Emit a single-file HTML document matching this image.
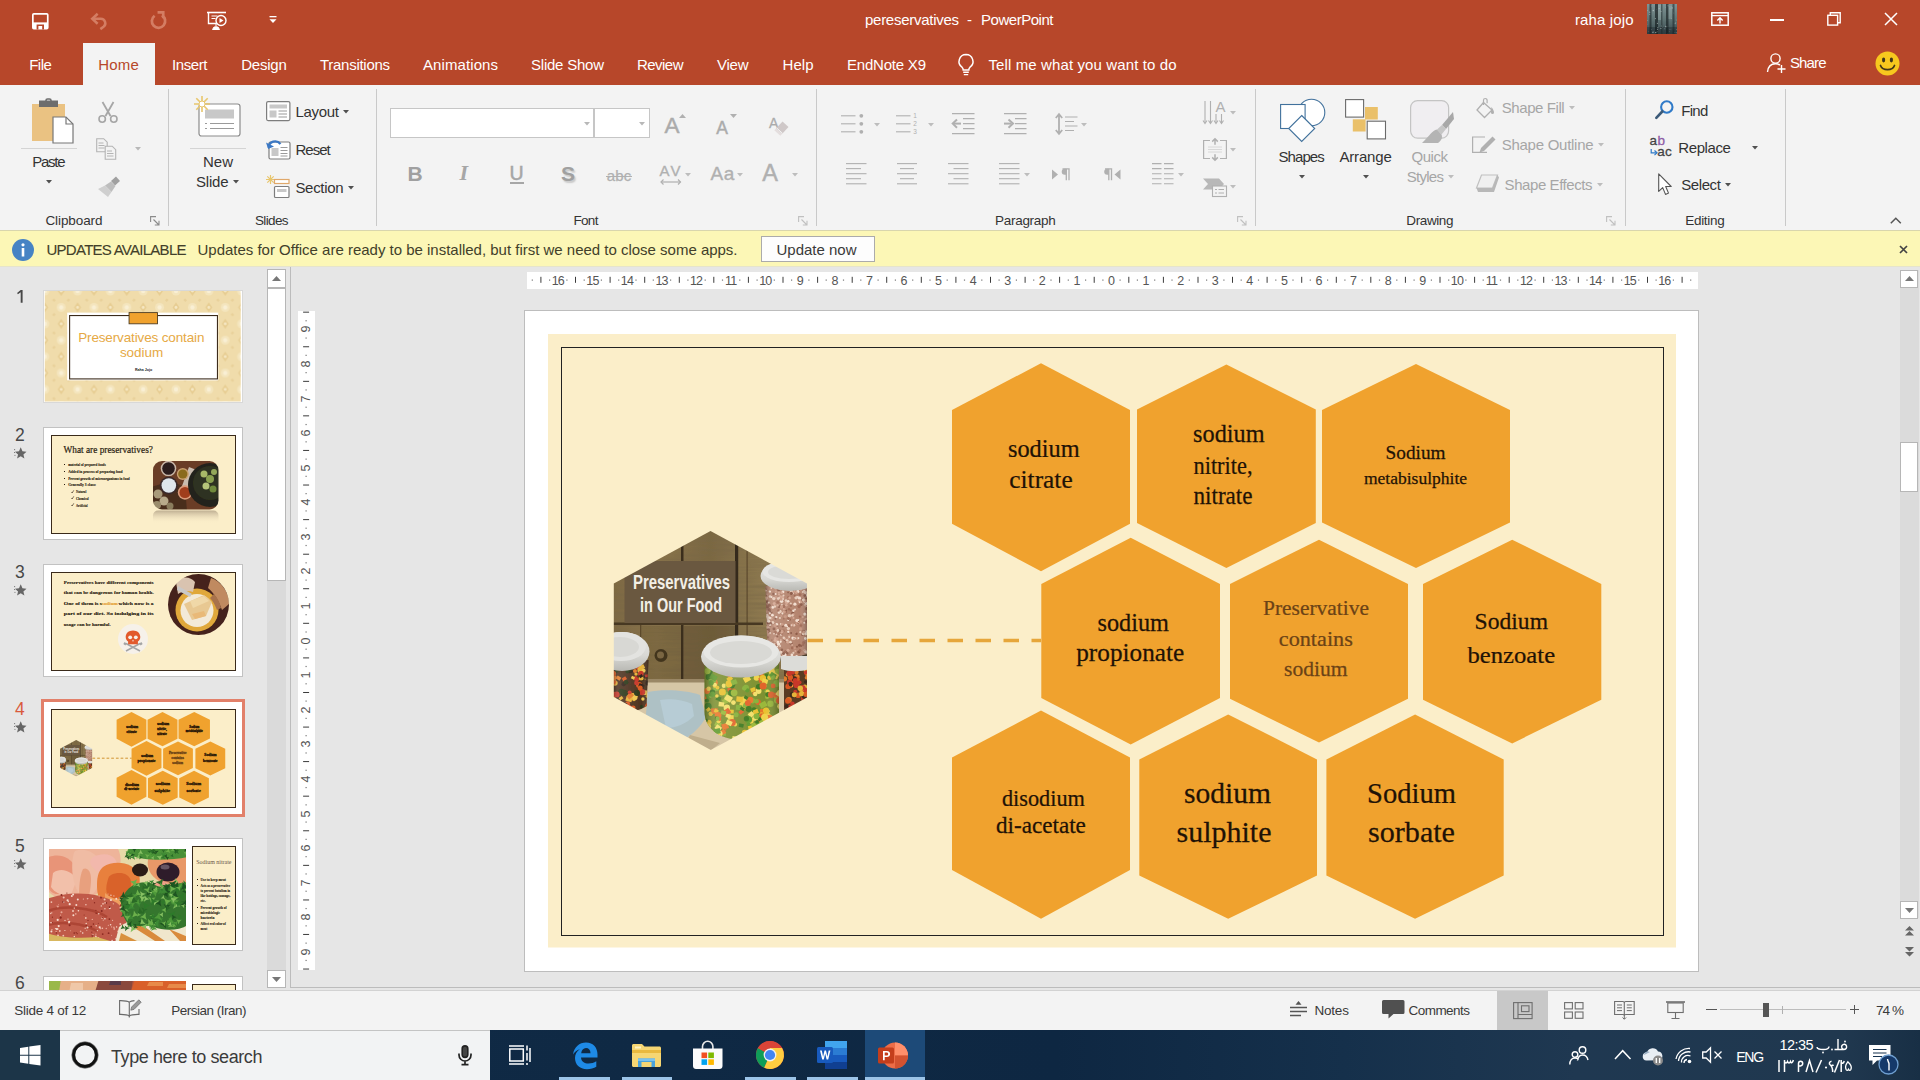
<!DOCTYPE html>
<html><head><meta charset="utf-8"><title>pereservatives - PowerPoint</title>
<style>
html,body{margin:0;padding:0;}
body{width:1920px;height:1080px;overflow:hidden;position:relative;background:#e6e6e6;font-family:"Liberation Sans",sans-serif;}
.a{position:absolute;display:block;}
.t{position:absolute;white-space:nowrap;line-height:24px;height:24px;}
svg{overflow:visible;}
svg text{font-family:"Liberation Serif",serif;}
svg text.sn{font-family:"Liberation Sans",sans-serif;}
</style></head>
<body>
<svg class="a" width="0" height="0" style="left:0;top:0"><symbol id="s4" viewBox="524 310 1175 662" preserveAspectRatio="none"><defs>
<clipPath id="hexclip"><polygon points="710.5,531 807,583.5 807,697.5 710.8,750 613.8,697 613.8,583.5"/></clipPath>
<clipPath id="jarC"><path d="M704.5 662h74.5v50c0 14-12 28-37 28s-37.500-14-37.500-28z"/></clipPath>
<clipPath id="jarR"><path d="M765.500 586h42v68c-14 5-32 5-40-3z"/></clipPath>
<clipPath id="jarL"><path d="M613 660h35.500l-2 46c-8 6-24 8-33.500 6z"/></clipPath>
<clipPath id="jarB"><rect x="784" y="666" width="24" height="44"/></clipPath>
<linearGradient id="wood" x1="0" y1="0" x2="1" y2="0"><stop offset="0" stop-color="#7a6641"/><stop offset=".25" stop-color="#8a744a"/><stop offset=".5" stop-color="#7b6842"/><stop offset=".75" stop-color="#8f7a50"/><stop offset="1" stop-color="#7d6943"/></linearGradient>
<linearGradient id="lid" x1="0" y1="0" x2="0" y2="1"><stop offset="0" stop-color="#ebebe8"/><stop offset=".6" stop-color="#d8d8d4"/><stop offset="1" stop-color="#b9b9b4"/></linearGradient>
<linearGradient id="glass" x1="0" y1="0" x2="1" y2="0"><stop offset="0" stop-color="#000" stop-opacity=".28"/><stop offset=".15" stop-color="#fff" stop-opacity=".12"/><stop offset=".8" stop-color="#fff" stop-opacity="0"/><stop offset="1" stop-color="#000" stop-opacity=".3"/></linearGradient>
<filter id="pb" x="-5%" y="-5%" width="110%" height="110%"><feGaussianBlur stdDeviation=".55"/></filter>
<filter id="wn" x="0" y="0" width="100%" height="100%"><feTurbulence type="fractalNoise" baseFrequency="0.02 0.35" numOctaves="2" seed="4"/><feColorMatrix values="0 0 0 0 0.18  0 0 0 0 0.13  0 0 0 0 0.06  0 0 0 .9 -.25"/></filter>
</defs><rect x="524" y="310" width="1175" height="662" fill="#fff"/><rect x="548" y="334" width="1128" height="613.500" fill="#FBEEC9"/><rect x="561.500" y="347.500" width="1102" height="588" fill="none" stroke="#222" stroke-width="1"/><path d="M807.500 640.500H1041" stroke="#e6a63b" stroke-width="3.700" stroke-dasharray="15.500 12.500"/><polygon points="1041.0,363.3 1130,410 1130,523.8 1041.0,571.3 952,523.8 952,410" fill="#F0A22E"/><polygon points="1226.4,364.5 1315.8,409.5 1315.8,523 1226.4,568 1137,523 1137,409.5" fill="#F0A22E"/><polygon points="1416.0,364 1510,410 1510,522.5 1416.0,568 1322,522.5 1322,410" fill="#F0A22E"/><polygon points="1130.7,537.8 1220,584 1220,698 1130.7,744.4 1041.3,698 1041.3,584" fill="#F0A22E"/><polygon points="1319.0,539.7 1408,584 1408,698.8 1319.0,742.5 1230,698.8 1230,584" fill="#F0A22E"/><polygon points="1512.2,539.7 1601.3,584 1601.3,699.7 1512.2,743.4 1423,699.7 1423,584" fill="#F0A22E"/><polygon points="1041.0,710.6 1130,757.5 1130,870 1041.0,918.7 952,870 952,757.5" fill="#F0A22E"/><polygon points="1228.2,714.4 1317,759.4 1317,875.6 1228.2,918.7 1139.3,875.6 1139.3,759.4" fill="#F0A22E"/><polygon points="1415.1,714.4 1503.7,759.4 1503.7,875.6 1415.1,918.7 1326.4,875.6 1326.4,759.4" fill="#F0A22E"/><g clip-path="url(#hexclip)"><g filter="url(#pb)"><rect x="603" y="520" width="215" height="242" fill="url(#wood)"/><rect x="613" y="530" width="195" height="160" filter="url(#wn)"/><rect x="681" y="530" width="2.5" height="160" fill="#3b2f1e"/><rect x="735" y="530" width="3.2" height="160" fill="#362b1b"/><rect x="640" y="530" width="1.3" height="160" fill="#5b482c"/><rect x="746.5" y="530" width="1.2" height="160" fill="#5b482c"/><rect x="613" y="622.500" width="150" height="2.500" fill="#463822"/><rect x="684" y="626" width="51" height="56" fill="#5e4c2f" opacity=".45"/><rect x="641" y="626" width="40" height="56" fill="#6b5836" opacity=".35"/><circle cx="661" cy="655.500" r="6.500" fill="#43351f"/><circle cx="660.500" cy="655" r="3.500" fill="#7a6642"/><rect x="613" y="679" width="195" height="73" fill="#d6c6a6"/><rect x="613" y="679" width="195" height="3.500" fill="#9a8766"/><path d="M648 692c15-3 38-2 52 3l6 22c-6 12-22 26-40 30l-22-12z" fill="#9dbfd3" opacity=".7"/><path d="M660 700c10-2 24 0 32 4l2 12c-8 8-18 12-28 12z" fill="#bcd3df" opacity=".6"/><path d="M690 735l30 8-10 8-24-8z" fill="#bfae8c"/><rect x="624.500" y="561" width="111" height="62" fill="#6b5940"/><g clip-path="url(#jarR)"><rect x="760" y="584" width="50" height="76" fill="#b4846e"/><circle cx="778.2" cy="598.6" r="1.4" fill="#e6cbb9"/><circle cx="800.1" cy="594.6" r="1.4" fill="#a06a55"/><circle cx="773.4" cy="594.0" r="1.2" fill="#8c5a47"/><circle cx="768.0" cy="617.7" r="1.6" fill="#e6cbb9"/><circle cx="805.7" cy="632.1" r="1.4" fill="#e6cbb9"/><circle cx="789.4" cy="615.8" r="1.7" fill="#e6cbb9"/><circle cx="788.5" cy="597.3" r="1.2" fill="#a06a55"/><circle cx="769.2" cy="609.6" r="1.6" fill="#8c5a47"/><circle cx="768.5" cy="628.0" r="1.1" fill="#e6cbb9"/><circle cx="788.1" cy="592.4" r="0.9" fill="#8c5a47"/><circle cx="785.8" cy="625.2" r="1.5" fill="#f1ddcf"/><circle cx="789.8" cy="619.7" r="1.1" fill="#8c5a47"/><circle cx="794.8" cy="605.1" r="1.4" fill="#a06a55"/><circle cx="785.8" cy="612.0" r="1.3" fill="#a06a55"/><circle cx="807.1" cy="596.3" r="1.2" fill="#d2a590"/><circle cx="770.7" cy="622.2" r="0.9" fill="#c79680"/><circle cx="767.4" cy="627.1" r="1.5" fill="#d2a590"/><circle cx="779.0" cy="612.5" r="1.3" fill="#f1ddcf"/><circle cx="767.0" cy="594.6" r="1.1" fill="#c79680"/><circle cx="793.2" cy="592.2" r="1.5" fill="#c79680"/><circle cx="789.4" cy="635.7" r="1.3" fill="#c79680"/><circle cx="781.0" cy="634.8" r="0.9" fill="#f1ddcf"/><circle cx="779.6" cy="630.8" r="1.3" fill="#8c5a47"/><circle cx="797.8" cy="597.1" r="1.1" fill="#f1ddcf"/><circle cx="804.3" cy="622.8" r="1.0" fill="#f1ddcf"/><circle cx="788.2" cy="649.8" r="1.6" fill="#a06a55"/><circle cx="776.3" cy="617.1" r="1.2" fill="#f1ddcf"/><circle cx="806.1" cy="598.6" r="1.0" fill="#8c5a47"/><circle cx="793.0" cy="588.8" r="1.6" fill="#8c5a47"/><circle cx="775.6" cy="588.3" r="1.2" fill="#d2a590"/><circle cx="790.8" cy="610.3" r="1.0" fill="#a06a55"/><circle cx="805.8" cy="633.8" r="1.5" fill="#f1ddcf"/><circle cx="803.6" cy="642.6" r="1.6" fill="#a06a55"/><circle cx="781.3" cy="615.9" r="1.0" fill="#c79680"/><circle cx="781.6" cy="601.3" r="1.7" fill="#f1ddcf"/><circle cx="771.1" cy="611.8" r="0.9" fill="#e6cbb9"/><circle cx="788.9" cy="625.6" r="1.7" fill="#a06a55"/><circle cx="765.1" cy="649.2" r="1.4" fill="#8c5a47"/><circle cx="791.9" cy="654.9" r="1.4" fill="#f1ddcf"/><circle cx="769.4" cy="647.4" r="1.7" fill="#f1ddcf"/><circle cx="785.1" cy="609.8" r="1.0" fill="#c79680"/><circle cx="779.1" cy="606.5" r="1.6" fill="#8c5a47"/><circle cx="786.7" cy="602.4" r="1.7" fill="#d2a590"/><circle cx="770.5" cy="626.0" r="0.9" fill="#a06a55"/><circle cx="777.1" cy="633.0" r="1.0" fill="#d2a590"/><circle cx="786.8" cy="651.6" r="1.2" fill="#8c5a47"/><circle cx="787.4" cy="642.5" r="1.2" fill="#8c5a47"/><circle cx="791.0" cy="643.2" r="1.5" fill="#8c5a47"/><circle cx="799.5" cy="645.3" r="1.5" fill="#8c5a47"/><circle cx="772.8" cy="622.5" r="1.5" fill="#e6cbb9"/><circle cx="798.8" cy="621.1" r="1.1" fill="#a06a55"/><circle cx="806.1" cy="619.3" r="1.6" fill="#d2a590"/><circle cx="806.0" cy="613.5" r="1.1" fill="#8c5a47"/><circle cx="784.7" cy="611.6" r="1.3" fill="#a06a55"/><circle cx="801.0" cy="621.6" r="1.4" fill="#c79680"/><circle cx="767.7" cy="634.2" r="1.6" fill="#c79680"/><circle cx="797.0" cy="621.5" r="1.0" fill="#c79680"/><circle cx="778.6" cy="644.1" r="1.7" fill="#f1ddcf"/><circle cx="784.4" cy="640.0" r="1.0" fill="#8c5a47"/><circle cx="771.5" cy="596.9" r="1.0" fill="#f1ddcf"/><circle cx="799.5" cy="598.2" r="1.6" fill="#f1ddcf"/><circle cx="792.9" cy="612.5" r="1.3" fill="#8c5a47"/><circle cx="764.9" cy="644.0" r="1.5" fill="#e6cbb9"/><circle cx="787.2" cy="653.4" r="1.2" fill="#8c5a47"/><circle cx="800.4" cy="602.8" r="1.1" fill="#d2a590"/><circle cx="786.1" cy="641.5" r="1.2" fill="#a06a55"/><circle cx="782.4" cy="597.2" r="1.6" fill="#d2a590"/><circle cx="803.5" cy="634.4" r="1.6" fill="#a06a55"/><circle cx="782.5" cy="652.2" r="1.3" fill="#a06a55"/><circle cx="770.7" cy="623.7" r="1.6" fill="#8c5a47"/><circle cx="790.8" cy="642.3" r="1.0" fill="#8c5a47"/><circle cx="784.8" cy="638.8" r="1.3" fill="#d2a590"/><circle cx="794.0" cy="625.2" r="1.3" fill="#e6cbb9"/><circle cx="802.9" cy="592.0" r="1.1" fill="#e6cbb9"/><circle cx="798.0" cy="623.5" r="1.3" fill="#e6cbb9"/><circle cx="783.5" cy="630.9" r="1.3" fill="#a06a55"/><circle cx="772.8" cy="607.4" r="1.3" fill="#f1ddcf"/><circle cx="786.3" cy="605.3" r="1.3" fill="#d2a590"/><circle cx="804.6" cy="650.5" r="1.1" fill="#f1ddcf"/><circle cx="770.0" cy="596.5" r="1.3" fill="#e6cbb9"/><circle cx="793.5" cy="618.0" r="1.1" fill="#d2a590"/><circle cx="798.5" cy="650.8" r="1.0" fill="#c79680"/><circle cx="792.3" cy="613.6" r="1.1" fill="#8c5a47"/><circle cx="806.6" cy="603.4" r="1.7" fill="#f1ddcf"/><circle cx="802.9" cy="599.4" r="1.4" fill="#8c5a47"/><circle cx="771.1" cy="618.2" r="1.3" fill="#d2a590"/><circle cx="782.5" cy="613.0" r="1.0" fill="#d2a590"/><circle cx="764.9" cy="626.8" r="1.3" fill="#e6cbb9"/><circle cx="780.9" cy="624.2" r="1.1" fill="#e6cbb9"/><circle cx="769.0" cy="652.3" r="1.1" fill="#e6cbb9"/><circle cx="767.7" cy="607.0" r="1.6" fill="#8c5a47"/><circle cx="775.9" cy="597.1" r="1.2" fill="#c79680"/><circle cx="800.0" cy="606.1" r="1.0" fill="#a06a55"/><circle cx="789.1" cy="637.0" r="1.0" fill="#e6cbb9"/><circle cx="799.2" cy="600.8" r="1.6" fill="#d2a590"/><circle cx="805.3" cy="632.4" r="1.5" fill="#e6cbb9"/><circle cx="790.8" cy="603.6" r="1.1" fill="#e6cbb9"/><circle cx="784.0" cy="611.7" r="1.3" fill="#d2a590"/><circle cx="791.4" cy="591.0" r="1.5" fill="#e6cbb9"/><circle cx="806.6" cy="606.3" r="1.0" fill="#d2a590"/><circle cx="791.7" cy="625.2" r="1.1" fill="#f1ddcf"/><circle cx="786.0" cy="600.5" r="1.2" fill="#e6cbb9"/><circle cx="807.8" cy="590.6" r="0.9" fill="#a06a55"/><circle cx="788.2" cy="601.3" r="1.3" fill="#f1ddcf"/><circle cx="768.7" cy="645.3" r="1.2" fill="#f1ddcf"/><circle cx="788.0" cy="650.2" r="1.7" fill="#d2a590"/><circle cx="794.3" cy="656.8" r="1.2" fill="#c79680"/><circle cx="796.1" cy="597.8" r="1.7" fill="#e6cbb9"/><circle cx="800.8" cy="589.0" r="1.4" fill="#d2a590"/><circle cx="783.0" cy="591.9" r="1.4" fill="#f1ddcf"/><circle cx="802.3" cy="634.9" r="1.1" fill="#8c5a47"/><circle cx="794.5" cy="591.2" r="1.0" fill="#d2a590"/><circle cx="783.6" cy="606.4" r="1.7" fill="#a06a55"/><circle cx="778.2" cy="590.4" r="1.6" fill="#8c5a47"/><circle cx="779.7" cy="588.1" r="1.2" fill="#f1ddcf"/><circle cx="776.3" cy="633.9" r="1.1" fill="#e6cbb9"/><circle cx="768.0" cy="645.2" r="1.0" fill="#a06a55"/><circle cx="765.8" cy="589.6" r="1.1" fill="#8c5a47"/><circle cx="767.7" cy="655.0" r="1.6" fill="#8c5a47"/><circle cx="792.9" cy="638.1" r="1.6" fill="#f1ddcf"/><circle cx="797.6" cy="638.4" r="1.3" fill="#d2a590"/><circle cx="795.9" cy="633.0" r="0.9" fill="#c79680"/><circle cx="803.2" cy="631.9" r="1.5" fill="#a06a55"/><circle cx="770.1" cy="624.7" r="1.3" fill="#e6cbb9"/><circle cx="800.4" cy="628.9" r="1.6" fill="#c79680"/><circle cx="806.1" cy="633.0" r="1.0" fill="#e6cbb9"/><circle cx="769.9" cy="613.2" r="1.0" fill="#f1ddcf"/><circle cx="788.6" cy="631.9" r="1.4" fill="#c79680"/><circle cx="774.8" cy="606.5" r="1.3" fill="#e6cbb9"/><circle cx="796.9" cy="623.2" r="1.3" fill="#c79680"/><circle cx="787.1" cy="640.2" r="1.3" fill="#e6cbb9"/><circle cx="801.2" cy="604.4" r="1.5" fill="#8c5a47"/><circle cx="796.6" cy="656.3" r="1.3" fill="#f1ddcf"/><circle cx="767.4" cy="651.7" r="1.1" fill="#e6cbb9"/><circle cx="791.1" cy="633.0" r="1.0" fill="#8c5a47"/><circle cx="778.6" cy="633.6" r="1.5" fill="#a06a55"/><circle cx="789.0" cy="588.9" r="0.9" fill="#d2a590"/><circle cx="806.8" cy="595.0" r="1.1" fill="#f1ddcf"/><circle cx="776.8" cy="624.2" r="1.3" fill="#f1ddcf"/><circle cx="797.8" cy="657.5" r="1.3" fill="#d2a590"/><circle cx="807.0" cy="653.5" r="0.9" fill="#f1ddcf"/><circle cx="767.4" cy="623.5" r="1.7" fill="#d2a590"/><circle cx="781.0" cy="652.2" r="1.6" fill="#e6cbb9"/><circle cx="789.6" cy="597.9" r="1.3" fill="#d2a590"/><circle cx="769.8" cy="645.4" r="1.3" fill="#e6cbb9"/><circle cx="794.9" cy="604.2" r="1.6" fill="#f1ddcf"/><circle cx="781.3" cy="599.1" r="1.7" fill="#c79680"/><circle cx="783.8" cy="609.1" r="1.0" fill="#d2a590"/><circle cx="780.5" cy="596.5" r="1.2" fill="#d2a590"/><circle cx="797.0" cy="646.7" r="1.0" fill="#8c5a47"/><circle cx="795.4" cy="651.1" r="1.1" fill="#d2a590"/><circle cx="766.9" cy="615.3" r="1.6" fill="#e6cbb9"/><circle cx="779.9" cy="618.0" r="1.1" fill="#e6cbb9"/><circle cx="776.3" cy="591.6" r="1.4" fill="#c79680"/><circle cx="805.2" cy="605.5" r="1.1" fill="#a06a55"/><circle cx="777.9" cy="642.1" r="1.5" fill="#f1ddcf"/><circle cx="802.9" cy="644.8" r="1.4" fill="#a06a55"/><circle cx="788.2" cy="638.4" r="0.9" fill="#c79680"/><circle cx="782.1" cy="631.0" r="1.0" fill="#d2a590"/><circle cx="785.4" cy="651.8" r="1.3" fill="#8c5a47"/><circle cx="784.8" cy="612.1" r="1.1" fill="#c79680"/><circle cx="796.5" cy="633.7" r="1.2" fill="#8c5a47"/><circle cx="777.2" cy="627.0" r="1.2" fill="#8c5a47"/><circle cx="792.3" cy="593.3" r="1.3" fill="#f1ddcf"/><circle cx="788.2" cy="619.7" r="1.2" fill="#f1ddcf"/><circle cx="782.8" cy="626.3" r="1.1" fill="#8c5a47"/><circle cx="779.0" cy="594.4" r="1.1" fill="#d2a590"/><circle cx="799.6" cy="602.1" r="0.9" fill="#f1ddcf"/><circle cx="780.8" cy="640.2" r="1.1" fill="#d2a590"/><circle cx="778.9" cy="592.3" r="1.1" fill="#d2a590"/><circle cx="769.5" cy="623.2" r="1.4" fill="#8c5a47"/><circle cx="768.1" cy="650.8" r="1.2" fill="#c79680"/><circle cx="783.6" cy="654.8" r="1.6" fill="#e6cbb9"/><circle cx="769.6" cy="617.8" r="1.5" fill="#f1ddcf"/><circle cx="806.6" cy="622.3" r="1.0" fill="#a06a55"/><circle cx="801.6" cy="656.1" r="1.1" fill="#e6cbb9"/><circle cx="773.8" cy="598.6" r="1.7" fill="#e6cbb9"/><circle cx="805.4" cy="638.5" r="1.4" fill="#f1ddcf"/><circle cx="767.7" cy="642.4" r="0.9" fill="#8c5a47"/><circle cx="774.2" cy="652.4" r="1.4" fill="#d2a590"/><circle cx="806.3" cy="631.9" r="1.3" fill="#f1ddcf"/><circle cx="794.7" cy="595.8" r="1.0" fill="#a06a55"/><circle cx="805.5" cy="601.4" r="1.1" fill="#a06a55"/><circle cx="764.1" cy="625.6" r="1.7" fill="#d2a590"/><circle cx="806.2" cy="633.1" r="1.6" fill="#f1ddcf"/><circle cx="787.2" cy="626.3" r="0.9" fill="#f1ddcf"/><circle cx="795.0" cy="609.5" r="0.9" fill="#f1ddcf"/><circle cx="802.9" cy="633.3" r="1.0" fill="#8c5a47"/><circle cx="793.4" cy="652.8" r="1.1" fill="#e6cbb9"/><circle cx="794.6" cy="638.3" r="1.2" fill="#f1ddcf"/><circle cx="772.7" cy="643.8" r="1.5" fill="#a06a55"/><circle cx="767.0" cy="622.7" r="1.1" fill="#8c5a47"/><circle cx="774.2" cy="603.5" r="1.5" fill="#d2a590"/><circle cx="768.8" cy="631.7" r="1.4" fill="#8c5a47"/><circle cx="785.3" cy="651.7" r="0.9" fill="#a06a55"/><circle cx="770.4" cy="615.5" r="1.1" fill="#a06a55"/><circle cx="770.2" cy="591.6" r="0.9" fill="#f1ddcf"/><circle cx="783.8" cy="637.8" r="1.2" fill="#e6cbb9"/><circle cx="807.9" cy="653.2" r="1.2" fill="#8c5a47"/><circle cx="792.7" cy="624.7" r="1.3" fill="#d2a590"/><circle cx="793.2" cy="614.5" r="1.2" fill="#d2a590"/><circle cx="783.5" cy="595.6" r="1.0" fill="#e6cbb9"/><circle cx="779.5" cy="654.9" r="1.0" fill="#8c5a47"/><circle cx="780.7" cy="641.8" r="1.1" fill="#f1ddcf"/><circle cx="767.9" cy="637.4" r="1.1" fill="#a06a55"/><circle cx="804.5" cy="601.5" r="1.2" fill="#f1ddcf"/><circle cx="765.3" cy="616.8" r="1.5" fill="#f1ddcf"/><circle cx="765.8" cy="590.4" r="1.0" fill="#e6cbb9"/><circle cx="775.3" cy="640.3" r="1.6" fill="#d2a590"/><circle cx="780.0" cy="611.4" r="1.7" fill="#e6cbb9"/><circle cx="775.5" cy="638.2" r="1.2" fill="#d2a590"/><circle cx="777.1" cy="638.5" r="1.4" fill="#c79680"/><circle cx="805.6" cy="592.6" r="1.6" fill="#e6cbb9"/><circle cx="784.9" cy="655.0" r="1.7" fill="#f1ddcf"/><circle cx="798.8" cy="651.9" r="1.6" fill="#8c5a47"/><circle cx="804.8" cy="600.8" r="1.5" fill="#c79680"/><circle cx="777.3" cy="636.4" r="1.0" fill="#8c5a47"/><circle cx="778.4" cy="610.4" r="1.2" fill="#a06a55"/><circle cx="767.5" cy="601.8" r="1.5" fill="#8c5a47"/><circle cx="781.9" cy="633.5" r="1.3" fill="#a06a55"/><circle cx="778.3" cy="656.6" r="1.6" fill="#e6cbb9"/><circle cx="775.7" cy="593.9" r="1.0" fill="#f1ddcf"/><circle cx="807.5" cy="656.0" r="1.0" fill="#8c5a47"/><circle cx="782.3" cy="631.4" r="1.4" fill="#c79680"/><circle cx="787.7" cy="642.2" r="1.5" fill="#d2a590"/><circle cx="776.9" cy="627.7" r="1.2" fill="#c79680"/><circle cx="775.5" cy="618.8" r="1.0" fill="#8c5a47"/><circle cx="770.7" cy="649.9" r="1.4" fill="#d2a590"/><circle cx="766.9" cy="605.6" r="1.1" fill="#a06a55"/><circle cx="774.2" cy="644.6" r="1.4" fill="#e6cbb9"/><circle cx="768.5" cy="621.2" r="1.6" fill="#f1ddcf"/><circle cx="804.2" cy="590.8" r="1.1" fill="#e6cbb9"/><circle cx="766.2" cy="630.0" r="1.6" fill="#8c5a47"/><circle cx="804.9" cy="614.1" r="1.6" fill="#f1ddcf"/><circle cx="790.5" cy="642.2" r="1.4" fill="#e6cbb9"/><circle cx="768.7" cy="629.7" r="1.4" fill="#8c5a47"/><circle cx="765.6" cy="611.8" r="0.9" fill="#d2a590"/><circle cx="765.7" cy="639.3" r="1.6" fill="#e6cbb9"/><circle cx="800.0" cy="616.6" r="1.2" fill="#a06a55"/><circle cx="777.7" cy="602.2" r="1.5" fill="#a06a55"/><circle cx="785.3" cy="616.6" r="1.5" fill="#c79680"/><circle cx="788.2" cy="632.7" r="1.0" fill="#8c5a47"/><circle cx="781.5" cy="607.0" r="1.7" fill="#c79680"/><circle cx="777.5" cy="654.7" r="1.1" fill="#a06a55"/><circle cx="802.9" cy="617.0" r="0.9" fill="#d2a590"/><circle cx="792.4" cy="615.4" r="1.2" fill="#e6cbb9"/><circle cx="783.1" cy="599.0" r="1.0" fill="#e6cbb9"/><circle cx="781.9" cy="649.8" r="1.3" fill="#8c5a47"/><circle cx="769.7" cy="591.6" r="1.0" fill="#f1ddcf"/><circle cx="767.9" cy="631.6" r="1.2" fill="#a06a55"/><circle cx="771.6" cy="612.4" r="1.0" fill="#8c5a47"/><circle cx="804.7" cy="595.6" r="1.3" fill="#8c5a47"/><circle cx="777.3" cy="646.6" r="0.9" fill="#f1ddcf"/><circle cx="777.8" cy="630.5" r="1.4" fill="#e6cbb9"/><circle cx="803.8" cy="631.4" r="1.6" fill="#8c5a47"/><circle cx="792.2" cy="648.0" r="1.4" fill="#a06a55"/><circle cx="801.2" cy="646.0" r="1.0" fill="#8c5a47"/><circle cx="765.8" cy="653.7" r="1.0" fill="#d2a590"/><circle cx="769.4" cy="605.3" r="1.5" fill="#8c5a47"/><circle cx="765.8" cy="627.4" r="1.5" fill="#e6cbb9"/><circle cx="793.4" cy="610.7" r="1.2" fill="#f1ddcf"/><circle cx="788.2" cy="631.9" r="1.1" fill="#f1ddcf"/><circle cx="777.6" cy="605.4" r="1.2" fill="#d2a590"/><circle cx="783.7" cy="618.7" r="0.9" fill="#a06a55"/><circle cx="807.4" cy="620.6" r="1.3" fill="#a06a55"/><circle cx="798.3" cy="620.1" r="1.0" fill="#f1ddcf"/><circle cx="781.6" cy="592.7" r="1.2" fill="#d2a590"/><circle cx="768.0" cy="618.9" r="1.3" fill="#e6cbb9"/><circle cx="765.8" cy="597.1" r="1.6" fill="#d2a590"/><circle cx="798.2" cy="623.8" r="0.9" fill="#a06a55"/><circle cx="803.4" cy="633.7" r="1.5" fill="#e6cbb9"/><circle cx="801.7" cy="657.7" r="1.5" fill="#e6cbb9"/><circle cx="772.5" cy="656.7" r="1.3" fill="#8c5a47"/><circle cx="794.2" cy="638.5" r="1.1" fill="#d2a590"/><circle cx="790.9" cy="605.7" r="1.2" fill="#a06a55"/><circle cx="776.1" cy="645.1" r="1.0" fill="#a06a55"/><circle cx="806.4" cy="621.6" r="1.4" fill="#a06a55"/><circle cx="786.3" cy="610.3" r="0.9" fill="#8c5a47"/><circle cx="781.8" cy="632.6" r="1.1" fill="#d2a590"/><circle cx="803.4" cy="599.8" r="1.5" fill="#e6cbb9"/><circle cx="797.8" cy="591.4" r="1.6" fill="#f1ddcf"/><circle cx="788.4" cy="628.6" r="1.6" fill="#e6cbb9"/><circle cx="775.1" cy="625.5" r="1.6" fill="#c79680"/><circle cx="799.1" cy="606.5" r="1.7" fill="#a06a55"/><circle cx="770.4" cy="611.2" r="1.0" fill="#8c5a47"/><circle cx="771.8" cy="640.1" r="0.9" fill="#a06a55"/><circle cx="775.2" cy="632.7" r="1.7" fill="#a06a55"/><circle cx="804.9" cy="650.7" r="1.5" fill="#c79680"/><circle cx="765.5" cy="598.5" r="1.4" fill="#f1ddcf"/><circle cx="782.4" cy="613.5" r="0.9" fill="#f1ddcf"/><circle cx="774.0" cy="633.7" r="0.9" fill="#e6cbb9"/><circle cx="789.0" cy="609.3" r="1.3" fill="#a06a55"/><circle cx="773.9" cy="628.9" r="1.4" fill="#8c5a47"/><circle cx="780.1" cy="646.0" r="1.0" fill="#e6cbb9"/><circle cx="805.2" cy="605.1" r="1.0" fill="#e6cbb9"/><circle cx="766.8" cy="598.1" r="1.4" fill="#d2a590"/><circle cx="781.7" cy="606.5" r="0.9" fill="#c79680"/><circle cx="800.1" cy="650.5" r="1.4" fill="#a06a55"/><circle cx="783.5" cy="653.6" r="1.5" fill="#8c5a47"/><circle cx="771.3" cy="588.0" r="0.9" fill="#e6cbb9"/><circle cx="781.9" cy="604.6" r="0.9" fill="#e6cbb9"/><circle cx="764.5" cy="626.6" r="1.7" fill="#8c5a47"/><circle cx="782.2" cy="624.3" r="1.4" fill="#c79680"/><circle cx="792.2" cy="644.9" r="1.0" fill="#d2a590"/><circle cx="766.8" cy="631.8" r="1.7" fill="#c79680"/><circle cx="798.5" cy="638.1" r="0.9" fill="#f1ddcf"/><circle cx="796.8" cy="620.6" r="1.5" fill="#f1ddcf"/><circle cx="771.7" cy="657.8" r="1.1" fill="#c79680"/><circle cx="765.7" cy="611.5" r="1.5" fill="#c79680"/><circle cx="805.5" cy="606.4" r="0.9" fill="#c79680"/><circle cx="788.4" cy="618.5" r="1.5" fill="#a06a55"/><circle cx="806.8" cy="608.7" r="1.6" fill="#8c5a47"/><circle cx="767.8" cy="623.5" r="1.0" fill="#8c5a47"/><circle cx="801.0" cy="602.2" r="1.0" fill="#d2a590"/><circle cx="772.4" cy="615.2" r="1.4" fill="#f1ddcf"/><circle cx="803.9" cy="632.1" r="1.5" fill="#c79680"/><circle cx="801.0" cy="625.5" r="1.3" fill="#a06a55"/><circle cx="794.7" cy="648.0" r="1.2" fill="#c79680"/><circle cx="774.3" cy="649.9" r="1.5" fill="#f1ddcf"/><circle cx="791.4" cy="593.4" r="1.6" fill="#8c5a47"/><circle cx="765.4" cy="595.8" r="1.4" fill="#8c5a47"/><circle cx="779.2" cy="597.9" r="0.9" fill="#e6cbb9"/><circle cx="770.1" cy="633.0" r="0.9" fill="#e6cbb9"/><circle cx="796.4" cy="592.6" r="1.4" fill="#d2a590"/><circle cx="772.8" cy="654.8" r="1.3" fill="#c79680"/><circle cx="766.9" cy="648.7" r="1.6" fill="#f1ddcf"/><circle cx="768.7" cy="602.4" r="1.0" fill="#e6cbb9"/><circle cx="805.8" cy="651.8" r="1.5" fill="#e6cbb9"/><circle cx="800.3" cy="632.2" r="1.1" fill="#e6cbb9"/><circle cx="769.8" cy="643.4" r="1.4" fill="#d2a590"/><rect x="765" y="584" width="43" height="76" fill="url(#glass)"/></g><path d="M762.500 650c8 8 30 9 45 4v4c-14 5-38 4-45-4z" fill="#3c3428" opacity=".75"/><ellipse cx="790" cy="576" rx="29.500" ry="15" fill="url(#lid)"/><ellipse cx="789" cy="571.500" rx="26.500" ry="10.500" fill="#e6e6e3"/><ellipse cx="789" cy="572" rx="21" ry="7" fill="#dadad6"/><g clip-path="url(#jarB)"><rect x="784" y="664" width="24" height="48" fill="#5a3a24"/><circle cx="791.7" cy="685.8" r="1.6" fill="#e6b33a"/><circle cx="806.3" cy="670.0" r="2.7" fill="#e6b33a"/><circle cx="802.5" cy="693.3" r="2.3" fill="#e6b33a"/><circle cx="798.8" cy="669.3" r="2.2" fill="#3d2a1c"/><circle cx="796.4" cy="672.1" r="2.3" fill="#e07b2a"/><circle cx="796.9" cy="677.1" r="2.8" fill="#e07b2a"/><circle cx="797.8" cy="680.1" r="2.2" fill="#d95a22"/><circle cx="788.8" cy="700.0" r="3.0" fill="#e07b2a"/><circle cx="792.3" cy="672.0" r="2.6" fill="#c7392a"/><circle cx="807.2" cy="692.9" r="2.9" fill="#d95a22"/><circle cx="790.3" cy="707.6" r="2.0" fill="#c7392a"/><circle cx="806.5" cy="677.7" r="1.8" fill="#e07b2a"/><circle cx="795.8" cy="709.6" r="2.4" fill="#e07b2a"/><circle cx="799.1" cy="682.9" r="2.2" fill="#3d2a1c"/><circle cx="805.4" cy="699.3" r="2.2" fill="#e07b2a"/><circle cx="792.9" cy="680.7" r="2.2" fill="#d95a22"/><circle cx="796.0" cy="683.9" r="2.8" fill="#c7392a"/><circle cx="806.7" cy="673.3" r="2.4" fill="#d95a22"/><circle cx="799.5" cy="682.6" r="2.1" fill="#c7392a"/><circle cx="804.8" cy="686.9" r="2.4" fill="#e6b33a"/><circle cx="788.1" cy="686.4" r="2.7" fill="#d95a22"/><circle cx="789.5" cy="682.0" r="2.5" fill="#c7392a"/><circle cx="796.2" cy="679.2" r="2.7" fill="#d95a22"/><circle cx="787.7" cy="674.6" r="1.9" fill="#e6b33a"/><circle cx="798.5" cy="682.6" r="1.9" fill="#c7392a"/><circle cx="790.2" cy="708.1" r="3.0" fill="#c7392a"/><circle cx="807.1" cy="672.3" r="2.1" fill="#c7392a"/><circle cx="803.1" cy="698.8" r="2.2" fill="#c7392a"/><circle cx="786.6" cy="706.3" r="2.0" fill="#3d2a1c"/><circle cx="795.1" cy="668.5" r="2.8" fill="#3d2a1c"/><circle cx="800.6" cy="689.0" r="2.5" fill="#3d2a1c"/><circle cx="784.5" cy="678.8" r="2.6" fill="#e07b2a"/><circle cx="801.8" cy="706.1" r="2.2" fill="#d95a22"/><circle cx="798.1" cy="695.2" r="2.8" fill="#d95a22"/><circle cx="804.5" cy="696.5" r="2.5" fill="#3d2a1c"/><circle cx="794.4" cy="678.9" r="2.6" fill="#3d2a1c"/><circle cx="789.8" cy="684.8" r="2.6" fill="#c7392a"/><circle cx="790.0" cy="685.8" r="2.2" fill="#d95a22"/><circle cx="804.6" cy="689.8" r="2.5" fill="#c7392a"/><circle cx="805.5" cy="681.8" r="1.6" fill="#3d2a1c"/><circle cx="805.8" cy="672.5" r="2.0" fill="#c7392a"/><circle cx="787.9" cy="700.8" r="2.9" fill="#d95a22"/><circle cx="792.4" cy="703.6" r="2.2" fill="#c7392a"/><circle cx="801.2" cy="689.5" r="2.5" fill="#e6b33a"/><circle cx="796.5" cy="685.2" r="2.9" fill="#c7392a"/><circle cx="807.8" cy="675.7" r="2.3" fill="#e07b2a"/><circle cx="801.5" cy="693.8" r="2.5" fill="#e6b33a"/><circle cx="790.6" cy="684.8" r="1.6" fill="#3d2a1c"/><circle cx="806.0" cy="694.4" r="2.5" fill="#d95a22"/><circle cx="790.4" cy="677.4" r="2.6" fill="#d95a22"/><circle cx="807.3" cy="709.8" r="2.9" fill="#3d2a1c"/><circle cx="789.1" cy="673.4" r="2.7" fill="#c7392a"/><circle cx="795.3" cy="691.6" r="1.9" fill="#c7392a"/><circle cx="792.5" cy="694.8" r="2.7" fill="#3d2a1c"/><circle cx="795.2" cy="680.4" r="2.4" fill="#c7392a"/><circle cx="802.7" cy="687.7" r="2.7" fill="#c7392a"/><circle cx="790.4" cy="683.8" r="2.0" fill="#3d2a1c"/><circle cx="800.3" cy="688.2" r="2.7" fill="#e6b33a"/><circle cx="792.6" cy="695.5" r="2.0" fill="#3d2a1c"/><circle cx="794.3" cy="694.8" r="2.5" fill="#e6b33a"/></g><path d="M781 656h28v13c-8 3-20 3-28 0z" fill="#dcdcd8"/><g clip-path="url(#jarL)"><rect x="613" y="658" width="38" height="56" fill="#4e3320"/><rect x="616.1" y="676.3" width="4.4" height="3.5" fill="#e07b2a" transform="rotate(32 618.3 678.6)"/><circle cx="640.4" cy="670.7" r="2.9" fill="#f0c850"/><circle cx="636.0" cy="674.1" r="1.7" fill="#e6b33a"/><circle cx="616.6" cy="670.9" r="2.0" fill="#2c3a1a"/><circle cx="640.5" cy="674.0" r="2.2" fill="#d95a22"/><rect x="641.3" y="690.4" width="5.7" height="4.6" fill="#f0c850" transform="rotate(4 644.2 693.2)"/><circle cx="635.3" cy="678.3" r="2.4" fill="#c7392a"/><circle cx="639.0" cy="685.1" r="3.0" fill="#d95a22"/><circle cx="627.7" cy="703.7" r="2.4" fill="#d95a22"/><circle cx="629.3" cy="670.9" r="2.4" fill="#33241a"/><circle cx="634.0" cy="699.3" r="1.9" fill="#e6b33a"/><circle cx="632.7" cy="695.9" r="2.9" fill="#e6b33a"/><rect x="646.1" y="694.6" width="3.8" height="3.0" fill="#e6b33a" transform="rotate(-38 648.0 696.4)"/><rect x="631.2" y="693.7" width="6.2" height="4.9" fill="#e6b33a" transform="rotate(-32 634.3 696.8)"/><rect x="628.1" y="698.5" width="3.7" height="2.9" fill="#c7392a" transform="rotate(10 629.9 700.3)"/><rect x="622.7" y="703.2" width="4.4" height="3.5" fill="#33241a" transform="rotate(4 624.9 705.4)"/><circle cx="644.9" cy="677.6" r="2.1" fill="#e6b33a"/><circle cx="641.9" cy="678.1" r="2.9" fill="#33241a"/><rect x="645.3" y="703.8" width="4.3" height="3.4" fill="#c7392a" transform="rotate(23 647.5 705.9)"/><rect x="622.5" y="677.1" width="4.2" height="3.3" fill="#d95a22" transform="rotate(-33 624.6 679.2)"/><circle cx="647.9" cy="683.1" r="2.5" fill="#33241a"/><rect x="613.1" y="676.8" width="3.2" height="2.6" fill="#c7392a" transform="rotate(-2 614.7 678.4)"/><rect x="637.4" y="664.5" width="4.8" height="3.8" fill="#d95a22" transform="rotate(9 639.8 666.9)"/><circle cx="634.9" cy="697.4" r="2.6" fill="#f0c850"/><circle cx="614.4" cy="694.4" r="2.6" fill="#c7392a"/><circle cx="619.3" cy="665.8" r="2.8" fill="#f0c850"/><circle cx="643.5" cy="670.7" r="2.1" fill="#f0c850"/><circle cx="623.6" cy="684.2" r="2.1" fill="#33241a"/><circle cx="633.2" cy="707.9" r="2.4" fill="#d95a22"/><circle cx="617.2" cy="702.9" r="2.5" fill="#33241a"/><rect x="610.9" y="680.0" width="5.1" height="4.1" fill="#f0c850" transform="rotate(-2 613.5 682.6)"/><rect x="624.8" y="666.3" width="5.3" height="4.2" fill="#c7392a" transform="rotate(10 627.4 668.9)"/><circle cx="627.9" cy="664.4" r="2.7" fill="#2c3a1a"/><circle cx="643.4" cy="670.2" r="1.6" fill="#f0c850"/><rect x="625.7" y="696.6" width="6.2" height="4.9" fill="#e6b33a" transform="rotate(17 628.8 699.7)"/><circle cx="642.9" cy="699.0" r="1.7" fill="#f0c850"/><rect x="627.4" y="693.1" width="6.0" height="4.8" fill="#e07b2a" transform="rotate(-39 630.4 696.1)"/><circle cx="613.5" cy="695.2" r="2.9" fill="#e07b2a"/><circle cx="623.9" cy="692.8" r="3.1" fill="#2c3a1a"/><circle cx="615.1" cy="681.6" r="2.5" fill="#33241a"/><circle cx="618.8" cy="710.4" r="1.8" fill="#f0c850"/><rect x="638.2" y="684.0" width="5.7" height="4.6" fill="#33241a" transform="rotate(23 641.1 686.9)"/><rect x="631.1" y="676.3" width="3.4" height="2.7" fill="#f0c850" transform="rotate(26 632.8 678.0)"/><circle cx="624.6" cy="693.1" r="3.2" fill="#2c3a1a"/><circle cx="642.1" cy="692.1" r="3.2" fill="#c7392a"/><circle cx="637.0" cy="692.9" r="3.0" fill="#2c3a1a"/><circle cx="637.1" cy="679.4" r="2.0" fill="#c7392a"/><circle cx="641.6" cy="706.6" r="1.7" fill="#2c3a1a"/><rect x="642.3" y="709.8" width="3.7" height="2.9" fill="#2c3a1a" transform="rotate(4 644.2 711.7)"/><circle cx="640.2" cy="688.0" r="2.5" fill="#d95a22"/><circle cx="640.9" cy="673.6" r="2.8" fill="#c7392a"/><circle cx="615.0" cy="683.0" r="2.7" fill="#e6b33a"/><rect x="610.9" y="680.0" width="4.9" height="3.9" fill="#d95a22" transform="rotate(22 613.3 682.5)"/><circle cx="621.2" cy="691.8" r="3.0" fill="#2c3a1a"/><circle cx="629.7" cy="692.3" r="1.9" fill="#c7392a"/><circle cx="641.2" cy="677.9" r="2.5" fill="#e6b33a"/><circle cx="631.1" cy="671.2" r="1.7" fill="#33241a"/><circle cx="616.7" cy="694.4" r="2.9" fill="#c7392a"/><circle cx="614.1" cy="677.5" r="2.6" fill="#e07b2a"/><circle cx="647.7" cy="705.6" r="2.4" fill="#d95a22"/><rect x="643.6" y="675.7" width="3.5" height="2.8" fill="#33241a" transform="rotate(26 645.4 677.4)"/><rect x="645.1" y="674.5" width="3.3" height="2.7" fill="#c7392a" transform="rotate(-10 646.7 676.2)"/><circle cx="614.0" cy="665.7" r="2.2" fill="#f0c850"/><rect x="644.4" y="706.0" width="3.4" height="2.7" fill="#d95a22" transform="rotate(34 646.2 707.7)"/><rect x="635.6" y="666.2" width="4.2" height="3.4" fill="#c7392a" transform="rotate(37 637.7 668.3)"/><circle cx="636.4" cy="682.9" r="2.3" fill="#c7392a"/><rect x="619.4" y="696.7" width="3.8" height="3.0" fill="#e6b33a" transform="rotate(-35 621.2 698.6)"/><rect x="629.3" y="662.3" width="6.1" height="4.9" fill="#e6b33a" transform="rotate(17 632.3 665.3)"/><circle cx="635.6" cy="711.3" r="1.7" fill="#c7392a"/><circle cx="613.2" cy="673.5" r="2.8" fill="#d95a22"/><circle cx="639.5" cy="669.1" r="2.1" fill="#e6b33a"/><circle cx="626.1" cy="682.2" r="2.3" fill="#2c3a1a"/><rect x="634.0" y="661.9" width="5.5" height="4.4" fill="#c7392a" transform="rotate(-27 636.7 664.6)"/><rect x="639.6" y="665.1" width="5.2" height="4.1" fill="#e6b33a" transform="rotate(-29 642.1 667.7)"/><circle cx="628.7" cy="668.7" r="3.1" fill="#2c3a1a"/><circle cx="615.6" cy="710.7" r="2.1" fill="#c7392a"/><circle cx="635.0" cy="670.9" r="2.0" fill="#e07b2a"/><circle cx="628.8" cy="706.7" r="2.3" fill="#c7392a"/><circle cx="627.4" cy="671.5" r="2.0" fill="#2c3a1a"/><rect x="639.4" y="674.7" width="3.5" height="2.8" fill="#33241a" transform="rotate(-31 641.1 676.5)"/><rect x="613" y="658" width="36" height="56" fill="url(#glass)"/></g><ellipse cx="622" cy="651.500" rx="27.500" ry="19.500" fill="url(#lid)"/><ellipse cx="621" cy="646.500" rx="25" ry="14.500" fill="#e3e3e0"/><ellipse cx="620" cy="647" rx="19" ry="10" fill="#d8d8d4"/><g clip-path="url(#jarC)"><rect x="700" y="660" width="84" height="82" fill="#7d9130"/><circle cx="778.4" cy="672.2" r="3.4" fill="#9ab83a"/><circle cx="767.5" cy="676.8" r="3.2" fill="#3f7a22"/><circle cx="723.9" cy="685.7" r="2.2" fill="#f3e06a"/><circle cx="772.1" cy="672.3" r="3.1" fill="#f0d24a"/><circle cx="752.6" cy="700.7" r="2.7" fill="#86b13a"/><circle cx="704.1" cy="729.6" r="2.7" fill="#e8772a"/><circle cx="707.1" cy="698.3" r="2.3" fill="#e8772a"/><rect x="714.6" y="721.9" width="6.2" height="4.9" fill="#9ab83a" transform="rotate(26 717.7 725.0)"/><circle cx="771.6" cy="722.1" r="3.2" fill="#e8772a"/><circle cx="750.5" cy="720.4" r="3.3" fill="#f0d24a"/><circle cx="709.0" cy="722.2" r="2.5" fill="#e9c12f"/><circle cx="730.4" cy="688.9" r="3.0" fill="#e2642a"/><circle cx="735.1" cy="724.5" r="2.0" fill="#f0d24a"/><circle cx="746.8" cy="740.9" r="1.9" fill="#3f7a22"/><circle cx="769.2" cy="694.4" r="3.5" fill="#86b13a"/><rect x="727.8" y="682.8" width="6.6" height="5.3" fill="#3f7a22" transform="rotate(29 731.1 686.1)"/><rect x="745.5" y="732.1" width="4.6" height="3.7" fill="#5f9a2d" transform="rotate(-0 747.8 734.5)"/><circle cx="743.0" cy="707.3" r="2.8" fill="#e9c12f"/><circle cx="710.7" cy="713.8" r="2.1" fill="#f0d24a"/><circle cx="766.1" cy="670.2" r="2.0" fill="#9ab83a"/><rect x="765.0" y="712.5" width="5.3" height="4.2" fill="#9ab83a" transform="rotate(-32 767.6 715.1)"/><circle cx="770.1" cy="721.1" r="1.9" fill="#5f9a2d"/><circle cx="748.5" cy="724.4" r="2.0" fill="#5f9a2d"/><rect x="711.1" y="708.4" width="6.7" height="5.4" fill="#e8772a" transform="rotate(-3 714.4 711.8)"/><rect x="732.3" y="736.3" width="3.7" height="2.9" fill="#f3e06a" transform="rotate(8 734.1 738.2)"/><rect x="746.3" y="667.1" width="7.1" height="5.7" fill="#e9c12f" transform="rotate(-13 749.8 670.7)"/><rect x="719.7" y="690.2" width="5.2" height="4.1" fill="#3f7a22" transform="rotate(28 722.3 692.8)"/><circle cx="708.1" cy="706.3" r="3.5" fill="#3f7a22"/><circle cx="736.1" cy="714.8" r="2.5" fill="#86b13a"/><circle cx="728.7" cy="682.9" r="3.0" fill="#9ab83a"/><rect x="774.2" y="722.0" width="7.0" height="5.6" fill="#e9c12f" transform="rotate(31 777.7 725.5)"/><rect x="768.3" y="667.6" width="5.9" height="4.7" fill="#f0d24a" transform="rotate(10 771.2 670.5)"/><circle cx="751.7" cy="727.7" r="1.9" fill="#5f9a2d"/><circle cx="743.5" cy="700.1" r="3.5" fill="#f0d24a"/><rect x="728.5" y="678.4" width="3.8" height="3.1" fill="#86b13a" transform="rotate(-33 730.4 680.4)"/><circle cx="748.9" cy="737.0" r="2.6" fill="#86b13a"/><rect x="724.0" y="695.8" width="4.6" height="3.7" fill="#9ab83a" transform="rotate(19 726.3 698.1)"/><rect x="722.8" y="698.6" width="6.1" height="4.9" fill="#9ab83a" transform="rotate(-24 725.8 701.6)"/><circle cx="758.0" cy="702.1" r="2.8" fill="#e2642a"/><circle cx="727.6" cy="685.9" r="2.2" fill="#86b13a"/><rect x="774.2" y="693.9" width="6.9" height="5.5" fill="#e8772a" transform="rotate(-21 777.7 697.3)"/><circle cx="746.3" cy="704.4" r="2.3" fill="#9ab83a"/><circle cx="762.7" cy="679.7" r="1.9" fill="#3f7a22"/><circle cx="708.7" cy="696.7" r="2.6" fill="#5f9a2d"/><circle cx="779.2" cy="718.1" r="3.5" fill="#f3e06a"/><rect x="727.9" y="715.1" width="5.8" height="4.7" fill="#f0d24a" transform="rotate(1 730.8 718.0)"/><circle cx="760.1" cy="723.0" r="3.2" fill="#e2642a"/><rect x="748.9" y="711.7" width="6.1" height="4.9" fill="#f3e06a" transform="rotate(-40 751.9 714.8)"/><circle cx="762.2" cy="711.4" r="2.7" fill="#e8772a"/><rect x="760.7" y="729.7" width="5.8" height="4.6" fill="#f3e06a" transform="rotate(15 763.6 732.6)"/><circle cx="725.9" cy="694.1" r="2.4" fill="#86b13a"/><circle cx="733.2" cy="691.8" r="3.2" fill="#e2642a"/><circle cx="726.8" cy="707.7" r="3.2" fill="#f3e06a"/><rect x="744.7" y="671.1" width="6.9" height="5.5" fill="#3f7a22" transform="rotate(9 748.2 674.5)"/><circle cx="722.4" cy="692.1" r="3.5" fill="#e9c12f"/><rect x="721.2" y="732.0" width="4.7" height="3.7" fill="#86b13a" transform="rotate(3 723.5 734.3)"/><circle cx="779.9" cy="706.3" r="2.7" fill="#f3e06a"/><rect x="728.8" y="709.6" width="4.9" height="3.9" fill="#e9c12f" transform="rotate(2 731.2 712.0)"/><rect x="709.0" y="693.2" width="5.0" height="4.0" fill="#86b13a" transform="rotate(-28 711.5 695.7)"/><rect x="715.8" y="696.6" width="5.0" height="4.0" fill="#3f7a22" transform="rotate(20 718.3 699.2)"/><rect x="708.6" y="692.4" width="4.9" height="3.9" fill="#5f9a2d" transform="rotate(1 711.0 694.8)"/><rect x="709.4" y="731.2" width="6.1" height="4.9" fill="#86b13a" transform="rotate(-6 712.4 734.2)"/><rect x="713.2" y="686.7" width="5.4" height="4.4" fill="#86b13a" transform="rotate(-7 715.9 689.5)"/><rect x="706.6" y="707.8" width="4.0" height="3.2" fill="#e9c12f" transform="rotate(-39 708.6 709.8)"/><circle cx="704.2" cy="720.6" r="2.8" fill="#f0d24a"/><circle cx="711.5" cy="669.1" r="1.9" fill="#e8772a"/><circle cx="746.0" cy="687.7" r="3.0" fill="#86b13a"/><circle cx="714.9" cy="682.7" r="2.9" fill="#e8772a"/><rect x="759.7" y="673.9" width="4.0" height="3.2" fill="#e8772a" transform="rotate(-1 761.7 675.9)"/><rect x="736.3" y="696.6" width="6.5" height="5.2" fill="#e9c12f" transform="rotate(6 739.5 699.9)"/><circle cx="714.9" cy="685.6" r="2.3" fill="#e9c12f"/><circle cx="711.6" cy="734.9" r="2.8" fill="#3f7a22"/><circle cx="751.4" cy="669.4" r="2.2" fill="#f3e06a"/><circle cx="776.9" cy="700.5" r="2.9" fill="#9ab83a"/><rect x="714.0" y="709.3" width="4.2" height="3.4" fill="#e9c12f" transform="rotate(25 716.1 711.4)"/><rect x="723.6" y="709.1" width="7.1" height="5.6" fill="#e2642a" transform="rotate(-35 727.1 712.6)"/><circle cx="755.5" cy="717.9" r="2.9" fill="#f3e06a"/><circle cx="770.5" cy="703.8" r="3.2" fill="#9ab83a"/><circle cx="716.9" cy="696.0" r="1.8" fill="#f0d24a"/><circle cx="731.6" cy="692.8" r="3.4" fill="#3f7a22"/><circle cx="709.0" cy="677.1" r="3.3" fill="#3f7a22"/><circle cx="733.4" cy="702.6" r="2.4" fill="#f3e06a"/><circle cx="754.5" cy="693.3" r="2.1" fill="#e8772a"/><circle cx="724.5" cy="729.8" r="2.0" fill="#e2642a"/><rect x="762.0" y="683.3" width="4.9" height="3.9" fill="#9ab83a" transform="rotate(-10 764.4 685.8)"/><circle cx="776.8" cy="683.4" r="3.5" fill="#86b13a"/><circle cx="769.2" cy="718.0" r="3.5" fill="#f0d24a"/><rect x="734.7" y="738.5" width="5.5" height="4.4" fill="#f3e06a" transform="rotate(-23 737.5 741.3)"/><rect x="767.6" y="674.4" width="5.4" height="4.4" fill="#86b13a" transform="rotate(19 770.3 677.1)"/><circle cx="762.1" cy="670.1" r="3.1" fill="#e8772a"/><circle cx="733.6" cy="674.4" r="2.1" fill="#9ab83a"/><rect x="751.6" y="673.3" width="5.6" height="4.5" fill="#3f7a22" transform="rotate(21 754.4 676.1)"/><circle cx="718.7" cy="721.2" r="2.0" fill="#f0d24a"/><rect x="755.9" y="686.4" width="5.1" height="4.0" fill="#e2642a" transform="rotate(31 758.5 688.9)"/><circle cx="769.5" cy="677.8" r="2.3" fill="#e9c12f"/><rect x="761.3" y="715.7" width="6.8" height="5.5" fill="#e9c12f" transform="rotate(16 764.8 719.1)"/><circle cx="722.9" cy="730.7" r="2.4" fill="#5f9a2d"/><circle cx="712.8" cy="735.5" r="3.1" fill="#e9c12f"/><circle cx="750.2" cy="699.9" r="3.2" fill="#e8772a"/><circle cx="707.0" cy="691.0" r="2.9" fill="#e8772a"/><rect x="718.6" y="702.1" width="5.5" height="4.4" fill="#f3e06a" transform="rotate(6 721.3 704.8)"/><rect x="771.9" y="673.1" width="6.3" height="5.1" fill="#f0d24a" transform="rotate(30 775.1 676.3)"/><circle cx="748.5" cy="719.5" r="3.6" fill="#5f9a2d"/><circle cx="728.2" cy="725.5" r="2.4" fill="#5f9a2d"/><circle cx="760.5" cy="741.9" r="2.9" fill="#9ab83a"/><rect x="708.3" y="735.5" width="5.1" height="4.1" fill="#3f7a22" transform="rotate(19 710.8 738.0)"/><rect x="764.5" y="711.9" width="5.2" height="4.2" fill="#e9c12f" transform="rotate(-24 767.1 714.5)"/><rect x="752.0" y="727.4" width="6.4" height="5.1" fill="#e2642a" transform="rotate(-37 755.2 730.6)"/><circle cx="757.4" cy="727.6" r="2.3" fill="#86b13a"/><circle cx="763.3" cy="685.5" r="2.3" fill="#e9c12f"/><circle cx="730.4" cy="674.8" r="2.9" fill="#e8772a"/><circle cx="757.7" cy="717.6" r="2.2" fill="#9ab83a"/><circle cx="756.6" cy="677.8" r="3.0" fill="#f0d24a"/><circle cx="757.8" cy="711.5" r="2.2" fill="#5f9a2d"/><rect x="758.8" y="677.5" width="6.0" height="4.8" fill="#e2642a" transform="rotate(-8 761.8 680.5)"/><circle cx="719.7" cy="719.1" r="1.8" fill="#e2642a"/><circle cx="708.6" cy="688.8" r="2.2" fill="#f0d24a"/><circle cx="712.6" cy="692.0" r="2.6" fill="#3f7a22"/><circle cx="746.4" cy="671.4" r="2.6" fill="#e2642a"/><rect x="755.7" y="737.7" width="5.6" height="4.5" fill="#5f9a2d" transform="rotate(37 758.5 740.5)"/><rect x="738.7" y="723.6" width="4.8" height="3.8" fill="#3f7a22" transform="rotate(12 741.1 726.0)"/><rect x="748.7" y="734.2" width="5.9" height="4.8" fill="#f0d24a" transform="rotate(-34 751.7 737.2)"/><circle cx="760.8" cy="669.9" r="2.5" fill="#e8772a"/><circle cx="718.1" cy="715.2" r="3.3" fill="#e8772a"/><circle cx="758.6" cy="691.0" r="2.9" fill="#f3e06a"/><rect x="764.3" y="689.2" width="4.9" height="3.9" fill="#86b13a" transform="rotate(27 766.7 691.7)"/><rect x="721.3" y="670.3" width="4.0" height="3.2" fill="#f3e06a" transform="rotate(36 723.3 672.3)"/><rect x="739.5" y="702.9" width="4.2" height="3.3" fill="#f0d24a" transform="rotate(10 741.6 705.0)"/><circle cx="714.8" cy="684.8" r="2.0" fill="#f3e06a"/><circle cx="707.0" cy="700.5" r="2.1" fill="#3f7a22"/><circle cx="767.9" cy="731.3" r="3.2" fill="#f3e06a"/><circle cx="709.5" cy="672.1" r="3.1" fill="#3f7a22"/><circle cx="704.7" cy="738.7" r="2.1" fill="#e8772a"/><circle cx="704.3" cy="727.5" r="3.0" fill="#9ab83a"/><rect x="742.7" y="703.7" width="5.1" height="4.1" fill="#86b13a" transform="rotate(29 745.2 706.2)"/><rect x="775.1" y="736.3" width="5.8" height="4.7" fill="#e9c12f" transform="rotate(-13 778.1 739.2)"/><circle cx="754.0" cy="709.8" r="2.6" fill="#3f7a22"/><rect x="750.8" y="687.7" width="4.8" height="3.9" fill="#e9c12f" transform="rotate(-22 753.2 690.1)"/><circle cx="760.2" cy="719.2" r="2.1" fill="#3f7a22"/><circle cx="775.7" cy="694.6" r="2.2" fill="#e2642a"/><rect x="709.3" y="678.0" width="6.8" height="5.4" fill="#86b13a" transform="rotate(-22 712.7 681.4)"/><rect x="765.5" y="713.9" width="4.3" height="3.4" fill="#f0d24a" transform="rotate(-22 767.6 716.1)"/><rect x="735.8" y="705.0" width="6.1" height="4.9" fill="#86b13a" transform="rotate(5 738.8 708.1)"/><rect x="765.5" y="715.0" width="6.5" height="5.2" fill="#e8772a" transform="rotate(4 768.7 718.3)"/><circle cx="758.3" cy="724.0" r="2.0" fill="#86b13a"/><circle cx="767.1" cy="697.0" r="2.1" fill="#9ab83a"/><circle cx="762.9" cy="678.1" r="3.2" fill="#e9c12f"/><circle cx="707.6" cy="671.1" r="3.1" fill="#9ab83a"/><rect x="709.7" y="674.6" width="6.9" height="5.5" fill="#5f9a2d" transform="rotate(30 713.2 678.0)"/><circle cx="746.8" cy="735.9" r="3.4" fill="#e8772a"/><rect x="764.8" y="724.4" width="6.2" height="5.0" fill="#e9c12f" transform="rotate(-30 768.0 727.5)"/><circle cx="732.3" cy="722.6" r="3.5" fill="#e2642a"/><circle cx="749.9" cy="675.4" r="2.8" fill="#5f9a2d"/><circle cx="773.2" cy="685.9" r="2.4" fill="#e2642a"/><circle cx="779.1" cy="700.6" r="3.2" fill="#e2642a"/><rect x="762.1" y="678.9" width="5.6" height="4.5" fill="#f0d24a" transform="rotate(14 764.9 681.7)"/><rect x="765.3" y="709.3" width="4.5" height="3.6" fill="#f0d24a" transform="rotate(-39 767.6 711.5)"/><rect x="727.3" y="676.5" width="5.4" height="4.3" fill="#e9c12f" transform="rotate(-37 730.0 679.2)"/><rect x="714.8" y="725.5" width="6.0" height="4.8" fill="#f3e06a" transform="rotate(37 717.9 728.6)"/><circle cx="756.7" cy="701.2" r="2.2" fill="#86b13a"/><circle cx="729.0" cy="684.0" r="3.4" fill="#e9c12f"/><circle cx="766.3" cy="721.8" r="2.4" fill="#e2642a"/><circle cx="730.9" cy="668.4" r="2.8" fill="#3f7a22"/><rect x="720.0" y="729.9" width="5.8" height="4.6" fill="#e8772a" transform="rotate(-29 722.9 732.8)"/><circle cx="733.2" cy="672.7" r="3.6" fill="#3f7a22"/><rect x="740.6" y="735.2" width="7.2" height="5.7" fill="#e9c12f" transform="rotate(32 744.1 738.8)"/><circle cx="711.2" cy="682.7" r="2.6" fill="#5f9a2d"/><rect x="722.0" y="723.5" width="6.7" height="5.4" fill="#e8772a" transform="rotate(-16 725.4 726.9)"/><circle cx="762.0" cy="722.7" r="2.7" fill="#9ab83a"/><rect x="743.9" y="696.1" width="3.8" height="3.1" fill="#3f7a22" transform="rotate(31 745.9 698.0)"/><rect x="760.1" y="701.9" width="6.8" height="5.5" fill="#9ab83a" transform="rotate(-28 763.5 705.3)"/><circle cx="719.6" cy="733.8" r="3.0" fill="#f3e06a"/><circle cx="747.2" cy="690.4" r="2.1" fill="#5f9a2d"/><circle cx="758.7" cy="686.7" r="2.8" fill="#3f7a22"/><circle cx="718.5" cy="736.4" r="2.9" fill="#f0d24a"/><rect x="775.9" y="691.2" width="6.4" height="5.1" fill="#f3e06a" transform="rotate(34 779.0 694.4)"/><circle cx="767.7" cy="691.6" r="2.1" fill="#f0d24a"/><circle cx="761.6" cy="714.4" r="2.2" fill="#e9c12f"/><rect x="731.5" y="679.9" width="5.8" height="4.6" fill="#86b13a" transform="rotate(-24 734.4 682.8)"/><circle cx="759.8" cy="739.3" r="2.9" fill="#5f9a2d"/><circle cx="766.0" cy="710.6" r="3.1" fill="#e9c12f"/><circle cx="744.8" cy="732.8" r="3.0" fill="#e9c12f"/><rect x="725.9" y="720.5" width="5.9" height="4.7" fill="#f3e06a" transform="rotate(24 728.8 723.5)"/><rect x="714.0" y="728.7" width="6.5" height="5.2" fill="#5f9a2d" transform="rotate(-13 717.3 731.9)"/><rect x="739.3" y="710.0" width="4.5" height="3.6" fill="#e2642a" transform="rotate(-38 741.6 712.2)"/><rect x="725.7" y="714.0" width="4.7" height="3.8" fill="#f3e06a" transform="rotate(18 728.1 716.4)"/><circle cx="729.0" cy="674.9" r="2.1" fill="#e8772a"/><circle cx="767.9" cy="694.5" r="2.5" fill="#3f7a22"/><circle cx="748.7" cy="709.1" r="3.0" fill="#3f7a22"/><rect x="748.4" y="725.5" width="5.3" height="4.3" fill="#e9c12f" transform="rotate(-15 751.0 728.2)"/><circle cx="762.7" cy="740.3" r="2.6" fill="#f0d24a"/><circle cx="744.3" cy="688.3" r="2.3" fill="#86b13a"/><circle cx="753.8" cy="725.3" r="2.5" fill="#9ab83a"/><circle cx="778.4" cy="737.3" r="2.9" fill="#5f9a2d"/><rect x="740.0" y="707.0" width="4.3" height="3.4" fill="#3f7a22" transform="rotate(32 742.1 709.1)"/><circle cx="770.2" cy="731.3" r="3.2" fill="#86b13a"/><circle cx="763.1" cy="686.0" r="3.6" fill="#e2642a"/><circle cx="773.3" cy="734.7" r="2.5" fill="#9ab83a"/><rect x="769.5" y="672.9" width="6.2" height="5.0" fill="#5f9a2d" transform="rotate(33 772.7 676.0)"/><circle cx="755.2" cy="694.0" r="2.2" fill="#f3e06a"/><circle cx="773.9" cy="737.9" r="2.9" fill="#9ab83a"/><circle cx="705.6" cy="720.5" r="2.2" fill="#3f7a22"/><circle cx="761.7" cy="715.6" r="2.3" fill="#e2642a"/><rect x="743.9" y="676.2" width="6.7" height="5.4" fill="#f0d24a" transform="rotate(-29 747.3 679.6)"/><circle cx="726.8" cy="674.5" r="1.8" fill="#9ab83a"/><rect x="753.3" y="709.6" width="5.2" height="4.2" fill="#e9c12f" transform="rotate(-23 755.9 712.2)"/><circle cx="771.2" cy="694.7" r="3.2" fill="#e2642a"/><rect x="767.3" y="739.3" width="4.7" height="3.7" fill="#e9c12f" transform="rotate(-28 769.7 741.6)"/><rect x="771.0" y="675.5" width="4.7" height="3.8" fill="#86b13a" transform="rotate(-32 773.4 677.9)"/><rect x="714.9" y="716.6" width="3.9" height="3.1" fill="#3f7a22" transform="rotate(13 716.8 718.5)"/><circle cx="734.1" cy="692.8" r="3.4" fill="#9ab83a"/><circle cx="751.7" cy="669.1" r="2.0" fill="#9ab83a"/><circle cx="757.1" cy="721.9" r="1.9" fill="#3f7a22"/><circle cx="712.4" cy="738.8" r="3.5" fill="#86b13a"/><circle cx="717.6" cy="718.7" r="2.1" fill="#86b13a"/><circle cx="712.5" cy="694.2" r="2.7" fill="#5f9a2d"/><circle cx="720.4" cy="739.6" r="3.4" fill="#5f9a2d"/><circle cx="717.5" cy="687.6" r="1.9" fill="#e9c12f"/><circle cx="707.6" cy="726.4" r="3.5" fill="#f0d24a"/><circle cx="756.3" cy="716.3" r="2.8" fill="#86b13a"/><circle cx="735.2" cy="741.5" r="3.1" fill="#f0d24a"/><rect x="724.6" y="695.5" width="7.1" height="5.7" fill="#f3e06a" transform="rotate(31 728.2 699.0)"/><rect x="762.1" y="731.5" width="5.9" height="4.7" fill="#9ab83a" transform="rotate(34 765.1 734.5)"/><rect x="720.9" y="710.7" width="5.0" height="4.0" fill="#9ab83a" transform="rotate(13 723.4 713.2)"/><circle cx="710.6" cy="713.9" r="1.9" fill="#e9c12f"/><circle cx="746.4" cy="718.7" r="2.6" fill="#3f7a22"/><circle cx="747.9" cy="703.0" r="3.0" fill="#e2642a"/><circle cx="749.0" cy="741.6" r="2.2" fill="#f3e06a"/><circle cx="708.9" cy="740.2" r="2.3" fill="#3f7a22"/><circle cx="764.6" cy="717.2" r="3.5" fill="#f0d24a"/><rect x="704" y="660" width="76" height="82" fill="url(#glass)"/></g><ellipse cx="741" cy="656.500" rx="40" ry="21" fill="url(#lid)"/><ellipse cx="741" cy="651.500" rx="37.500" ry="16" fill="#e7e7e4"/><ellipse cx="741" cy="652.500" rx="31" ry="11.500" fill="#d9d9d5"/></g></g><g font-family="Liberation Serif, serif"><text transform="translate(1043.8 457.2) scale(0.982 1)" text-anchor="middle" font-size="24.8" fill="#1f1206" stroke="#1f1206" stroke-width="0.25">sodium</text><text transform="translate(1041.0 488.0) scale(1.023 1)" text-anchor="middle" font-size="24.8" fill="#1f1206" stroke="#1f1206" stroke-width="0.25">citrate</text><text transform="translate(1228.8 442.0) scale(0.991 1)" text-anchor="middle" font-size="24.5" fill="#1f1206" stroke="#1f1206" stroke-width="0.25">sodium</text><text transform="translate(1223.0 473.7) scale(0.913 1)" text-anchor="middle" font-size="24.5" fill="#1f1206" stroke="#1f1206" stroke-width="0.25">nitrite,</text><text transform="translate(1223.0 503.7) scale(0.943 1)" text-anchor="middle" font-size="24.5" fill="#1f1206" stroke="#1f1206" stroke-width="0.25">nitrate</text><text transform="translate(1415.6 458.7) scale(0.999 1)" text-anchor="middle" font-size="19.3" fill="#1f1206" stroke="#1f1206" stroke-width="0.25">Sodium</text><text transform="translate(1415.5 483.8) scale(1.000 1)" text-anchor="middle" font-size="17.5" fill="#1f1206" stroke="#1f1206" stroke-width="0.25">metabisulphite</text><text transform="translate(1133.2 631.0) scale(0.979 1)" text-anchor="middle" font-size="24.8" fill="#1f1206" stroke="#1f1206" stroke-width="0.25">sodium</text><text transform="translate(1130.2 661.2) scale(1.018 1)" text-anchor="middle" font-size="24.8" fill="#1f1206" stroke="#1f1206" stroke-width="0.25">propionate</text><text transform="translate(1316.0 615.3) scale(0.988 1)" text-anchor="middle" font-size="21.7" fill="#6b4216" stroke="#6b4216" stroke-width="0.25">Preservative</text><text transform="translate(1315.8 646.0) scale(1.023 1)" text-anchor="middle" font-size="21.7" fill="#6b4216" stroke="#6b4216" stroke-width="0.25">contains</text><text transform="translate(1315.8 675.6) scale(0.995 1)" text-anchor="middle" font-size="21.7" fill="#6b4216" stroke="#6b4216" stroke-width="0.25">sodium</text><text transform="translate(1511.3 629.4) scale(0.983 1)" text-anchor="middle" font-size="24" fill="#1f1206" stroke="#1f1206" stroke-width="0.25">Sodium</text><text transform="translate(1511.3 662.8) scale(1.027 1)" text-anchor="middle" font-size="24" fill="#1f1206" stroke="#1f1206" stroke-width="0.25">benzoate</text><text transform="translate(1043.4 806.0) scale(0.982 1)" text-anchor="middle" font-size="22.7" fill="#1f1206" stroke="#1f1206" stroke-width="0.25">disodium</text><text transform="translate(1040.9 833.0) scale(1.020 1)" text-anchor="middle" font-size="22.7" fill="#1f1206" stroke="#1f1206" stroke-width="0.25">di-acetate</text><text transform="translate(1227.5 802.5) scale(0.995 1)" text-anchor="middle" font-size="29.7" fill="#1f1206" stroke="#1f1206" stroke-width="0.25">sodium</text><text transform="translate(1224.0 842.0) scale(1.010 1)" text-anchor="middle" font-size="29.7" fill="#1f1206" stroke="#1f1206" stroke-width="0.25">sulphite</text><text transform="translate(1411.5 802.5) scale(0.976 1)" text-anchor="middle" font-size="29.3" fill="#1f1206" stroke="#1f1206" stroke-width="0.25">Sodium</text><text transform="translate(1411.5 842.0) scale(1.028 1)" text-anchor="middle" font-size="29.3" fill="#1f1206" stroke="#1f1206" stroke-width="0.25">sorbate</text></g><g font-weight="bold" fill="#f3efe6"><text class="sn" transform="translate(681.5 589) scale(0.765 1)" text-anchor="middle" font-size="19.5">Preservatives</text><text class="sn" transform="translate(681 611.8) scale(0.742 1)" text-anchor="middle" font-size="19.5">in Our Food</text></g></symbol></svg>
<div class="a" style="left:527px;top:272px;width:1171px;height:17px;background:#fff;"></div>
<svg class="a" style="left:527px;top:272px;" width="1171" height="17" viewBox="0 0 1171 17"><rect x="13.4" y="4.800" width="1" height="6" fill="#3c3c3c"/><rect x="4.7" y="7.500" width="1.200" height="1.200" fill="#777"/><rect x="22.0" y="7.500" width="1.200" height="1.200" fill="#777"/><rect x="48.0" y="4.800" width="1" height="6" fill="#3c3c3c"/><rect x="39.3" y="7.500" width="1.200" height="1.200" fill="#777"/><rect x="56.6" y="7.500" width="1.200" height="1.200" fill="#777"/><rect x="82.6" y="4.800" width="1" height="6" fill="#3c3c3c"/><rect x="73.8" y="7.500" width="1.200" height="1.200" fill="#777"/><rect x="91.1" y="7.500" width="1.200" height="1.200" fill="#777"/><rect x="117.2" y="4.800" width="1" height="6" fill="#3c3c3c"/><rect x="108.4" y="7.500" width="1.200" height="1.200" fill="#777"/><rect x="125.7" y="7.500" width="1.200" height="1.200" fill="#777"/><rect x="151.8" y="4.800" width="1" height="6" fill="#3c3c3c"/><rect x="143.0" y="7.500" width="1.200" height="1.200" fill="#777"/><rect x="160.3" y="7.500" width="1.200" height="1.200" fill="#777"/><rect x="186.3" y="4.800" width="1" height="6" fill="#3c3c3c"/><rect x="177.6" y="7.500" width="1.200" height="1.200" fill="#777"/><rect x="194.9" y="7.500" width="1.200" height="1.200" fill="#777"/><rect x="220.9" y="4.800" width="1" height="6" fill="#3c3c3c"/><rect x="212.2" y="7.500" width="1.200" height="1.200" fill="#777"/><rect x="229.5" y="7.500" width="1.200" height="1.200" fill="#777"/><rect x="255.5" y="4.800" width="1" height="6" fill="#3c3c3c"/><rect x="246.7" y="7.500" width="1.200" height="1.200" fill="#777"/><rect x="264.0" y="7.500" width="1.200" height="1.200" fill="#777"/><rect x="290.1" y="4.800" width="1" height="6" fill="#3c3c3c"/><rect x="281.3" y="7.500" width="1.200" height="1.200" fill="#777"/><rect x="298.6" y="7.500" width="1.200" height="1.200" fill="#777"/><rect x="324.7" y="4.800" width="1" height="6" fill="#3c3c3c"/><rect x="315.9" y="7.500" width="1.200" height="1.200" fill="#777"/><rect x="333.2" y="7.500" width="1.200" height="1.200" fill="#777"/><rect x="359.2" y="4.800" width="1" height="6" fill="#3c3c3c"/><rect x="350.5" y="7.500" width="1.200" height="1.200" fill="#777"/><rect x="367.8" y="7.500" width="1.200" height="1.200" fill="#777"/><rect x="393.8" y="4.800" width="1" height="6" fill="#3c3c3c"/><rect x="385.1" y="7.500" width="1.200" height="1.200" fill="#777"/><rect x="402.4" y="7.500" width="1.200" height="1.200" fill="#777"/><rect x="428.4" y="4.800" width="1" height="6" fill="#3c3c3c"/><rect x="419.6" y="7.500" width="1.200" height="1.200" fill="#777"/><rect x="436.9" y="7.500" width="1.200" height="1.200" fill="#777"/><rect x="463.0" y="4.800" width="1" height="6" fill="#3c3c3c"/><rect x="454.2" y="7.500" width="1.200" height="1.200" fill="#777"/><rect x="471.5" y="7.500" width="1.200" height="1.200" fill="#777"/><rect x="497.6" y="4.800" width="1" height="6" fill="#3c3c3c"/><rect x="488.8" y="7.500" width="1.200" height="1.200" fill="#777"/><rect x="506.1" y="7.500" width="1.200" height="1.200" fill="#777"/><rect x="532.1" y="4.800" width="1" height="6" fill="#3c3c3c"/><rect x="523.4" y="7.500" width="1.200" height="1.200" fill="#777"/><rect x="540.7" y="7.500" width="1.200" height="1.200" fill="#777"/><rect x="566.7" y="4.800" width="1" height="6" fill="#3c3c3c"/><rect x="558.0" y="7.500" width="1.200" height="1.200" fill="#777"/><rect x="575.3" y="7.500" width="1.200" height="1.200" fill="#777"/><rect x="601.3" y="4.800" width="1" height="6" fill="#3c3c3c"/><rect x="592.5" y="7.500" width="1.200" height="1.200" fill="#777"/><rect x="609.8" y="7.500" width="1.200" height="1.200" fill="#777"/><rect x="635.9" y="4.800" width="1" height="6" fill="#3c3c3c"/><rect x="627.1" y="7.500" width="1.200" height="1.200" fill="#777"/><rect x="644.4" y="7.500" width="1.200" height="1.200" fill="#777"/><rect x="670.5" y="4.800" width="1" height="6" fill="#3c3c3c"/><rect x="661.7" y="7.500" width="1.200" height="1.200" fill="#777"/><rect x="679.0" y="7.500" width="1.200" height="1.200" fill="#777"/><rect x="705.0" y="4.800" width="1" height="6" fill="#3c3c3c"/><rect x="696.3" y="7.500" width="1.200" height="1.200" fill="#777"/><rect x="713.6" y="7.500" width="1.200" height="1.200" fill="#777"/><rect x="739.6" y="4.800" width="1" height="6" fill="#3c3c3c"/><rect x="730.9" y="7.500" width="1.200" height="1.200" fill="#777"/><rect x="748.2" y="7.500" width="1.200" height="1.200" fill="#777"/><rect x="774.2" y="4.800" width="1" height="6" fill="#3c3c3c"/><rect x="765.4" y="7.500" width="1.200" height="1.200" fill="#777"/><rect x="782.7" y="7.500" width="1.200" height="1.200" fill="#777"/><rect x="808.8" y="4.800" width="1" height="6" fill="#3c3c3c"/><rect x="800.0" y="7.500" width="1.200" height="1.200" fill="#777"/><rect x="817.3" y="7.500" width="1.200" height="1.200" fill="#777"/><rect x="843.3" y="4.800" width="1" height="6" fill="#3c3c3c"/><rect x="834.6" y="7.500" width="1.200" height="1.200" fill="#777"/><rect x="851.9" y="7.500" width="1.200" height="1.200" fill="#777"/><rect x="877.9" y="4.800" width="1" height="6" fill="#3c3c3c"/><rect x="869.2" y="7.500" width="1.200" height="1.200" fill="#777"/><rect x="886.5" y="7.500" width="1.200" height="1.200" fill="#777"/><rect x="912.5" y="4.800" width="1" height="6" fill="#3c3c3c"/><rect x="903.8" y="7.500" width="1.200" height="1.200" fill="#777"/><rect x="921.1" y="7.500" width="1.200" height="1.200" fill="#777"/><rect x="947.1" y="4.800" width="1" height="6" fill="#3c3c3c"/><rect x="938.3" y="7.500" width="1.200" height="1.200" fill="#777"/><rect x="955.6" y="7.500" width="1.200" height="1.200" fill="#777"/><rect x="981.7" y="4.800" width="1" height="6" fill="#3c3c3c"/><rect x="972.9" y="7.500" width="1.200" height="1.200" fill="#777"/><rect x="990.2" y="7.500" width="1.200" height="1.200" fill="#777"/><rect x="1016.2" y="4.800" width="1" height="6" fill="#3c3c3c"/><rect x="1007.5" y="7.500" width="1.200" height="1.200" fill="#777"/><rect x="1024.8" y="7.500" width="1.200" height="1.200" fill="#777"/><rect x="1050.8" y="4.800" width="1" height="6" fill="#3c3c3c"/><rect x="1042.1" y="7.500" width="1.200" height="1.200" fill="#777"/><rect x="1059.4" y="7.500" width="1.200" height="1.200" fill="#777"/><rect x="1085.4" y="4.800" width="1" height="6" fill="#3c3c3c"/><rect x="1076.7" y="7.500" width="1.200" height="1.200" fill="#777"/><rect x="1094.0" y="7.500" width="1.200" height="1.200" fill="#777"/><rect x="1120.0" y="4.800" width="1" height="6" fill="#3c3c3c"/><rect x="1111.2" y="7.500" width="1.200" height="1.200" fill="#777"/><rect x="1128.5" y="7.500" width="1.200" height="1.200" fill="#777"/><rect x="1154.6" y="4.800" width="1" height="6" fill="#3c3c3c"/><rect x="1145.8" y="7.500" width="1.200" height="1.200" fill="#777"/><rect x="1163.1" y="7.500" width="1.200" height="1.200" fill="#777"/></svg>
<div class="t" style="left:551.69px;top:269.27px;font-size:12.5px;color:#555;letter-spacing:-0.834px;">16</div>
<div class="t" style="left:586.27px;top:269.27px;font-size:12.5px;color:#555;letter-spacing:-0.834px;">15</div>
<div class="t" style="left:620.85px;top:269.27px;font-size:12.5px;color:#555;letter-spacing:-0.834px;">14</div>
<div class="t" style="left:655.43px;top:269.27px;font-size:12.5px;color:#555;letter-spacing:-0.834px;">13</div>
<div class="t" style="left:690.01px;top:269.27px;font-size:12.5px;color:#555;letter-spacing:-0.834px;">12</div>
<div class="t" style="left:725.02px;top:269.27px;font-size:12.5px;color:#555;letter-spacing:-0.779px;">11</div>
<div class="t" style="left:759.17px;top:269.27px;font-size:12.5px;color:#555;letter-spacing:-0.834px;">10</div>
<div class="t" style="left:796.80px;top:269.27px;font-size:12.5px;color:#555;">9</div>
<div class="t" style="left:831.38px;top:269.27px;font-size:12.5px;color:#555;">8</div>
<div class="t" style="left:865.96px;top:269.27px;font-size:12.5px;color:#555;">7</div>
<div class="t" style="left:900.54px;top:269.27px;font-size:12.5px;color:#555;">6</div>
<div class="t" style="left:935.12px;top:269.27px;font-size:12.5px;color:#555;">5</div>
<div class="t" style="left:969.70px;top:269.27px;font-size:12.5px;color:#555;">4</div>
<div class="t" style="left:1004.28px;top:269.27px;font-size:12.5px;color:#555;">3</div>
<div class="t" style="left:1038.86px;top:269.27px;font-size:12.5px;color:#555;">2</div>
<div class="t" style="left:1073.44px;top:269.27px;font-size:12.5px;color:#555;">1</div>
<div class="t" style="left:1108.02px;top:269.27px;font-size:12.5px;color:#555;">0</div>
<div class="t" style="left:1142.60px;top:269.27px;font-size:12.5px;color:#555;">1</div>
<div class="t" style="left:1177.18px;top:269.27px;font-size:12.5px;color:#555;">2</div>
<div class="t" style="left:1211.76px;top:269.27px;font-size:12.5px;color:#555;">3</div>
<div class="t" style="left:1246.34px;top:269.27px;font-size:12.5px;color:#555;">4</div>
<div class="t" style="left:1280.92px;top:269.27px;font-size:12.5px;color:#555;">5</div>
<div class="t" style="left:1315.50px;top:269.27px;font-size:12.5px;color:#555;">6</div>
<div class="t" style="left:1350.08px;top:269.27px;font-size:12.5px;color:#555;">7</div>
<div class="t" style="left:1384.66px;top:269.27px;font-size:12.5px;color:#555;">8</div>
<div class="t" style="left:1419.24px;top:269.27px;font-size:12.5px;color:#555;">9</div>
<div class="t" style="left:1450.77px;top:269.27px;font-size:12.5px;color:#555;letter-spacing:-0.834px;">10</div>
<div class="t" style="left:1485.78px;top:269.27px;font-size:12.5px;color:#555;letter-spacing:-0.779px;">11</div>
<div class="t" style="left:1519.93px;top:269.27px;font-size:12.5px;color:#555;letter-spacing:-0.834px;">12</div>
<div class="t" style="left:1554.51px;top:269.27px;font-size:12.5px;color:#555;letter-spacing:-0.834px;">13</div>
<div class="t" style="left:1589.09px;top:269.27px;font-size:12.5px;color:#555;letter-spacing:-0.834px;">14</div>
<div class="t" style="left:1623.67px;top:269.27px;font-size:12.5px;color:#555;letter-spacing:-0.834px;">15</div>
<div class="t" style="left:1658.25px;top:269.27px;font-size:12.5px;color:#555;letter-spacing:-0.834px;">16</div>
<div class="a" style="left:298px;top:311px;width:17.3px;height:659px;background:#fff;"></div>
<svg class="a" style="left:298px;top:311px;" width="17.3" height="659" viewBox="0 0 17.3 659"><rect x="5.100" y="0.6" width="6" height="1" fill="#3c3c3c"/><rect x="7.500" y="9.1" width="1.200" height="1.200" fill="#777"/><rect x="5.100" y="35.2" width="6" height="1" fill="#3c3c3c"/><rect x="7.500" y="26.4" width="1.200" height="1.200" fill="#777"/><rect x="7.500" y="43.7" width="1.200" height="1.200" fill="#777"/><rect x="5.100" y="69.8" width="6" height="1" fill="#3c3c3c"/><rect x="7.500" y="61.0" width="1.200" height="1.200" fill="#777"/><rect x="7.500" y="78.3" width="1.200" height="1.200" fill="#777"/><rect x="5.100" y="104.3" width="6" height="1" fill="#3c3c3c"/><rect x="7.500" y="95.6" width="1.200" height="1.200" fill="#777"/><rect x="7.500" y="112.9" width="1.200" height="1.200" fill="#777"/><rect x="5.100" y="138.9" width="6" height="1" fill="#3c3c3c"/><rect x="7.500" y="130.2" width="1.200" height="1.200" fill="#777"/><rect x="7.500" y="147.5" width="1.200" height="1.200" fill="#777"/><rect x="5.100" y="173.5" width="6" height="1" fill="#3c3c3c"/><rect x="7.500" y="164.7" width="1.200" height="1.200" fill="#777"/><rect x="7.500" y="182.0" width="1.200" height="1.200" fill="#777"/><rect x="5.100" y="208.1" width="6" height="1" fill="#3c3c3c"/><rect x="7.500" y="199.3" width="1.200" height="1.200" fill="#777"/><rect x="7.500" y="216.6" width="1.200" height="1.200" fill="#777"/><rect x="5.100" y="242.7" width="6" height="1" fill="#3c3c3c"/><rect x="7.500" y="233.9" width="1.200" height="1.200" fill="#777"/><rect x="7.500" y="251.2" width="1.200" height="1.200" fill="#777"/><rect x="5.100" y="277.2" width="6" height="1" fill="#3c3c3c"/><rect x="7.500" y="268.5" width="1.200" height="1.200" fill="#777"/><rect x="7.500" y="285.8" width="1.200" height="1.200" fill="#777"/><rect x="5.100" y="311.8" width="6" height="1" fill="#3c3c3c"/><rect x="7.500" y="303.1" width="1.200" height="1.200" fill="#777"/><rect x="7.500" y="320.4" width="1.200" height="1.200" fill="#777"/><rect x="5.100" y="346.4" width="6" height="1" fill="#3c3c3c"/><rect x="7.500" y="337.6" width="1.200" height="1.200" fill="#777"/><rect x="7.500" y="354.9" width="1.200" height="1.200" fill="#777"/><rect x="5.100" y="381.0" width="6" height="1" fill="#3c3c3c"/><rect x="7.500" y="372.2" width="1.200" height="1.200" fill="#777"/><rect x="7.500" y="389.5" width="1.200" height="1.200" fill="#777"/><rect x="5.100" y="415.6" width="6" height="1" fill="#3c3c3c"/><rect x="7.500" y="406.8" width="1.200" height="1.200" fill="#777"/><rect x="7.500" y="424.1" width="1.200" height="1.200" fill="#777"/><rect x="5.100" y="450.1" width="6" height="1" fill="#3c3c3c"/><rect x="7.500" y="441.4" width="1.200" height="1.200" fill="#777"/><rect x="7.500" y="458.7" width="1.200" height="1.200" fill="#777"/><rect x="5.100" y="484.7" width="6" height="1" fill="#3c3c3c"/><rect x="7.500" y="476.0" width="1.200" height="1.200" fill="#777"/><rect x="7.500" y="493.3" width="1.200" height="1.200" fill="#777"/><rect x="5.100" y="519.3" width="6" height="1" fill="#3c3c3c"/><rect x="7.500" y="510.5" width="1.200" height="1.200" fill="#777"/><rect x="7.500" y="527.8" width="1.200" height="1.200" fill="#777"/><rect x="5.100" y="553.9" width="6" height="1" fill="#3c3c3c"/><rect x="7.500" y="545.1" width="1.200" height="1.200" fill="#777"/><rect x="7.500" y="562.4" width="1.200" height="1.200" fill="#777"/><rect x="5.100" y="588.5" width="6" height="1" fill="#3c3c3c"/><rect x="7.500" y="579.7" width="1.200" height="1.200" fill="#777"/><rect x="7.500" y="597.0" width="1.200" height="1.200" fill="#777"/><rect x="5.100" y="623.0" width="6" height="1" fill="#3c3c3c"/><rect x="7.500" y="614.3" width="1.200" height="1.200" fill="#777"/><rect x="7.500" y="631.6" width="1.200" height="1.200" fill="#777"/><rect x="5.100" y="657.6" width="6" height="1" fill="#3c3c3c"/><rect x="7.500" y="648.9" width="1.200" height="1.200" fill="#777"/></svg>
<div class="t" style="left:296.2px;top:319.4px;width:20px;height:20px;line-height:20px;text-align:center;font-size:12.5px;color:#555;transform:rotate(-90deg);">9</div>
<div class="t" style="left:296.2px;top:354.0px;width:20px;height:20px;line-height:20px;text-align:center;font-size:12.5px;color:#555;transform:rotate(-90deg);">8</div>
<div class="t" style="left:296.2px;top:388.5px;width:20px;height:20px;line-height:20px;text-align:center;font-size:12.5px;color:#555;transform:rotate(-90deg);">7</div>
<div class="t" style="left:296.2px;top:423.1px;width:20px;height:20px;line-height:20px;text-align:center;font-size:12.5px;color:#555;transform:rotate(-90deg);">6</div>
<div class="t" style="left:296.2px;top:457.7px;width:20px;height:20px;line-height:20px;text-align:center;font-size:12.5px;color:#555;transform:rotate(-90deg);">5</div>
<div class="t" style="left:296.2px;top:492.3px;width:20px;height:20px;line-height:20px;text-align:center;font-size:12.5px;color:#555;transform:rotate(-90deg);">4</div>
<div class="t" style="left:296.2px;top:526.9px;width:20px;height:20px;line-height:20px;text-align:center;font-size:12.5px;color:#555;transform:rotate(-90deg);">3</div>
<div class="t" style="left:296.2px;top:561.4px;width:20px;height:20px;line-height:20px;text-align:center;font-size:12.5px;color:#555;transform:rotate(-90deg);">2</div>
<div class="t" style="left:296.2px;top:596.0px;width:20px;height:20px;line-height:20px;text-align:center;font-size:12.5px;color:#555;transform:rotate(-90deg);">1</div>
<div class="t" style="left:296.2px;top:630.6px;width:20px;height:20px;line-height:20px;text-align:center;font-size:12.5px;color:#555;transform:rotate(-90deg);">0</div>
<div class="t" style="left:296.2px;top:665.2px;width:20px;height:20px;line-height:20px;text-align:center;font-size:12.5px;color:#555;transform:rotate(-90deg);">1</div>
<div class="t" style="left:296.2px;top:699.8px;width:20px;height:20px;line-height:20px;text-align:center;font-size:12.5px;color:#555;transform:rotate(-90deg);">2</div>
<div class="t" style="left:296.2px;top:734.3px;width:20px;height:20px;line-height:20px;text-align:center;font-size:12.5px;color:#555;transform:rotate(-90deg);">3</div>
<div class="t" style="left:296.2px;top:768.9px;width:20px;height:20px;line-height:20px;text-align:center;font-size:12.5px;color:#555;transform:rotate(-90deg);">4</div>
<div class="t" style="left:296.2px;top:803.5px;width:20px;height:20px;line-height:20px;text-align:center;font-size:12.5px;color:#555;transform:rotate(-90deg);">5</div>
<div class="t" style="left:296.2px;top:838.1px;width:20px;height:20px;line-height:20px;text-align:center;font-size:12.5px;color:#555;transform:rotate(-90deg);">6</div>
<div class="t" style="left:296.2px;top:872.7px;width:20px;height:20px;line-height:20px;text-align:center;font-size:12.5px;color:#555;transform:rotate(-90deg);">7</div>
<div class="t" style="left:296.2px;top:907.2px;width:20px;height:20px;line-height:20px;text-align:center;font-size:12.5px;color:#555;transform:rotate(-90deg);">8</div>
<div class="t" style="left:296.2px;top:941.8px;width:20px;height:20px;line-height:20px;text-align:center;font-size:12.5px;color:#555;transform:rotate(-90deg);">9</div>
<div class="a" style="left:267px;top:269px;width:19px;height:719px;background:#dadada;"></div>
<div class="a" style="left:267px;top:269px;width:19px;height:19px;background:#fff;border:1px solid #b6b6b6;box-sizing:border-box;"></div>
<svg class="a" style="left:272px;top:275.5px;" width="9" height="5" viewBox="0 0 9 5"><path d="M0 5h9L4.500 0z" fill="#777"/></svg>
<div class="a" style="left:267px;top:288px;width:19px;height:293px;background:#fff;border:1px solid #b6b6b6;box-sizing:border-box;"></div>
<div class="a" style="left:267px;top:969.5px;width:19px;height:18.5px;background:#fff;border:1px solid #b6b6b6;box-sizing:border-box;"></div>
<svg class="a" style="left:272px;top:976.5px;" width="9" height="5" viewBox="0 0 9 5"><path d="M0 0h9L4.500 5z" fill="#777"/></svg>
<div class="a" style="left:290px;top:267px;width:1px;height:721px;background:#bcbcbc;"></div>
<div class="a" style="left:290px;top:987px;width:1630px;height:1px;background:#bcbcbc;"></div>
<div class="a" style="left:1900px;top:270px;width:18.5px;height:648px;background:#dbdbdb;"></div>
<div class="a" style="left:1900px;top:270px;width:18px;height:17.5px;background:#fff;border:1px solid #b6b6b6;box-sizing:border-box;"></div>
<svg class="a" style="left:1904.5px;top:276px;" width="9" height="5" viewBox="0 0 9 5"><path d="M0 5h9L4.500 0z" fill="#777"/></svg>
<div class="a" style="left:1900px;top:442px;width:18px;height:49.5px;background:#fff;border:1px solid #b6b6b6;box-sizing:border-box;"></div>
<div class="a" style="left:1900px;top:901px;width:18px;height:17.5px;background:#fff;border:1px solid #b6b6b6;box-sizing:border-box;"></div>
<svg class="a" style="left:1904.5px;top:907.5px;" width="9" height="5" viewBox="0 0 9 5"><path d="M0 0h9L4.500 5z" fill="#777"/></svg>
<svg class="a" style="left:1904.5px;top:925.5px;" width="9" height="10" viewBox="0 0 9 10"><path d="M0 4.500h9L4.500 0zM0 9.500h9L4.500 5z" fill="#666"/></svg>
<svg class="a" style="left:1904.5px;top:946.5px;" width="9" height="10" viewBox="0 0 9 10"><path d="M0 0h9L4.500 4.500zM0 5h9L4.500 9.500z" fill="#666"/></svg>
<svg class="a" style="left:16.5px;top:290px;" width="6" height="13" viewBox="0 0 6 13"><path d="M3.700 0h1.900v12.800H3.700V2.300L0.900 4.300 0.100 3z" fill="#484848"/></svg>
<div class="t" style="left:14.93px;top:422.54px;font-size:17.5px;color:#484848;">2</div>
<svg class="a" style="left:13.5px;top:447.0px;" width="12.5" height="12" viewBox="0 0 13 12"><path d="M7 0l1.800 4.200 4.200.4-3.200 2.900 1 4.300L7 9.500 3.200 11.800l1-4.300L1 4.600l4.200-.4z" fill="#666"/><path d="M0 2.500h1.200M0 5.500h1M0.500 8.500h1" stroke="#666" stroke-width=".9"/></svg>
<div class="t" style="left:14.93px;top:559.54px;font-size:17.5px;color:#484848;">3</div>
<svg class="a" style="left:13.5px;top:584.0px;" width="12.5" height="12" viewBox="0 0 13 12"><path d="M7 0l1.800 4.200 4.200.4-3.200 2.900 1 4.300L7 9.500 3.200 11.800l1-4.300L1 4.600l4.200-.4z" fill="#666"/><path d="M0 2.500h1.200M0 5.500h1M0.500 8.500h1" stroke="#666" stroke-width=".9"/></svg>
<div class="t" style="left:14.93px;top:696.54px;font-size:17.5px;color:#d95a3c;">4</div>
<svg class="a" style="left:13.5px;top:721.0px;" width="12.5" height="12" viewBox="0 0 13 12"><path d="M7 0l1.800 4.200 4.200.4-3.200 2.900 1 4.300L7 9.500 3.200 11.800l1-4.300L1 4.600l4.200-.4z" fill="#666"/><path d="M0 2.500h1.200M0 5.500h1M0.500 8.500h1" stroke="#666" stroke-width=".9"/></svg>
<div class="t" style="left:14.93px;top:833.54px;font-size:17.5px;color:#484848;">5</div>
<svg class="a" style="left:13.5px;top:858.0px;" width="12.5" height="12" viewBox="0 0 13 12"><path d="M7 0l1.800 4.200 4.200.4-3.200 2.900 1 4.300L7 9.500 3.200 11.800l1-4.300L1 4.600l4.200-.4z" fill="#666"/><path d="M0 2.500h1.200M0 5.500h1M0.500 8.500h1" stroke="#666" stroke-width=".9"/></svg>
<div class="t" style="left:14.93px;top:970.54px;font-size:17.5px;color:#484848;">6</div>
<div class="a" style="left:43px;top:290px;width:199.5px;height:112.5px;background:#fff;border:1px solid #c2c2c2;box-sizing:border-box;"></div>
<svg class="a" style="left:43px;top:290px;border:1px solid #d8d8d8;box-sizing:border-box;" width="199.5" height="112.5" viewBox="0 0 199.5 112.5"><defs><pattern id="dmk" width="33.400" height="33.400" patternUnits="userSpaceOnUse"><rect width="33.400" height="33.400" fill="#f0dcab"/><circle cx="0" cy="0" r="4.600" fill="#f4e5bd"/><circle cx="0" cy="0" r="2.200" fill="#f9efd4"/><circle cx="33.4" cy="0" r="4.600" fill="#f4e5bd"/><circle cx="33.4" cy="0" r="2.200" fill="#f9efd4"/><circle cx="0" cy="33.4" r="4.600" fill="#f4e5bd"/><circle cx="0" cy="33.4" r="2.200" fill="#f9efd4"/><circle cx="33.4" cy="33.4" r="4.600" fill="#f4e5bd"/><circle cx="33.4" cy="33.4" r="2.200" fill="#f9efd4"/><circle cx="16.7" cy="16.7" r="4.600" fill="#f4e5bd"/><circle cx="16.7" cy="16.7" r="2.200" fill="#f9efd4"/><path d="M16.7 -5l3.500 5-3.500 5-3.500-5z" fill="#e7cd92"/><circle cx="16.7" cy="0" r="1.500" fill="#f6e8c4"/><path d="M0 11.7l3.500 5-3.500 5-3.500-5z" fill="#e7cd92"/><circle cx="0" cy="16.7" r="1.500" fill="#f6e8c4"/><path d="M33.4 11.7l3.500 5-3.500 5-3.500-5z" fill="#e7cd92"/><circle cx="33.4" cy="16.7" r="1.500" fill="#f6e8c4"/><path d="M16.7 28.4l3.500 5-3.500 5-3.500-5z" fill="#e7cd92"/><circle cx="16.7" cy="33.4" r="1.500" fill="#f6e8c4"/><path d="M8.350 8.350l2 2M25.050 8.350l-2 2M8.350 25.050l2-2M25.050 25.050l-2-2" stroke="#e9d19a" stroke-width="2.500"/></pattern></defs>
    <rect width="199.500" height="112.500" fill="url(#dmk)"/>
    <rect x="22.800" y="22" width="153.900" height="69" fill="#fff"/><rect x="25.300" y="25" width="150.500" height="64.500" fill="none" stroke="#3a2a1a" stroke-width="1.100"/>
    <rect x="85.800" y="22" width="29" height="11.400" fill="#F0A22E" stroke="#4a3a20" stroke-width=".9"/></svg>
<div class="t" style="left:78.20px;top:325.52px;font-size:13.5px;color:#e6a945;letter-spacing:-0.143px;">Preservatives contain</div>
<div class="t" style="left:119.90px;top:340.82px;font-size:13.5px;color:#e6a945;letter-spacing:-0.024px;">sodium</div>
<svg class="a" style="left:0;top:0" width="300" height="400"><text class="sn" x="135" y="370.800" font-size="3.600" font-weight="bold" fill="#222">Raha Jojo</text></svg>
<div class="a" style="left:43px;top:427.2px;width:199.5px;height:113.3px;background:#fff;border:1px solid #c2c2c2;box-sizing:border-box;"></div>
<div class="a" style="left:51px;top:435.0px;width:185px;height:98.5px;background:#FBEEC9;border:1px solid #3a2a1a;box-sizing:border-box;"></div>
<svg class="a" style="left:0;top:0" width="300" height="600"><text transform="translate(63.500 452.600) scale(0.862 1)" font-size="10.800" fill="#2a1c10" stroke="#2a1c10" stroke-width=".22">What are preservatives?</text></svg>
<svg class="a" style="left:0;top:0" width="300" height="990"><text transform="translate(68.2 465.7) scale(0.768 1)" font-size="4.3" fill="#1a1208" font-weight="bold" stroke="#1a1208" stroke-width=".1">material of prepared foods</text><text transform="translate(68.2 472.7) scale(0.841 1)" font-size="4.3" fill="#1a1208" font-weight="bold" stroke="#1a1208" stroke-width=".1">Added in process of preparing food</text><text transform="translate(68.2 479.6) scale(0.797 1)" font-size="4.3" fill="#1a1208" font-weight="bold" stroke="#1a1208" stroke-width=".1">Prevent growth of microorganisms in food</text><text transform="translate(68.2 485.6) scale(0.862 1)" font-size="4.3" fill="#1a1208" font-weight="bold" stroke="#1a1208" stroke-width=".1">Generally 3 class:</text><text transform="translate(75.9 492.7) scale(0.726 1)" font-size="4.3" fill="#1a1208" font-weight="bold" stroke="#1a1208" stroke-width=".1">Natural</text><text transform="translate(75.9 499.6) scale(0.734 1)" font-size="4.3" fill="#1a1208" font-weight="bold" stroke="#1a1208" stroke-width=".1">Chemical</text><text transform="translate(75.9 506.6) scale(0.706 1)" font-size="4.3" fill="#1a1208" font-weight="bold" stroke="#1a1208" stroke-width=".1">Artificial</text></svg>
<div class="a" style="left:63.8px;top:463.9px;width:1.1px;height:1.1px;background:#2a1c10;"></div>
<div class="a" style="left:63.8px;top:470.9px;width:1.1px;height:1.1px;background:#2a1c10;"></div>
<div class="a" style="left:63.8px;top:477.8px;width:1.1px;height:1.1px;background:#2a1c10;"></div>
<div class="a" style="left:63.8px;top:483.8px;width:1.1px;height:1.1px;background:#2a1c10;"></div>
<svg class="a" style="left:71.2px;top:489.5px;" width="3" height="3.2" viewBox="0 0 3 3.2"><path d="M0.300 2l.9 1L2.800 0.300" fill="none" stroke="#2a1c10" stroke-width=".6"/></svg>
<svg class="a" style="left:71.2px;top:496.40000000000003px;" width="3" height="3.2" viewBox="0 0 3 3.2"><path d="M0.300 2l.9 1L2.800 0.300" fill="none" stroke="#2a1c10" stroke-width=".6"/></svg>
<svg class="a" style="left:71.2px;top:503.40000000000003px;" width="3" height="3.2" viewBox="0 0 3 3.2"><path d="M0.300 2l.9 1L2.800 0.300" fill="none" stroke="#2a1c10" stroke-width=".6"/></svg>
<svg class="a" style="left:152.8px;top:460.6px;" width="65.5" height="68" viewBox="0 0 65.5 68"><defs><clipPath id="c2"><rect width="65.500" height="48.500" rx="9"/></clipPath><linearGradient id="rf" x1="0" y1="0" x2="0" y2="1"><stop offset="0" stop-color="#6a5646" stop-opacity=".42"/><stop offset=".8" stop-color="#FBEEC9" stop-opacity="0"/></linearGradient><filter id="b2"><feGaussianBlur stdDeviation=".7"/></filter></defs>
    <g clip-path="url(#c2)"><g filter="url(#b2)"><rect x="-3" y="-3" width="72" height="55" fill="#6b3c26"/><path d="M-2 26l20-6 14 6 2 24H-2z" fill="#4a2e1e"/>
    <path d="M36 6l10 4-9 18-8-3z" fill="#d9d2c8" opacity=".85"/>
    <circle cx="15.500" cy="7.500" r="7.800" fill="#c9b8a8"/><circle cx="15.500" cy="7.500" r="6.300" fill="#2b1a1c"/>
    <circle cx="29.800" cy="13" r="6" fill="#c9a070"/><circle cx="29.800" cy="13" r="4.600" fill="#8a6a1c"/>
    <circle cx="15.800" cy="24.500" r="9" fill="#3a2a2a"/><circle cx="15.800" cy="24.500" r="7.300" fill="#dfe6ec"/>
    <circle cx="32" cy="31.500" r="7.200" fill="#d99a7a"/><circle cx="32" cy="31.500" r="5.600" fill="#a03c1c"/>
    <circle cx="57" cy="24" r="22" fill="#24221a"/><circle cx="57" cy="22" r="17" fill="#2f3320"/>
    <circle cx="51" cy="13" r="3.500" fill="#a8b868"/><circle cx="57" cy="18" r="4" fill="#8aa050"/><circle cx="53" cy="25" r="3.500" fill="#b5c47a"/><circle cx="60" cy="28" r="3.500" fill="#6f8a3c"/><circle cx="61" cy="11" r="3" fill="#94a85a"/>
    <circle cx="5" cy="33" r="4.500" fill="#a89a7a"/><circle cx="11" cy="40" r="4.500" fill="#b8aa8a"/><circle cx="4" cy="44" r="4" fill="#9a8c6c"/><circle cx="17" cy="45" r="3.500" fill="#8a7c5c"/></g></g>
    <rect x="0" y="49.500" width="65.500" height="16" rx="5" fill="url(#rf)"/></svg>
<div class="a" style="left:43px;top:564.2px;width:199.5px;height:113.3px;background:#fff;border:1px solid #c2c2c2;box-sizing:border-box;"></div>
<div class="a" style="left:51px;top:572.0px;width:185px;height:98.5px;background:#FBEEC9;border:1px solid #3a2a1a;box-sizing:border-box;"></div>
<svg class="a" style="left:0;top:0" width="300" height="990"><text transform="translate(63.8 583.9) scale(1.086 1)" font-size="4.8" fill="#1a1208" font-weight="bold" stroke="#1a1208" stroke-width=".1">Preservatives have different components</text><text transform="translate(63.8 593.8) scale(1.082 1)" font-size="4.8" fill="#1a1208" font-weight="bold" stroke="#1a1208" stroke-width=".1">that can be dangerous for human health.</text><text transform="translate(63.8 604.6) scale(1.168 1)" font-size="4.8" fill="#1a1208" font-weight="bold" stroke="#1a1208" stroke-width=".1">One of them is sodium which now is a</text><text transform="translate(63.8 614.8) scale(1.275 1)" font-size="4.8" fill="#1a1208" font-weight="bold" stroke="#1a1208" stroke-width=".1">part of our diet. So indulging in its</text><text transform="translate(63.8 625.6) scale(1.043 1)" font-size="4.8" fill="#1a1208" font-weight="bold" stroke="#1a1208" stroke-width=".1">usage can be harmful.</text></svg>
<div class="a" style="left:101.5px;top:600.8px;width:16.5px;height:4.6px;background:#FBEEC9;"></div>
<svg class="a" style="left:0;top:0" width="300" height="990"><text transform="translate(101.8 604.6) scale(1.071 1)" font-size="4.8" fill="#e39a2c" font-weight="bold" stroke="#e39a2c" stroke-width=".1">sodium</text></svg>
<svg class="a" style="left:167.5px;top:573.9px;" width="61" height="61" viewBox="0 0 61 61"><defs><clipPath id="c3"><circle cx="30.500" cy="30.500" r="30.500"/></clipPath><filter id="b3"><feGaussianBlur stdDeviation=".6"/></filter></defs><g clip-path="url(#c3)"><g filter="url(#b3)"><rect width="61" height="61" fill="#45241a"/>
    <circle cx="29" cy="36" r="21.500" fill="#e0a83a"/><circle cx="29" cy="36.500" r="16.500" fill="#f3ead8"/>
    <path d="M16 30l20-9 8 7-6 14-14 4z" fill="#e8c892"/><path d="M22 27l14-5 5 5-16 7z" fill="#f0d8a8"/><path d="M24 40l12-3 2 5-11 3z" fill="#e9b978"/>
    <path d="M8 8c6-6 14-6 19 0l-2 10c-5-2-11-1-15 2z" fill="#d9c3b0"/><path d="M10 12l14 8-2 3-13-7z" fill="#c9c9c9"/>
    <path d="M43 4c10 3 18 14 18 26l-7 6c-3-9-8-17-14-22z" fill="#c08a60"/><path d="M46 20c4 4 6 9 7 14l-4 2c-2-5-4-9-7-12z" fill="#a8724c"/></g></g></svg>
<svg class="a" style="left:118.3px;top:623.8px;" width="30" height="30" viewBox="0 0 30 30"><circle cx="15" cy="15" r="15" fill="#f6f1ea"/><path d="M8 19.500l14 7.500M22 19.500L8 27" stroke="#a4a4a4" stroke-width="1.500"/><path d="M6 19l2 1.500M24 19l-2 1.500" stroke="#a4a4a4" stroke-width="2.200"/>
    <path d="M15 6.500c-4.300 0-7.300 2.800-7.300 6.500 0 2.300 1.100 3.600 2.400 4.500v2.800h9.800v-2.800c1.300-.9 2.400-2.200 2.400-4.500 0-3.700-3-6.500-7.300-6.500z" fill="#e25a2c"/>
    <circle cx="12.200" cy="13.300" r="1.900" fill="#f6f1ea"/><circle cx="17.800" cy="13.300" r="1.900" fill="#f6f1ea"/><path d="M15 15.500l-.9 1.800h1.800z" fill="#f6f1ea"/></svg>
<div class="a" style="left:40.8px;top:699px;width:204.2px;height:118px;background:#e2806a;"></div>
<div class="a" style="left:43.6px;top:701.8px;width:198.6px;height:112.4px;background:#fff;"></div>
<svg class="a" style="left:45.2px;top:702.9px" width="196.58" height="110.75"><use href="#s4" width="196.58" height="110.75"/></svg>
<svg class="a" style="left:0;top:0" width="300" height="990"><g transform="translate(45.2 702.9) scale(0.1673) translate(-524 -310)"><text transform="translate(1043.8 457.2) scale(0.982 1)" text-anchor="middle" font-size="24.8" fill="#1f1206" stroke="#1f1206" stroke-width="1.6">sodium</text><text transform="translate(1041.0 488.0) scale(1.023 1)" text-anchor="middle" font-size="24.8" fill="#1f1206" stroke="#1f1206" stroke-width="1.6">citrate</text><text transform="translate(1228.8 442.0) scale(0.991 1)" text-anchor="middle" font-size="24.5" fill="#1f1206" stroke="#1f1206" stroke-width="1.6">sodium</text><text transform="translate(1223.0 473.7) scale(0.913 1)" text-anchor="middle" font-size="24.5" fill="#1f1206" stroke="#1f1206" stroke-width="1.6">nitrite,</text><text transform="translate(1223.0 503.7) scale(0.943 1)" text-anchor="middle" font-size="24.5" fill="#1f1206" stroke="#1f1206" stroke-width="1.6">nitrate</text><text transform="translate(1415.6 458.7) scale(0.999 1)" text-anchor="middle" font-size="19.3" fill="#1f1206" stroke="#1f1206" stroke-width="1.6">Sodium</text><text transform="translate(1415.5 483.8) scale(1.000 1)" text-anchor="middle" font-size="17.5" fill="#1f1206" stroke="#1f1206" stroke-width="1.6">metabisulphite</text><text transform="translate(1133.2 631.0) scale(0.979 1)" text-anchor="middle" font-size="24.8" fill="#1f1206" stroke="#1f1206" stroke-width="1.6">sodium</text><text transform="translate(1130.2 661.2) scale(1.018 1)" text-anchor="middle" font-size="24.8" fill="#1f1206" stroke="#1f1206" stroke-width="1.6">propionate</text><text transform="translate(1316.0 615.3) scale(0.988 1)" text-anchor="middle" font-size="21.7" fill="#6b4216" stroke="#6b4216" stroke-width="1.6">Preservative</text><text transform="translate(1315.8 646.0) scale(1.023 1)" text-anchor="middle" font-size="21.7" fill="#6b4216" stroke="#6b4216" stroke-width="1.6">contains</text><text transform="translate(1315.8 675.6) scale(0.995 1)" text-anchor="middle" font-size="21.7" fill="#6b4216" stroke="#6b4216" stroke-width="1.6">sodium</text><text transform="translate(1511.3 629.4) scale(0.983 1)" text-anchor="middle" font-size="24" fill="#1f1206" stroke="#1f1206" stroke-width="1.6">Sodium</text><text transform="translate(1511.3 662.8) scale(1.027 1)" text-anchor="middle" font-size="24" fill="#1f1206" stroke="#1f1206" stroke-width="1.6">benzoate</text><text transform="translate(1043.4 806.0) scale(0.982 1)" text-anchor="middle" font-size="22.7" fill="#1f1206" stroke="#1f1206" stroke-width="1.6">disodium</text><text transform="translate(1040.9 833.0) scale(1.020 1)" text-anchor="middle" font-size="22.7" fill="#1f1206" stroke="#1f1206" stroke-width="1.6">di-acetate</text><text transform="translate(1227.5 802.5) scale(0.995 1)" text-anchor="middle" font-size="29.7" fill="#1f1206" stroke="#1f1206" stroke-width="1.6">sodium</text><text transform="translate(1224.0 842.0) scale(1.010 1)" text-anchor="middle" font-size="29.7" fill="#1f1206" stroke="#1f1206" stroke-width="1.6">sulphite</text><text transform="translate(1411.5 802.5) scale(0.976 1)" text-anchor="middle" font-size="29.3" fill="#1f1206" stroke="#1f1206" stroke-width="1.6">Sodium</text><text transform="translate(1411.5 842.0) scale(1.028 1)" text-anchor="middle" font-size="29.3" fill="#1f1206" stroke="#1f1206" stroke-width="1.6">sorbate</text><path d="M807.500 640.500H1041" stroke="#c98f35" stroke-width="4" stroke-dasharray="15.500 12.500"/></g></svg>
<div class="a" style="left:43.6px;top:701.8px;width:198.6px;height:112.4px;border:7.600px solid #fff;border-top-width:7.400px;border-bottom-width:6.900px;box-sizing:border-box;"></div>
<div class="a" style="left:51px;top:709px;width:185.2px;height:98.7px;border:1px solid #3a2a1a;box-sizing:border-box;"></div>
<div class="a" style="left:43px;top:838.2px;width:199.5px;height:113.3px;background:#fff;border:1px solid #c2c2c2;box-sizing:border-box;"></div>
<svg class="a" style="left:49px;top:849px;" width="137" height="92" viewBox="0 0 137 92"><defs><clipPath id="m5"><rect width="137" height="92"/></clipPath><filter id="bm"><feGaussianBlur stdDeviation=".55"/></filter></defs><g clip-path="url(#m5)"><g filter="url(#bm)">
        <rect x="-2" y="-2" width="141" height="96" fill="#e6d9a8"/>
        <path d="M-2 -2h70c6 10 4 22-2 30S40 56 20 52-2 40-2 40z" fill="#eeb49a"/>
        <path d="M0 8c10-4 22 0 26 10s-2 22-12 26S0 40 0 40z" fill="#e89478"/><path d="M4 24c8-6 18-2 24 6l-6 16c-8 2-16-2-20-8z" fill="#f2c0aa"/>
        <path d="M26 2c10-4 22 2 26 12s-4 30-12 34-14-8-16-20 0-24 2-26z" fill="#f0bca4"/><path d="M34 20c4-2 8 2 8 10s-2 22-6 28l-6-4c0-12 0-26 4-34z" fill="#e8a07e"/>
        <path d="M44 8c8-4 18-4 22 2s2 12-6 14-16-4-18-8 0-6 2-8z" fill="#f2b8ac"/>
        <path d="M54 18c12-8 32-4 36 8s-8 32-24 32-18-12-18-22 2-14 6-18z" fill="#e8803c"/><path d="M62 26c8-4 18-2 20 6s-8 18-16 18-10-8-8-16 2-6 4-8z" fill="#d9622a"/><path d="M56 44c6 6 16 8 24 4l-4 10c-8 2-16 0-20-6z" fill="#f0a060"/>
        <path d="M100 8h39v26c-12 4-24 2-32-4s-10-16-7-22z" fill="#e89868"/><path d="M106 34c6-4 14-2 16 4s-2 14-8 14-10-6-10-10 0-6 2-8z" fill="#f0a088"/>
        <ellipse cx="91" cy="21" rx="8" ry="6.500" fill="#2a1a16"/><ellipse cx="119" cy="23" rx="11.500" ry="9.500" fill="#2e1c2a"/><ellipse cx="116" cy="18" rx="4.500" ry="2.500" fill="#8a7a8a" opacity=".6"/>
        <path d="M-2 50c20-8 50-8 70 4 8 6 12 16 8 26l-10 14H-2z" fill="#c05a48"/><path d="M-2 62c18-6 44-4 60 6M-2 76c14-4 36-2 50 6" stroke="#a8402f" stroke-width="2.500" fill="none" opacity=".8"/>
        <circle cx="19.0" cy="70.1" r="0.7" fill="#f6dcd0"/><circle cx="50.1" cy="47.1" r="0.5" fill="#f6dcd0"/><circle cx="20.7" cy="55.2" r="1.1" fill="#f6dcd0"/><circle cx="43.3" cy="70.4" r="0.7" fill="#e8a898"/><circle cx="18.6" cy="51.3" r="1.1" fill="#f6dcd0"/><circle cx="59.3" cy="76.2" r="0.5" fill="#f0c4b4"/><circle cx="24.1" cy="45.5" r="1.0" fill="#f6dcd0"/><circle cx="47.6" cy="88.2" r="0.7" fill="#f6dcd0"/><circle cx="31.6" cy="82.4" r="0.8" fill="#e8a898"/><circle cx="70.3" cy="48.7" r="0.6" fill="#e8a898"/><circle cx="20.6" cy="76.3" r="1.0" fill="#8a2a22"/><circle cx="33.7" cy="84.0" r="0.8" fill="#f6dcd0"/><circle cx="46.7" cy="87.4" r="0.9" fill="#f0c4b4"/><circle cx="68.5" cy="91.6" r="0.9" fill="#e8a898"/><circle cx="55.9" cy="59.7" r="0.8" fill="#f0c4b4"/><circle cx="57.1" cy="54.1" r="1.0" fill="#8a2a22"/><circle cx="22.8" cy="47.0" r="1.0" fill="#f6dcd0"/><circle cx="7.1" cy="82.4" r="0.7" fill="#e8a898"/><circle cx="1.6" cy="64.5" r="0.7" fill="#f0c4b4"/><circle cx="3.5" cy="73.5" r="0.5" fill="#8a2a22"/><circle cx="44.1" cy="88.3" r="0.7" fill="#e8a898"/><circle cx="79.9" cy="58.9" r="0.5" fill="#f0c4b4"/><circle cx="75.9" cy="90.6" r="0.7" fill="#8a2a22"/><circle cx="12.5" cy="46.0" r="1.0" fill="#8a2a22"/><circle cx="28.8" cy="50.6" r="1.0" fill="#f6dcd0"/><circle cx="36.8" cy="69.0" r="0.9" fill="#f0c4b4"/><circle cx="49.6" cy="89.1" r="0.8" fill="#f6dcd0"/><circle cx="50.7" cy="78.3" r="1.1" fill="#f6dcd0"/><circle cx="78.2" cy="69.0" r="0.8" fill="#f0c4b4"/><circle cx="63.1" cy="91.4" r="0.7" fill="#f6dcd0"/><circle cx="49.3" cy="74.3" r="0.5" fill="#8a2a22"/><circle cx="37.3" cy="76.6" r="0.7" fill="#8a2a22"/><circle cx="59.0" cy="45.1" r="0.5" fill="#f0c4b4"/><circle cx="77.1" cy="56.1" r="0.8" fill="#8a2a22"/><circle cx="14.2" cy="52.9" r="1.0" fill="#8a2a22"/><circle cx="24.0" cy="62.1" r="1.0" fill="#f0c4b4"/><circle cx="77.7" cy="76.8" r="0.6" fill="#e8a898"/><circle cx="52.3" cy="56.9" r="0.7" fill="#f6dcd0"/><circle cx="52.0" cy="48.7" r="0.9" fill="#8a2a22"/><circle cx="54.0" cy="54.8" r="1.0" fill="#e8a898"/><circle cx="6.4" cy="79.6" r="0.6" fill="#f6dcd0"/><circle cx="21.6" cy="81.8" r="0.5" fill="#e8a898"/><circle cx="25.2" cy="84.1" r="0.8" fill="#8a2a22"/><circle cx="27.2" cy="83.7" r="0.6" fill="#8a2a22"/><circle cx="47.2" cy="64.2" r="0.8" fill="#8a2a22"/><circle cx="37.2" cy="74.4" r="0.7" fill="#f6dcd0"/><circle cx="2.8" cy="63.8" r="0.6" fill="#f6dcd0"/><circle cx="75.5" cy="86.2" r="1.1" fill="#f6dcd0"/><circle cx="44.7" cy="91.3" r="0.9" fill="#f0c4b4"/><circle cx="59.6" cy="84.2" r="0.9" fill="#8a2a22"/><circle cx="43.5" cy="86.7" r="1.0" fill="#8a2a22"/><circle cx="9.6" cy="55.7" r="0.5" fill="#e8a898"/><circle cx="71.7" cy="87.2" r="0.8" fill="#f0c4b4"/><circle cx="38.5" cy="49.8" r="0.8" fill="#e8a898"/><circle cx="53.0" cy="69.2" r="0.7" fill="#f0c4b4"/><circle cx="27.3" cy="56.1" r="1.0" fill="#f6dcd0"/><circle cx="64.9" cy="46.9" r="0.6" fill="#f0c4b4"/><circle cx="42.8" cy="83.2" r="0.6" fill="#8a2a22"/><circle cx="73.7" cy="82.7" r="1.0" fill="#f0c4b4"/><circle cx="39.0" cy="71.4" r="0.7" fill="#8a2a22"/><circle cx="19.9" cy="73.7" r="0.8" fill="#f0c4b4"/><circle cx="37.8" cy="81.3" r="0.5" fill="#f0c4b4"/><circle cx="62.0" cy="46.2" r="0.5" fill="#f6dcd0"/><circle cx="78.0" cy="85.0" r="0.6" fill="#f6dcd0"/><circle cx="25.3" cy="59.1" r="0.7" fill="#f6dcd0"/><circle cx="46.9" cy="61.3" r="0.6" fill="#8a2a22"/><circle cx="34.3" cy="50.1" r="0.5" fill="#f6dcd0"/><circle cx="63.6" cy="71.2" r="0.5" fill="#f6dcd0"/><circle cx="48.4" cy="81.6" r="0.7" fill="#f0c4b4"/><circle cx="49.8" cy="64.7" r="0.7" fill="#f6dcd0"/><circle cx="60.8" cy="59.1" r="1.1" fill="#f6dcd0"/><circle cx="36.9" cy="55.8" r="0.8" fill="#f0c4b4"/><circle cx="64.3" cy="54.8" r="0.6" fill="#f0c4b4"/><circle cx="74.9" cy="62.0" r="1.0" fill="#8a2a22"/><circle cx="9.7" cy="77.1" r="1.1" fill="#f6dcd0"/><circle cx="53.4" cy="79.2" r="0.8" fill="#f0c4b4"/><circle cx="64.9" cy="78.4" r="0.8" fill="#e8a898"/><circle cx="61.9" cy="46.1" r="0.6" fill="#f0c4b4"/><circle cx="52.7" cy="62.0" r="1.0" fill="#8a2a22"/><circle cx="67.3" cy="49.8" r="1.0" fill="#f6dcd0"/><circle cx="66.9" cy="89.7" r="0.8" fill="#f0c4b4"/><circle cx="2.9" cy="80.8" r="0.8" fill="#e8a898"/><circle cx="8.5" cy="80.0" r="1.1" fill="#f0c4b4"/><circle cx="44.0" cy="85.7" r="0.6" fill="#f0c4b4"/><circle cx="19.4" cy="52.6" r="0.6" fill="#f6dcd0"/><circle cx="20.2" cy="72.8" r="1.1" fill="#f6dcd0"/><circle cx="77.3" cy="62.0" r="0.6" fill="#f6dcd0"/><circle cx="67.5" cy="90.4" r="0.7" fill="#f6dcd0"/><circle cx="12.5" cy="63.3" r="1.0" fill="#e8a898"/><circle cx="7.7" cy="79.9" r="1.0" fill="#f6dcd0"/><circle cx="46.9" cy="85.2" r="0.6" fill="#e8a898"/><circle cx="11.7" cy="68.7" r="1.1" fill="#8a2a22"/><circle cx="53.7" cy="85.1" r="0.9" fill="#8a2a22"/><circle cx="71.2" cy="58.7" r="0.7" fill="#f6dcd0"/><circle cx="16.0" cy="71.4" r="0.6" fill="#f6dcd0"/><circle cx="61.9" cy="50.9" r="1.1" fill="#f6dcd0"/><circle cx="56.1" cy="53.9" r="0.8" fill="#f0c4b4"/><circle cx="38.5" cy="78.6" r="1.0" fill="#f6dcd0"/><circle cx="62.6" cy="86.3" r="0.5" fill="#e8a898"/><circle cx="71.3" cy="75.1" r="1.0" fill="#f0c4b4"/><circle cx="76.7" cy="85.0" r="0.6" fill="#e8a898"/><circle cx="62.1" cy="50.6" r="0.9" fill="#f0c4b4"/><circle cx="72.0" cy="56.2" r="1.0" fill="#8a2a22"/><circle cx="14.7" cy="48.4" r="1.0" fill="#f0c4b4"/><circle cx="7.4" cy="84.0" r="0.7" fill="#8a2a22"/><circle cx="36.2" cy="79.2" r="0.7" fill="#f0c4b4"/><circle cx="26.8" cy="64.9" r="0.8" fill="#e8a898"/><circle cx="51.5" cy="79.6" r="0.8" fill="#e8a898"/><circle cx="43.5" cy="49.7" r="0.7" fill="#f6dcd0"/><circle cx="9.0" cy="86.6" r="1.0" fill="#f0c4b4"/><circle cx="42.2" cy="77.6" r="0.9" fill="#8a2a22"/><circle cx="60.6" cy="58.2" r="0.9" fill="#8a2a22"/><circle cx="8.6" cy="89.3" r="0.7" fill="#f0c4b4"/><circle cx="53.4" cy="68.4" r="0.5" fill="#8a2a22"/><circle cx="54.3" cy="71.2" r="0.6" fill="#e8a898"/><circle cx="14.3" cy="86.7" r="0.9" fill="#f0c4b4"/><circle cx="8.7" cy="70.9" r="1.1" fill="#f6dcd0"/><circle cx="44.4" cy="75.1" r="0.8" fill="#8a2a22"/><circle cx="62.6" cy="77.9" r="0.6" fill="#e8a898"/><circle cx="60.4" cy="70.1" r="0.9" fill="#8a2a22"/><circle cx="8.0" cy="57.0" r="0.5" fill="#e8a898"/><circle cx="3.4" cy="68.2" r="0.6" fill="#8a2a22"/><circle cx="70.0" cy="89.4" r="0.8" fill="#f0c4b4"/><circle cx="28.2" cy="84.7" r="0.6" fill="#8a2a22"/><circle cx="47.2" cy="76.7" r="0.8" fill="#f0c4b4"/><circle cx="14.8" cy="53.1" r="0.7" fill="#f6dcd0"/><circle cx="65.3" cy="79.9" r="0.9" fill="#e8a898"/><circle cx="68.8" cy="82.3" r="0.8" fill="#e8a898"/><circle cx="45.5" cy="53.7" r="0.7" fill="#8a2a22"/><circle cx="2.4" cy="82.6" r="1.0" fill="#f6dcd0"/><circle cx="25.3" cy="87.5" r="0.7" fill="#f6dcd0"/><circle cx="78.2" cy="77.0" r="0.7" fill="#f6dcd0"/><circle cx="2.4" cy="53.1" r="0.9" fill="#f0c4b4"/><circle cx="61.6" cy="75.8" r="0.8" fill="#f6dcd0"/><circle cx="15.9" cy="81.5" r="0.6" fill="#f6dcd0"/><circle cx="8.9" cy="57.6" r="0.9" fill="#e8a898"/><circle cx="10.8" cy="82.0" r="0.9" fill="#f0c4b4"/><circle cx="2.0" cy="73.7" r="0.8" fill="#f6dcd0"/><circle cx="43.1" cy="88.6" r="0.7" fill="#8a2a22"/><circle cx="55.6" cy="50.4" r="1.0" fill="#f0c4b4"/><circle cx="57.3" cy="79.5" r="0.7" fill="#e8a898"/><circle cx="74.5" cy="85.4" r="0.8" fill="#e8a898"/><circle cx="38.8" cy="49.2" r="0.5" fill="#f0c4b4"/><circle cx="67.6" cy="77.9" r="0.7" fill="#f6dcd0"/><circle cx="55.9" cy="69.8" r="0.8" fill="#f6dcd0"/><circle cx="24.4" cy="66.3" r="1.0" fill="#f6dcd0"/><circle cx="35.1" cy="65.9" r="0.5" fill="#8a2a22"/><circle cx="29.4" cy="61.8" r="0.8" fill="#f6dcd0"/><circle cx="17.9" cy="44.1" r="0.6" fill="#8a2a22"/><circle cx="11.5" cy="66.1" r="0.6" fill="#e8a898"/>
        <path d="M-2 84c10 4 30 6 50 4l20 6H-2z" fill="#d9b860"/>
        <path d="M70 78c10-8 30-10 69-4v20H66z" fill="#f0e6cc"/><path d="M90 74l26 18h-10L84 78zM120 80l19 8v4h-8z" fill="#d98a3c"/><path d="M72 84l16 8H70z" fill="#d9913c"/>
        <path d="M76 44c6-10 20-14 30-8s20-6 33 0v40c-10 6-24 6-34 2s-22 4-28-6-6-20-1-28z" fill="#35762e"/><polygon points="77.2,60.7 73.9,61.3 71.1,62.9 72.2,59.8 72.2,56.5 74.3,59.0" fill="#86c062"/><polygon points="103.8,37.2 104.0,35.0 103.4,32.8 105.2,34.1 107.4,34.6 105.4,35.6" fill="#1f5420"/><polygon points="71.7,68.1 73.2,65.9 73.8,63.2 75.1,65.6 77.1,67.5 74.3,67.3" fill="#2a6a28"/><polygon points="71.5,80.3 72.8,78.0 73.3,75.3 74.6,77.7 76.7,79.4 74.0,79.4" fill="#2a6a28"/><polygon points="82.5,46.4 84.8,47.0 87.3,46.8 85.6,48.5 84.6,50.8 83.9,48.4" fill="#2a6a28"/><polygon points="127.3,41.2 127.8,45.5 129.7,49.4 125.7,47.6 121.3,47.3 124.9,44.8" fill="#1f5420"/><polygon points="138.0,51.9 137.8,55.3 138.8,58.6 135.9,56.7 132.6,55.9 135.6,54.4" fill="#2a6a28"/><polygon points="111.6,49.6 113.4,48.0 114.5,45.8 115.0,48.2 116.3,50.2 114.0,49.5" fill="#86c062"/><polygon points="80.3,63.1 77.9,62.6 75.5,62.9 77.2,61.1 78.1,58.9 78.8,61.2" fill="#86c062"/><polygon points="79.4,60.6 77.1,64.1 76.1,68.1 74.3,64.4 71.3,61.5 75.4,61.8" fill="#4f9a3a"/><polygon points="126.2,47.0 123.8,49.1 122.2,52.0 121.5,48.8 119.8,46.0 122.9,47.0" fill="#6cb04c"/><polygon points="77.7,48.7 74.3,48.0 70.8,48.5 73.1,45.9 74.4,42.6 75.5,46.0" fill="#1f5420"/><polygon points="89.0,72.0 91.4,71.8 93.7,70.9 92.6,73.1 92.3,75.5 90.9,73.5" fill="#1f5420"/><polygon points="107.7,65.9 109.0,68.7 111.1,70.9 108.0,70.6 105.0,71.3 106.8,68.8" fill="#2f7a2c"/><polygon points="118.7,75.1 119.8,71.9 119.9,68.5 122.1,71.1 125.0,72.8 121.6,73.4" fill="#4f9a3a"/><polygon points="97.3,46.7 98.2,42.9 97.8,39.0 100.7,41.7 104.2,43.3 100.5,44.4" fill="#1f5420"/><polygon points="125.6,52.2 128.0,55.2 131.3,57.2 127.5,57.8 124.1,59.7 125.5,56.1" fill="#86c062"/><polygon points="138.5,34.5 136.0,35.0 133.8,36.4 134.6,33.9 134.5,31.3 136.2,33.2" fill="#2f7a2c"/><polygon points="101.5,72.2 101.8,68.5 100.9,65.0 103.9,67.1 107.5,68.0 104.1,69.6" fill="#2a6a28"/><polygon points="114.1,68.6 113.1,70.7 113.0,73.0 111.6,71.1 109.7,69.8 112.0,69.6" fill="#3d8a34"/><polygon points="106.5,75.0 102.9,76.3 100.1,78.9 100.6,75.1 99.9,71.4 102.9,73.7" fill="#6cb04c"/><polygon points="127.3,78.1 124.5,77.1 121.6,77.1 123.8,75.2 125.3,72.7 125.8,75.5" fill="#6cb04c"/><polygon points="80.5,62.7 78.1,64.0 76.3,66.0 76.3,63.3 75.5,60.7 77.8,62.2" fill="#2a6a28"/><polygon points="135.3,43.8 133.3,39.9 130.1,37.0 134.5,37.1 138.6,35.9 136.3,39.5" fill="#2a6a28"/><polygon points="132.9,42.4 136.2,41.4 138.9,39.2 138.2,42.6 138.7,46.0 136.1,43.7" fill="#1f5420"/><polygon points="134.6,51.7 131.8,48.6 128.1,46.7 132.2,45.8 135.7,43.6 134.4,47.5" fill="#2f7a2c"/><polygon points="128.1,39.8 126.7,38.1 124.8,36.9 127.0,36.6 129.0,35.5 128.2,37.6" fill="#2a6a28"/><polygon points="133.5,32.9 133.1,36.1 133.8,39.2 131.3,37.3 128.2,36.3 131.2,35.0" fill="#4f9a3a"/><polygon points="120.2,34.5 118.9,37.5 118.7,40.8 116.7,38.2 114.0,36.4 117.2,36.0" fill="#86c062"/><polygon points="94.2,64.4 94.0,61.3 92.6,58.4 95.5,59.7 98.7,60.0 96.1,61.8" fill="#2a6a28"/><polygon points="132.0,52.5 135.0,52.1 137.7,50.8 136.5,53.6 136.3,56.6 134.5,54.2" fill="#2a6a28"/><polygon points="104.1,69.5 102.5,67.7 100.4,66.5 102.8,66.1 104.8,64.9 104.0,67.1" fill="#6cb04c"/><polygon points="118.8,78.3 121.2,75.6 122.6,72.1 123.8,75.7 126.1,78.6 122.4,77.8" fill="#6cb04c"/><polygon points="117.0,58.5 116.5,61.1 116.9,63.7 114.9,62.0 112.4,61.0 114.9,60.1" fill="#6cb04c"/><polygon points="104.4,42.6 102.4,44.7 101.1,47.3 100.4,44.5 98.7,42.2 101.5,42.9" fill="#86c062"/><polygon points="115.8,75.1 119.5,72.7 122.1,69.2 122.4,73.6 124.1,77.6 120.2,75.7" fill="#3d8a34"/><polygon points="122.5,71.0 120.7,73.4 120.0,76.3 118.7,73.6 116.6,71.5 119.5,71.7" fill="#4f9a3a"/><polygon points="131.3,56.1 134.6,54.1 137.1,51.0 137.1,54.9 138.5,58.6 135.1,56.7" fill="#1f5420"/><polygon points="113.3,38.2 110.4,35.1 106.5,33.1 110.7,32.1 114.3,29.7 113.1,33.9" fill="#2a6a28"/><polygon points="81.4,67.9 78.6,67.8 75.9,68.7 77.4,66.2 78.0,63.5 79.3,66.0" fill="#3d8a34"/><polygon points="100.9,42.6 102.8,40.7 103.9,38.3 104.6,40.9 106.1,43.1 103.5,42.4" fill="#1f5420"/><polygon points="97.8,71.0 94.5,69.0 90.8,68.3 94.1,66.4 96.7,63.6 96.6,67.4" fill="#6cb04c"/><polygon points="103.8,78.6 101.2,76.8 98.2,75.9 101.0,74.6 103.3,72.3 103.0,75.5" fill="#4f9a3a"/><polygon points="126.6,62.1 124.8,66.1 124.4,70.4 121.9,66.8 118.3,64.3 122.7,63.9" fill="#2f7a2c"/><polygon points="93.7,40.3 96.2,38.9 98.1,36.7 98.1,39.6 99.0,42.3 96.6,40.8" fill="#1f5420"/><polygon points="137.8,47.5 137.3,43.2 135.3,39.4 139.3,41.0 143.6,41.2 140.2,43.8" fill="#6cb04c"/><polygon points="103.0,70.0 104.4,73.8 107.0,76.8 103.1,76.1 99.2,76.9 101.6,73.8" fill="#6cb04c"/><polygon points="131.8,56.5 134.0,56.1 136.0,55.0 135.2,57.1 135.1,59.3 133.7,57.6" fill="#86c062"/><polygon points="110.5,39.7 108.4,40.7 106.8,42.4 107.0,40.1 106.4,37.8 108.3,39.1" fill="#4f9a3a"/><polygon points="130.0,48.4 126.2,50.4 123.3,53.6 123.4,49.3 122.1,45.1 125.8,47.4" fill="#6cb04c"/><polygon points="70.2,50.7 73.0,51.6 76.0,51.5 73.8,53.5 72.5,56.1 71.8,53.2" fill="#2a6a28"/><polygon points="127.4,50.6 127.4,53.4 128.4,56.0 126.0,54.6 123.3,54.2 125.6,52.8" fill="#86c062"/><polygon points="102.6,45.1 100.3,45.4 98.2,46.4 99.1,44.3 99.3,42.0 100.6,43.8" fill="#1f5420"/><polygon points="138.8,44.4 137.4,40.7 134.9,37.8 138.7,38.4 142.5,37.7 140.1,40.7" fill="#3d8a34"/><polygon points="81.1,63.9 82.4,67.6 85.0,70.6 81.1,70.0 77.2,70.6 79.7,67.6" fill="#3d8a34"/><polygon points="97.1,38.7 95.0,39.2 93.1,40.5 93.7,38.3 93.6,36.1 95.1,37.7" fill="#2a6a28"/><polygon points="110.4,74.4 114.4,73.5 118.0,71.3 116.7,75.3 116.9,79.5 114.1,76.4" fill="#1f5420"/><polygon points="118.3,75.8 121.0,72.4 122.5,68.3 124.0,72.4 126.9,75.7 122.6,75.0" fill="#3d8a34"/><polygon points="108.6,42.5 106.4,41.2 103.8,40.7 106.1,39.4 107.8,37.4 107.8,40.0" fill="#86c062"/><polygon points="123.5,38.1 126.6,35.8 128.8,32.6 129.2,36.4 131.0,39.9 127.4,38.4" fill="#1f5420"/><polygon points="121.5,51.4 125.7,52.0 129.9,51.1 127.3,54.5 126.0,58.6 124.3,54.6" fill="#4f9a3a"/><polygon points="101.8,40.7 104.8,41.8 108.0,41.8 105.5,43.9 103.9,46.7 103.3,43.5" fill="#3d8a34"/><polygon points="76.8,62.3 73.7,60.9 70.3,60.6 73.1,58.6 75.1,55.8 75.4,59.2" fill="#1f5420"/><polygon points="123.1,65.4 125.2,67.2 127.8,68.2 125.2,69.1 123.0,70.9 123.5,68.2" fill="#1f5420"/><polygon points="93.9,53.0 97.5,55.2 101.6,56.0 97.9,58.0 95.1,61.1 95.2,57.0" fill="#2f7a2c"/><polygon points="87.8,75.1 85.9,76.8 84.6,79.1 84.1,76.6 82.8,74.3 85.2,75.2" fill="#1f5420"/><polygon points="101.4,33.3 99.4,35.0 98.1,37.4 97.6,34.7 96.2,32.4 98.7,33.3" fill="#2a6a28"/><polygon points="90.5,52.4 92.3,50.3 93.3,47.6 94.2,50.3 96.0,52.5 93.3,52.0" fill="#4f9a3a"/><polygon points="99.4,71.4 100.8,74.4 103.1,76.8 99.8,76.5 96.6,77.3 98.5,74.6" fill="#4f9a3a"/><polygon points="116.0,34.5 119.2,36.2 122.8,36.6 119.8,38.6 117.6,41.4 117.4,37.8" fill="#2a6a28"/><polygon points="129.7,33.6 126.9,33.4 124.2,34.1 125.8,31.8 126.5,29.1 127.7,31.6" fill="#86c062"/><polygon points="87.0,54.0 89.8,54.1 92.4,53.2 91.0,55.6 90.4,58.3 89.1,55.9" fill="#3d8a34"/><polygon points="86.1,53.7 84.6,55.8 83.9,58.3 82.9,55.9 81.1,54.1 83.6,54.3" fill="#4f9a3a"/><polygon points="88.1,79.9 84.6,81.0 81.6,83.2 82.5,79.6 82.0,75.9 84.7,78.4" fill="#86c062"/><polygon points="99.8,44.4 97.4,41.8 94.2,40.1 97.7,39.3 100.8,37.5 99.7,40.9" fill="#6cb04c"/><polygon points="124.6,73.4 126.8,73.1 128.9,72.1 128.0,74.2 127.9,76.5 126.5,74.7" fill="#4f9a3a"/><polygon points="97.0,40.5 96.5,37.5 95.0,34.9 97.9,35.9 100.9,36.0 98.5,37.9" fill="#2a6a28"/><polygon points="84.9,47.0 81.9,49.9 80.0,53.7 79.0,49.6 76.6,46.1 80.7,47.3" fill="#2a6a28"/><polygon points="72.6,52.7 71.6,50.3 70.0,48.4 72.5,48.8 74.9,48.3 73.4,50.3" fill="#1f5420"/><polygon points="97.9,74.6 97.0,77.7 97.3,81.0 95.0,78.7 92.0,77.3 95.2,76.5" fill="#86c062"/><polygon points="104.4,63.7 104.9,67.1 106.5,70.0 103.4,68.8 100.0,68.7 102.7,66.6" fill="#2f7a2c"/><polygon points="112.4,57.4 109.6,55.5 106.3,54.7 109.3,53.2 111.7,50.8 111.5,54.1" fill="#1f5420"/><polygon points="106.6,48.6 103.8,51.3 102.1,54.8 101.2,51.1 99.0,47.9 102.7,48.9" fill="#6cb04c"/><polygon points="133.6,39.3 130.1,41.8 127.6,45.4 127.2,41.1 125.4,37.1 129.3,39.0" fill="#2f7a2c"/><polygon points="96.0,71.9 93.8,73.1 92.2,74.9 92.3,72.5 91.5,70.1 93.6,71.4" fill="#3d8a34"/><polygon points="100.9,76.2 99.0,74.8 96.6,74.0 98.9,73.1 100.7,71.4 100.4,73.8" fill="#2a6a28"/><polygon points="76.3,50.8 79.7,50.1 82.7,48.3 81.6,51.6 81.6,55.0 79.3,52.4" fill="#6cb04c"/><polygon points="121.6,39.9 122.0,36.5 121.2,33.2 123.9,35.2 127.2,36.3 124.1,37.6" fill="#1f5420"/><polygon points="109.0,45.1 110.3,42.2 110.6,39.0 112.5,41.6 115.1,43.4 111.9,43.7" fill="#3d8a34"/><polygon points="97.0,47.6 94.4,50.0 92.8,53.2 92.0,49.8 90.1,46.8 93.5,47.8" fill="#86c062"/><polygon points="129.4,75.3 128.7,72.5 127.2,70.2 129.9,71.0 132.7,70.8 130.7,72.8" fill="#6cb04c"/><polygon points="79.7,51.7 81.5,55.1 84.3,57.7 80.5,57.5 76.8,58.7 78.8,55.5" fill="#6cb04c"/><polygon points="85.5,53.3 88.0,52.0 89.8,49.9 89.8,52.7 90.6,55.4 88.2,53.9" fill="#4f9a3a"/><polygon points="102.7,73.3 106.9,72.4 110.6,70.1 109.3,74.2 109.5,78.6 106.5,75.4" fill="#3d8a34"/><polygon points="140.7,31.6 139.9,34.6 140.1,37.7 137.9,35.5 135.1,34.2 138.1,33.4" fill="#3d8a34"/><polygon points="125.2,39.3 122.9,36.0 119.6,33.6 123.7,33.3 127.4,31.6 125.6,35.3" fill="#1f5420"/><polygon points="79.0,54.9 77.9,57.0 77.6,59.3 76.3,57.3 74.5,55.9 76.8,55.8" fill="#1f5420"/><polygon points="105.1,74.0 101.5,75.0 98.5,77.2 99.4,73.5 99.0,69.8 101.7,72.4" fill="#6cb04c"/><polygon points="95.5,46.5 97.7,48.8 100.5,50.2 97.4,51.0 94.8,52.7 95.7,49.7" fill="#86c062"/><polygon points="76.7,58.2 77.9,55.5 78.0,52.6 79.8,54.9 82.2,56.5 79.3,56.9" fill="#2a6a28"/><polygon points="110.7,39.8 112.4,38.1 113.5,36.0 114.1,38.3 115.4,40.3 113.1,39.6" fill="#6cb04c"/><polygon points="81.0,32.4 84.7,31.9 88.1,30.2 86.7,33.7 86.5,37.5 84.2,34.5" fill="#6cb04c"/><polygon points="117.1,73.4 120.2,70.8 122.1,67.2 122.9,71.2 125.0,74.6 121.2,73.4" fill="#4f9a3a"/><polygon points="118.5,42.4 116.4,38.8 113.3,36.1 117.5,36.2 121.4,34.8 119.3,38.4" fill="#1f5420"/><polygon points="83.0,43.2 82.7,46.6 83.5,50.0 80.7,47.9 77.4,47.0 80.6,45.6" fill="#2a6a28"/><polygon points="110.2,37.8 111.3,35.8 111.6,33.6 112.8,35.5 114.6,36.9 112.3,37.0" fill="#6cb04c"/><polygon points="102.0,81.7 103.6,78.9 104.2,75.7 105.8,78.5 108.3,80.6 105.1,80.6" fill="#4f9a3a"/><polygon points="105.1,56.6 104.9,53.1 103.5,49.8 106.7,51.4 110.3,51.8 107.3,53.8" fill="#86c062"/><polygon points="95.2,64.5 91.4,64.3 87.7,65.4 89.8,62.1 90.7,58.4 92.4,61.8" fill="#2a6a28"/><polygon points="134.1,68.0 131.3,68.8 129.0,70.6 129.6,67.7 129.3,64.9 131.4,66.8" fill="#2f7a2c"/><polygon points="101.6,48.3 104.9,50.8 108.9,52.1 105.0,53.7 102.0,56.5 102.5,52.3" fill="#2f7a2c"/><polygon points="116.1,77.2 114.4,75.1 112.2,73.6 114.8,73.3 117.2,72.1 116.2,74.5" fill="#6cb04c"/><polygon points="101.6,33.9 99.6,36.8 98.6,40.3 97.1,37.1 94.5,34.5 98.1,34.8" fill="#2a6a28"/><polygon points="106.6,48.0 104.8,44.4 101.9,41.7 105.9,41.9 109.8,40.8 107.6,44.1" fill="#4f9a3a"/><polygon points="101.3,76.4 102.1,73.1 101.7,69.7 104.2,72.0 107.2,73.4 104.0,74.4" fill="#6cb04c"/><polygon points="101.6,81.0 101.5,78.3 100.5,75.9 102.9,77.1 105.5,77.4 103.3,78.9" fill="#3d8a34"/><polygon points="128.5,38.0 131.8,37.2 134.6,35.3 133.6,38.5 133.8,41.9 131.5,39.5" fill="#3d8a34"/><polygon points="92.8,69.3 94.2,72.5 96.7,75.0 93.2,74.7 89.8,75.5 91.8,72.7" fill="#86c062"/><polygon points="83.2,32.3 86.0,33.7 89.1,34.0 86.5,35.8 84.6,38.3 84.4,35.2" fill="#6cb04c"/><polygon points="107.8,71.8 105.9,73.6 104.7,75.9 104.1,73.4 102.7,71.2 105.2,72.0" fill="#2a6a28"/><polygon points="78.6,79.1 78.8,76.0 77.9,73.0 80.5,74.7 83.5,75.5 80.8,76.8" fill="#4f9a3a"/><polygon points="121.3,44.9 123.2,46.8 125.7,48.0 123.0,48.7 120.8,50.2 121.5,47.6" fill="#2f7a2c"/><polygon points="122.4,46.4 120.2,44.4 117.4,43.1 120.3,42.3 122.8,40.5 122.1,43.4" fill="#4f9a3a"/><polygon points="88.3,40.4 90.0,43.8 92.7,46.3 89.0,46.1 85.4,47.2 87.4,44.1" fill="#6cb04c"/><polygon points="86.0,49.5 85.0,47.1 83.3,45.2 85.9,45.6 88.4,45.0 86.8,47.1" fill="#4f9a3a"/><polygon points="119.3,46.5 117.7,43.2 115.0,40.7 118.7,40.9 122.2,39.9 120.2,42.9" fill="#3d8a34"/><polygon points="114.6,55.2 117.9,56.1 121.4,55.8 119.0,58.3 117.5,61.5 116.6,58.1" fill="#1f5420"/><polygon points="111.5,52.6 113.8,52.3 115.9,51.3 115.0,53.4 114.9,55.8 113.5,53.9" fill="#2f7a2c"/><polygon points="105.0,31.1 103.6,33.3 103.0,35.8 101.8,33.5 99.9,31.7 102.5,31.8" fill="#3d8a34"/><polygon points="115.4,46.4 116.4,42.5 116.0,38.6 118.8,41.3 122.5,43.0 118.6,44.1" fill="#1f5420"/><polygon points="136.1,56.6 137.8,54.7 138.7,52.2 139.6,54.7 141.2,56.7 138.7,56.2" fill="#86c062"/><polygon points="126.7,38.3 129.5,37.8 132.0,36.4 131.0,39.1 131.0,42.0 129.2,39.8" fill="#6cb04c"/><polygon points="132.4,53.1 130.2,55.6 128.9,58.8 127.8,55.6 125.7,52.9 129.0,53.6" fill="#2f7a2c"/><polygon points="98.1,37.2 96.3,34.9 93.8,33.2 96.8,32.9 99.4,31.5 98.3,34.3" fill="#86c062"/><polygon points="74.9,66.6 78.3,67.2 81.6,66.6 79.4,69.2 78.3,72.4 77.1,69.2" fill="#6cb04c"/><polygon points="119.1,43.0 118.6,45.9 119.0,48.7 116.8,46.8 114.1,45.8 116.9,44.8" fill="#1f5420"/><polygon points="119.8,45.1 122.0,45.1 124.1,44.4 122.9,46.3 122.5,48.5 121.4,46.5" fill="#86c062"/><polygon points="123.2,55.7 122.1,52.9 120.2,50.6 123.2,51.1 126.1,50.6 124.2,52.9" fill="#4f9a3a"/><polygon points="117.2,62.1 117.5,59.1 116.8,56.1 119.3,57.9 122.2,58.8 119.4,60.0" fill="#2a6a28"/><polygon points="79.9,78.2 81.7,75.4 82.3,72.3 83.9,75.1 86.3,77.3 83.0,77.2" fill="#3d8a34"/><polygon points="84.5,47.7 86.2,50.7 88.8,53.0 85.4,53.0 82.1,54.1 83.9,51.1" fill="#2a6a28"/><polygon points="114.1,68.2 112.1,66.6 109.7,65.7 112.1,64.8 114.1,63.2 113.7,65.7" fill="#86c062"/><polygon points="74.2,56.1 78.5,56.1 82.5,54.7 80.3,58.4 79.6,62.5 77.5,58.9" fill="#2f7a2c"/><polygon points="91.7,48.6 91.9,45.3 90.9,42.2 93.6,44.0 96.8,44.7 93.9,46.2" fill="#86c062"/><polygon points="131.7,41.1 133.4,37.2 133.7,33.0 136.3,36.4 139.8,38.8 135.6,39.3" fill="#1f5420"/><polygon points="78.1,47.9 81.8,48.3 85.3,47.3 83.2,50.4 82.2,53.9 80.7,50.6" fill="#6cb04c"/><polygon points="107.0,38.6 107.3,41.3 108.4,43.7 106.0,42.6 103.3,42.4 105.5,40.8" fill="#6cb04c"/><polygon points="123.0,77.4 120.8,76.2 118.4,75.9 120.5,74.6 122.0,72.7 122.1,75.2" fill="#86c062"/><polygon points="76.0,82.2 76.4,79.3 75.8,76.4 78.1,78.2 80.9,79.1 78.2,80.2" fill="#2a6a28"/><polygon points="127.2,39.8 123.8,41.2 121.1,43.6 121.6,40.0 120.9,36.4 123.8,38.6" fill="#6cb04c"/><polygon points="77.3,75.1 80.3,74.1 82.8,72.1 82.2,75.2 82.6,78.4 80.3,76.3" fill="#1f5420"/><polygon points="116.8,56.9 116.5,52.9 114.9,49.3 118.5,51.0 122.4,51.5 119.1,53.7" fill="#6cb04c"/><polygon points="91.6,77.8 89.7,76.1 87.4,75.2 89.8,74.4 91.7,72.8 91.3,75.3" fill="#2a6a28"/><polygon points="114.3,37.8 116.1,41.2 119.0,43.8 115.1,43.7 111.4,44.8 113.5,41.6" fill="#3d8a34"/><polygon points="89.9,66.6 86.3,66.9 83.0,68.4 84.5,65.1 84.9,61.5 86.9,64.5" fill="#6cb04c"/><polygon points="112.8,71.0 108.9,69.4 104.7,69.2 108.1,66.7 110.3,63.1 110.9,67.3" fill="#4f9a3a"/><polygon points="86.4,75.2 87.3,77.3 89.0,79.0 86.6,78.8 84.4,79.4 85.7,77.4" fill="#1f5420"/><polygon points="81.5,54.0 83.2,57.2 85.9,59.7 82.2,59.6 78.7,60.6 80.7,57.5" fill="#3d8a34"/><polygon points="91.1,38.2 89.0,37.1 86.7,36.6 88.7,35.4 90.3,33.6 90.3,36.0" fill="#86c062"/><polygon points="121.8,48.4 124.8,49.5 128.0,49.5 125.6,51.6 124.0,54.3 123.4,51.2" fill="#86c062"/><polygon points="88.6,63.4 90.2,64.9 92.1,65.9 90.0,66.4 88.2,67.7 88.8,65.6" fill="#6cb04c"/><path d="M78 -2h61v10c-20 4-44 4-58-2z" fill="#4a9038"/><polygon points="102.1,1.4 102.4,-0.9 101.9,-3.2 103.8,-1.8 106.0,-1.0 103.8,-0.1" fill="#86c062"/><polygon points="140.8,0.3 137.8,1.2 135.2,3.0 136.0,-0.1 135.7,-3.2 138.0,-1.0" fill="#1f5420"/><polygon points="111.2,11.8 109.7,9.1 107.5,7.1 110.5,7.2 113.3,6.2 111.8,8.8" fill="#86c062"/><polygon points="107.1,9.3 105.2,7.8 102.9,7.2 105.1,6.2 106.8,4.6 106.5,6.9" fill="#4f9a3a"/><polygon points="98.1,1.8 101.6,1.6 104.8,0.2 103.3,3.3 102.9,6.8 100.9,3.9" fill="#2a6a28"/><polygon points="112.7,0.8 114.5,1.2 116.2,0.9 115.1,2.3 114.4,3.9 113.8,2.2" fill="#2a6a28"/><polygon points="91.8,0.5 92.6,3.1 94.1,5.2 91.5,4.6 88.9,4.9 90.7,2.9" fill="#86c062"/><polygon points="111.7,3.8 114.7,4.4 117.7,3.9 115.7,6.2 114.6,9.1 113.6,6.2" fill="#3d8a34"/><polygon points="114.5,7.0 116.4,6.3 118.0,5.0 117.7,7.0 118.0,9.0 116.4,7.7" fill="#1f5420"/><polygon points="86.0,10.8 83.6,9.3 80.9,8.6 83.4,7.4 85.3,5.4 85.2,8.1" fill="#3d8a34"/><polygon points="107.7,4.4 108.6,1.9 108.7,-0.8 110.4,1.3 112.7,2.7 110.0,3.1" fill="#4f9a3a"/><polygon points="139.9,-2.6 140.0,0.0 140.9,2.5 138.6,1.2 136.0,0.8 138.3,-0.6" fill="#1f5420"/><polygon points="121.2,7.0 122.7,6.1 123.9,4.8 123.9,6.6 124.5,8.3 122.9,7.4" fill="#2a6a28"/><polygon points="81.9,7.2 78.6,7.4 75.5,8.6 77.0,5.7 77.5,2.4 79.2,5.2" fill="#2a6a28"/><polygon points="119.7,-0.9 120.2,1.7 121.4,3.9 119.0,3.1 116.4,3.0 118.4,1.4" fill="#6cb04c"/><polygon points="130.0,1.4 127.7,2.9 126.0,5.1 125.8,2.3 124.8,-0.2 127.2,1.0" fill="#1f5420"/><polygon points="82.0,10.6 80.3,9.4 78.3,8.8 80.2,7.9 81.8,6.5 81.5,8.6" fill="#2a6a28"/><polygon points="99.5,4.0 102.2,5.3 105.2,5.7 102.7,7.4 100.9,9.8 100.7,6.8" fill="#4f9a3a"/><polygon points="86.1,5.9 83.5,6.7 81.4,8.3 82.0,5.7 81.6,3.1 83.6,4.8" fill="#3d8a34"/><polygon points="80.2,2.4 82.8,4.6 86.0,5.8 82.8,6.9 80.2,9.1 80.8,5.8" fill="#1f5420"/><polygon points="96.0,5.1 98.4,5.8 100.9,5.7 99.1,7.4 98.0,9.7 97.4,7.2" fill="#6cb04c"/><polygon points="80.5,-1.3 80.9,1.7 82.3,4.4 79.5,3.2 76.4,3.1 78.9,1.2" fill="#6cb04c"/><polygon points="123.5,-1.1 124.3,0.6 125.6,2.1 123.6,1.8 121.8,2.2 122.9,0.7" fill="#6cb04c"/><polygon points="134.4,2.4 136.5,2.9 138.6,2.8 137.0,4.3 136.1,6.2 135.6,4.1" fill="#6cb04c"/><polygon points="118.6,11.1 117.8,9.4 116.6,8.0 118.4,8.2 120.2,7.8 119.1,9.3" fill="#1f5420"/><polygon points="86.8,0.7 88.5,-0.6 89.6,-2.3 89.9,-0.3 90.8,1.6 88.9,0.8" fill="#3d8a34"/><polygon points="101.5,4.5 103.4,2.6 104.6,0.1 105.3,2.7 106.9,5.0 104.2,4.3" fill="#1f5420"/><polygon points="83.3,4.3 81.5,6.9 80.7,9.8 79.4,7.0 77.3,4.8 80.3,5.1" fill="#6cb04c"/><polygon points="102.1,2.0 102.6,3.9 103.7,5.6 101.8,5.1 99.8,5.2 101.2,3.8" fill="#4f9a3a"/><polygon points="80.3,-0.5 81.1,2.6 82.9,5.3 79.8,4.4 76.5,4.7 78.8,2.4" fill="#3d8a34"/><polygon points="104.9,0.8 107.4,1.8 110.0,1.8 108.0,3.5 106.6,5.7 106.2,3.1" fill="#1f5420"/><polygon points="109.6,-2.0 107.9,0.1 107.0,2.7 106.0,0.1 104.2,-1.9 106.9,-1.5" fill="#4f9a3a"/><polygon points="92.8,10.0 89.7,9.2 86.6,9.4 88.8,7.2 90.2,4.3 91.0,7.4" fill="#86c062"/><polygon points="130.0,5.1 127.6,4.0 124.9,3.8 127.0,2.2 128.5,0.0 128.8,2.7" fill="#2a6a28"/><polygon points="116.1,10.3 114.0,9.3 111.8,9.1 113.6,7.8 115.0,6.0 115.2,8.3" fill="#2f7a2c"/><polygon points="104.9,6.9 104.6,8.9 105.0,10.9 103.4,9.6 101.4,9.0 103.3,8.2" fill="#86c062"/><polygon points="103.7,5.0 102.9,2.6 101.3,0.7 103.8,1.1 106.3,0.8 104.6,2.7" fill="#2a6a28"/><polygon points="79.7,11.1 78.4,9.1 76.6,7.7 78.9,7.6 81.0,6.7 80.0,8.8" fill="#1f5420"/><polygon points="85.5,3.4 84.7,1.4 83.3,-0.1 85.4,0.1 87.4,-0.3 86.1,1.4" fill="#1f5420"/><polygon points="90.3,10.5 90.7,8.4 90.3,6.3 91.9,7.6 94.0,8.4 91.9,9.1" fill="#2a6a28"/>
        </g></g></svg>
<div class="a" style="left:192px;top:846px;width:44px;height:99px;background:#FBEEC9;border:1px solid #3a2a1a;box-sizing:border-box;"></div>
<svg class="a" style="left:0;top:0" width="300" height="990"><text transform="translate(196.2 864.4) scale(0.965 1)" font-size="6.2" fill="#6a5648">Sodium nitrate</text></svg>
<svg class="a" style="left:0;top:0" width="300" height="990"><text transform="translate(200.5 881.0) scale(0.834 1)" font-size="4.2" fill="#1a1208" font-weight="bold" stroke="#1a1208" stroke-width=".1">Use to keep meat</text><text transform="translate(200.5 887.0) scale(0.762 1)" font-size="4.2" fill="#1a1208" font-weight="bold" stroke="#1a1208" stroke-width=".1">Acts as a preservative</text><text transform="translate(200.5 892.0) scale(0.752 1)" font-size="4.2" fill="#1a1208" font-weight="bold" stroke="#1a1208" stroke-width=".1">to prevent botulism in</text><text transform="translate(200.5 897.0) scale(0.771 1)" font-size="4.2" fill="#1a1208" font-weight="bold" stroke="#1a1208" stroke-width=".1">like hotdogs, sausage,</text><text transform="translate(200.5 901.7) scale(0.858 1)" font-size="4.2" fill="#1a1208" font-weight="bold" stroke="#1a1208" stroke-width=".1">etc.</text><text transform="translate(200.5 908.6) scale(0.809 1)" font-size="4.2" fill="#1a1208" font-weight="bold" stroke="#1a1208" stroke-width=".1">Prevent growth of</text><text transform="translate(200.5 914.0) scale(0.799 1)" font-size="4.2" fill="#1a1208" font-weight="bold" stroke="#1a1208" stroke-width=".1">microbiologic</text><text transform="translate(200.5 918.7) scale(0.946 1)" font-size="4.2" fill="#1a1208" font-weight="bold" stroke="#1a1208" stroke-width=".1">bacteria</text><text transform="translate(200.5 924.7) scale(0.779 1)" font-size="4.2" fill="#1a1208" font-weight="bold" stroke="#1a1208" stroke-width=".1">Affect red color of</text><text transform="translate(200.5 929.7) scale(0.756 1)" font-size="4.2" fill="#1a1208" font-weight="bold" stroke="#1a1208" stroke-width=".1">meat</text></svg>
<div class="a" style="left:196.5px;top:879.3px;width:1px;height:1px;background:#2a1c10;"></div>
<div class="a" style="left:196.5px;top:885.3px;width:1px;height:1px;background:#2a1c10;"></div>
<div class="a" style="left:196.5px;top:906.9px;width:1px;height:1px;background:#2a1c10;"></div>
<div class="a" style="left:196.5px;top:923.0px;width:1px;height:1px;background:#2a1c10;"></div>
<div class="a" style="left:43px;top:975.5px;width:199.5px;height:14.5px;background:#fff;border:1px solid #c2c2c2;border-bottom:none;box-sizing:border-box;"></div>
<svg class="a" style="left:49px;top:981px;" width="137" height="9" viewBox="0 0 137 9"><defs><filter id="b6"><feGaussianBlur stdDeviation=".6"/></filter><clipPath id="c6"><rect width="137" height="9"/></clipPath></defs><g clip-path="url(#c6)"><g filter="url(#b6)"><rect x="-2" y="-2" width="141" height="14" fill="#b9563a"/><path d="M-2 -2h16l-3 13H-2z" fill="#9ab84a"/><path d="M12 -2h40l-6 13H10z" fill="#e6b088"/><path d="M22 2h12v10H20z" fill="#f0c8a8"/><path d="M50 -2h34l-2 13H46z" fill="#8a4a3c"/><path d="M62 -2h10v6H60z" fill="#5a3a4a"/><path d="M86 -2h53v13H82z" fill="#d9602c"/><path d="M100 1h14v4H98zM120 3h19v4h-21z" fill="#e88a4a"/></g></g></svg>
<div class="a" style="left:192px;top:983.5px;width:44px;height:6.5px;background:#FBEEC9;border:1px solid #3a2a1a;border-bottom:none;box-sizing:border-box;"></div>
<svg class="a" style="left:524px;top:310px" width="1175" height="662"><use href="#s4" width="1175" height="662"/></svg>
<div class="a" style="left:524px;top:310px;width:1175px;height:662px;border:1px solid #bdbdbd;box-sizing:border-box;"></div>
<div class="a" style="left:0px;top:0px;width:1920px;height:85px;background:#B7472A;"></div>
<div class="a" style="left:83px;top:43px;width:72px;height:42px;background:#f3f3f3;"></div>
<div class="t" style="left:29.25px;top:52.60px;font-size:15px;color:#ffffff;letter-spacing:-0.557px;">File</div>
<div class="t" style="left:172.00px;top:52.60px;font-size:15px;color:#ffffff;letter-spacing:-0.403px;">Insert</div>
<div class="t" style="left:241.25px;top:52.60px;font-size:15px;color:#ffffff;letter-spacing:-0.238px;">Design</div>
<div class="t" style="left:320.00px;top:52.60px;font-size:15px;color:#ffffff;letter-spacing:-0.280px;">Transitions</div>
<div class="t" style="left:423.00px;top:52.60px;font-size:15px;color:#ffffff;letter-spacing:0.089px;">Animations</div>
<div class="t" style="left:531.00px;top:52.60px;font-size:15px;color:#ffffff;letter-spacing:-0.227px;">Slide Show</div>
<div class="t" style="left:637.00px;top:52.60px;font-size:15px;color:#ffffff;letter-spacing:-0.536px;">Review</div>
<div class="t" style="left:717.00px;top:52.60px;font-size:15px;color:#ffffff;letter-spacing:-0.247px;">View</div>
<div class="t" style="left:782.50px;top:52.60px;font-size:15px;color:#ffffff;letter-spacing:0.050px;">Help</div>
<div class="t" style="left:847.00px;top:52.60px;font-size:15px;color:#ffffff;letter-spacing:-0.210px;">EndNote X9</div>
<div class="t" style="left:988.50px;top:52.60px;font-size:15px;color:#ffffff;letter-spacing:0.112px;">Tell me what you want to do</div>
<div class="t" style="left:98.25px;top:52.60px;font-size:15px;color:#B7472A;letter-spacing:0.162px;">Home</div>
<div class="t" style="left:1790.00px;top:50.60px;font-size:15px;color:#ffffff;letter-spacing:-0.882px;">Share</div>
<div class="t" style="left:865.00px;top:8.10px;font-size:15px;color:#ffffff;letter-spacing:-0.273px;">pereservatives</div>
<div class="t" style="left:967.00px;top:8.10px;font-size:15px;color:#ffffff;">-</div>
<div class="t" style="left:981.00px;top:8.10px;font-size:15px;color:#ffffff;letter-spacing:-0.467px;">PowerPoint</div>
<div class="t" style="left:1575.00px;top:8.10px;font-size:15px;color:#ffffff;letter-spacing:0.120px;">raha jojo</div>
<svg class="a" style="left:1647px;top:4px;" width="30" height="30" viewBox="0 0 30 30"><defs><linearGradient id="avg" x1="0" y1="0" x2="0" y2="1"><stop offset="0" stop-color="#84999a"/><stop offset="0.5" stop-color="#5f7474"/><stop offset="1" stop-color="#34444a"/></linearGradient><clipPath id="avc"><rect width="30" height="30"/></clipPath><filter id="avb"><feGaussianBlur stdDeviation=".5"/></filter></defs>
    <g clip-path="url(#avc)"><g filter="url(#avb)"><rect x="-2" y="-2" width="34" height="34" fill="url(#avg)"/>
    <rect x="2.500" y="-2" width="2" height="34" fill="#1d2728" opacity=".65"/><rect x="8" y="-2" width="3" height="34" fill="#172021" opacity=".7"/>
    <rect x="14" y="-2" width="1.500" height="34" fill="#243031" opacity=".55"/><rect x="19" y="-2" width="2.500" height="34" fill="#151d1e" opacity=".65"/>
    <rect x="25.500" y="-2" width="2" height="34" fill="#1f2a2b" opacity=".6"/><rect x="-2" y="23" width="34" height="9" fill="#10181a" opacity=".3"/>
    <rect x="11" y="1" width="3" height="15" fill="#a8bcba" opacity=".35"/><rect x="21.500" y="2" width="3.500" height="13" fill="#a8bcba" opacity=".3"/></g><circle cx="18.7" cy="22.3" r="0.6" fill="#c9d6d4" opacity="0.68"/><circle cx="22.2" cy="27.7" r="0.3" fill="#c9d6d4" opacity="0.49"/><circle cx="28.3" cy="19.5" r="0.7" fill="#c9d6d4" opacity="0.35"/><circle cx="14.1" cy="7.4" r="0.5" fill="#c9d6d4" opacity="0.53"/><circle cx="0.4" cy="6.5" r="0.4" fill="#c9d6d4" opacity="0.67"/><circle cx="23.0" cy="4.8" r="0.6" fill="#c9d6d4" opacity="0.36"/><circle cx="18.5" cy="3.8" r="0.3" fill="#c9d6d4" opacity="0.65"/><circle cx="6.3" cy="6.5" r="0.7" fill="#c9d6d4" opacity="0.65"/><circle cx="8.7" cy="28.8" r="0.5" fill="#c9d6d4" opacity="0.57"/><circle cx="6.1" cy="28.2" r="0.6" fill="#c9d6d4" opacity="0.69"/><circle cx="26.8" cy="9.0" r="0.4" fill="#c9d6d4" opacity="0.37"/><circle cx="4.4" cy="2.0" r="0.4" fill="#c9d6d4" opacity="0.54"/><circle cx="0.1" cy="20.3" r="0.4" fill="#c9d6d4" opacity="0.42"/><circle cx="24.6" cy="14.4" r="0.4" fill="#c9d6d4" opacity="0.49"/><circle cx="21.1" cy="1.7" r="0.7" fill="#c9d6d4" opacity="0.31"/><circle cx="22.5" cy="25.3" r="0.3" fill="#c9d6d4" opacity="0.62"/><circle cx="11.0" cy="17.4" r="0.3" fill="#c9d6d4" opacity="0.32"/><circle cx="5.4" cy="28.7" r="0.4" fill="#c9d6d4" opacity="0.60"/><circle cx="27.9" cy="28.3" r="0.4" fill="#c9d6d4" opacity="0.44"/><circle cx="15.7" cy="23.3" r="0.3" fill="#c9d6d4" opacity="0.60"/><circle cx="23.9" cy="25.8" r="0.3" fill="#c9d6d4" opacity="0.68"/><circle cx="2.7" cy="10.2" r="0.5" fill="#c9d6d4" opacity="0.67"/><circle cx="10.2" cy="27.7" r="0.5" fill="#c9d6d4" opacity="0.42"/><circle cx="9.5" cy="5.3" r="0.3" fill="#c9d6d4" opacity="0.36"/><circle cx="20.7" cy="29.9" r="0.4" fill="#c9d6d4" opacity="0.32"/><circle cx="29.6" cy="16.0" r="0.5" fill="#c9d6d4" opacity="0.39"/><circle cx="17.8" cy="24.8" r="0.5" fill="#c9d6d4" opacity="0.47"/><circle cx="1.7" cy="27.5" r="0.3" fill="#c9d6d4" opacity="0.50"/><circle cx="25.2" cy="3.9" r="0.6" fill="#c9d6d4" opacity="0.68"/><circle cx="18.9" cy="23.6" r="0.3" fill="#c9d6d4" opacity="0.47"/><circle cx="4.5" cy="25.3" r="0.4" fill="#c9d6d4" opacity="0.48"/><circle cx="30.0" cy="25.6" r="0.7" fill="#c9d6d4" opacity="0.48"/><circle cx="14.6" cy="21.9" r="0.5" fill="#c9d6d4" opacity="0.42"/><circle cx="12.1" cy="4.4" r="0.5" fill="#c9d6d4" opacity="0.70"/><circle cx="28.8" cy="18.8" r="0.5" fill="#c9d6d4" opacity="0.44"/><circle cx="2.7" cy="8.2" r="0.6" fill="#c9d6d4" opacity="0.65"/><circle cx="10.8" cy="23.6" r="0.6" fill="#c9d6d4" opacity="0.58"/><circle cx="19.9" cy="22.8" r="0.4" fill="#c9d6d4" opacity="0.58"/><circle cx="8.4" cy="14.6" r="0.6" fill="#c9d6d4" opacity="0.58"/><circle cx="8.8" cy="28.4" r="0.6" fill="#c9d6d4" opacity="0.53"/><circle cx="0.3" cy="16.4" r="0.4" fill="#c9d6d4" opacity="0.57"/><circle cx="13.9" cy="24.5" r="0.6" fill="#c9d6d4" opacity="0.62"/><circle cx="10.4" cy="19.3" r="0.6" fill="#c9d6d4" opacity="0.63"/><circle cx="10.5" cy="25.3" r="0.6" fill="#c9d6d4" opacity="0.58"/><circle cx="29.3" cy="28.7" r="0.5" fill="#c9d6d4" opacity="0.51"/></g></svg>
<svg class="a" style="left:31.5px;top:12.8px;" width="16.6" height="16.4" viewBox="0 0 16.6 16.4"><rect x="0.85" y="0.85" width="14.9" height="14.7" rx="1" fill="none" stroke="#fff" stroke-width="1.7"/><rect x="0.85" y="9.4" width="14.9" height="6.2" fill="#fff"/><path d="M4.6 16.4v-5h7.4v5h-1.8v-3.300h-3.800v3.300z" fill="#B7472A"/></svg>
<svg class="a" style="left:89px;top:12px;" width="20" height="18" viewBox="0 0 20 20"><path d="M3.500 7.500h8.500a5 5 0 0 1 3 9l-3.500 2.500" fill="none" stroke="#d47d63" stroke-width="2.800"/><path d="M8.500 2L2.500 7.500 8.500 13" fill="none" stroke="#d47d63" stroke-width="2.800"/></svg>
<svg class="a" style="left:149px;top:11px;" width="19" height="19" viewBox="0 0 20 20"><path d="M13.5 4.6a7 7 0 1 1-7.6 0.4" fill="none" stroke="#d47d63" stroke-width="2.900"/><path d="M9 1.500h6v6" fill="none" stroke="#d47d63" stroke-width="2.800"/></svg>
<svg class="a" style="left:206px;top:11px;" width="22" height="20" viewBox="0 0 22 20"><path d="M1 1.5h19" stroke="#fff" stroke-width="1.6"/><path d="M2.5 2v10.5h9" fill="none" stroke="#fff" stroke-width="1.4"/><path d="M5.5 5h6M5.5 7.5h4" stroke="#fff" stroke-width="1.2"/><circle cx="15" cy="9.5" r="5" fill="#B7472A" stroke="#fff" stroke-width="1.4"/><path d="M13.5 7l4 2.5-4 2.5z" fill="#fff"/><path d="M10 13v3M6.5 18.5h7l-1.5-2.5h-4z" fill="#fff" stroke="#fff" stroke-width="1"/></svg>
<svg class="a" style="left:269px;top:16px;" width="8" height="8" viewBox="0 0 8 8"><rect x="0.5" y="0" width="7" height="1.3" fill="#fff"/><path d="M0.5 3.3h7L4 7z" fill="#fff"/></svg>
<svg class="a" style="left:957px;top:53px;" width="18" height="24" viewBox="0 0 18 24"><path d="M9 1.5a7 7 0 0 0-4 12.7c.8.8 1.2 1.6 1.2 2.8h5.6c0-1.2.4-2 1.2-2.8A7 7 0 0 0 9 1.5z" fill="none" stroke="#fff" stroke-width="1.5"/><path d="M6.2 19.3h5.6M6.8 21.6h4.4" stroke="#fff" stroke-width="1.4"/></svg>
<svg class="a" style="left:1766px;top:52px;" width="22" height="22" viewBox="0 0 22 22"><circle cx="9.5" cy="6.5" r="4.6" fill="none" stroke="#fff" stroke-width="1.4"/><path d="M1.5 20c.5-5.5 3.8-8.3 8-8.3 1.8 0 3.3.5 4.5 1.4" fill="none" stroke="#fff" stroke-width="1.4"/><path d="M15.5 13v8M11.5 17h8" stroke="#fff" stroke-width="1.4"/></svg>
<svg class="a" style="left:1875px;top:51px;" width="25" height="25" viewBox="0 0 25 25"><circle cx="12.5" cy="12.5" r="12" fill="#f7c81e"/><ellipse cx="8.6" cy="9" rx="1.6" ry="2.4" fill="#40351a"/><ellipse cx="16.4" cy="9" rx="1.6" ry="2.4" fill="#40351a"/><path d="M5.5 14.5c2 5.5 12 5.5 14 0" fill="none" stroke="#40351a" stroke-width="1.7" stroke-linecap="round"/></svg>
<svg class="a" style="left:1711px;top:12px;" width="18" height="14" viewBox="0 0 18 14"><rect x="0.8" y="0.8" width="16.4" height="12.4" fill="none" stroke="#fff" stroke-width="1.5"/><path d="M1 3.6h16" stroke="#fff" stroke-width="1.3"/><path d="M9 11.5V6M6.3 8.4L9 5.7l2.7 2.7" fill="none" stroke="#fff" stroke-width="1.4"/></svg>
<div class="a" style="left:1770px;top:19px;width:14px;height:1.6px;background:#fff;"></div>
<svg class="a" style="left:1827px;top:12px;" width="14" height="14" viewBox="0 0 14 14"><rect x="0.8" y="3.3" width="9.8" height="9.8" fill="none" stroke="#fff" stroke-width="1.4"/><path d="M3.3 3.3V0.8h9.9v9.9h-2.6" fill="none" stroke="#fff" stroke-width="1.4"/></svg>
<svg class="a" style="left:1884px;top:12px;" width="14" height="14" viewBox="0 0 14 14"><path d="M1 1l12 12M13 1L1 13" stroke="#fff" stroke-width="1.5"/></svg>
<div class="a" style="left:0px;top:85px;width:1920px;height:145px;background:#f3f3f3;"></div>
<div class="a" style="left:168px;top:89px;width:1px;height:137px;background:#c9c9c9;"></div>
<div class="a" style="left:375.5px;top:89px;width:1px;height:137px;background:#c9c9c9;"></div>
<div class="a" style="left:816px;top:89px;width:1px;height:137px;background:#c9c9c9;"></div>
<div class="a" style="left:1255px;top:89px;width:1px;height:137px;background:#c9c9c9;"></div>
<div class="a" style="left:1624.5px;top:89px;width:1px;height:137px;background:#c9c9c9;"></div>
<div class="a" style="left:1785px;top:89px;width:1px;height:137px;background:#c9c9c9;"></div>
<svg class="a" style="left:31.5px;top:99px;" width="42" height="45" viewBox="0 0 42 45"><rect x="0" y="5" width="33" height="37" fill="#eac282"/>
    <path d="M7 1.5h19v6.5H7z" fill="#6d6d6d"/><rect x="14" y="0" width="5" height="4" rx="1.5" fill="none" stroke="#6d6d6d" stroke-width="1.6"/>
    <path d="M21 18h13l7 7v19H21z" fill="#fff" stroke="#777" stroke-width="1.2"/><path d="M34 18v7h7" fill="none" stroke="#777" stroke-width="1.2"/></svg>
<div class="a" style="left:21px;top:148px;width:56px;height:1px;background:#d4d4d4;"></div>
<div class="t" style="left:32.30px;top:149.80px;font-size:15px;color:#333333;letter-spacing:-1.264px;">Paste</div>
<svg class="a" style="left:46.0px;top:179.8px;" width="6" height="3.5" viewBox="0 0 6 3.5"><path d="M0 0H6L3.0 3.5Z" fill="#505050"/></svg>
<svg class="a" style="left:98px;top:100.5px;" width="20" height="22" viewBox="0 0 20 22"><path d="M4.5 1l8 14M15.5 1l-8 14" stroke="#a6a6a6" stroke-width="1.8" fill="none"/><circle cx="4.2" cy="18" r="3.2" fill="none" stroke="#a6a6a6" stroke-width="1.6"/><circle cx="15.8" cy="18" r="3.2" fill="none" stroke="#a6a6a6" stroke-width="1.6"/></svg>
<svg class="a" style="left:95.8px;top:138px;" width="21" height="22.5" viewBox="0 0 21 22.5"><path d="M0.7 0.7h7l3.5 3.5v9.5H0.7z" fill="#f3f3f3" stroke="#b4b4b4" stroke-width="1.1"/><path d="M2.5 5h5M2.5 7.5h6M2.5 10h6" stroke="#b4b4b4" stroke-width="1"/>
    <path d="M9.2 8.2h7l3.5 3.5v9.5H9.2z" fill="#f3f3f3" stroke="#b4b4b4" stroke-width="1.1"/><path d="M11 13h5M11 15.5h6.5M11 18h6.5" stroke="#b4b4b4" stroke-width="1"/></svg>
<svg class="a" style="left:134.5px;top:147.2px;" width="6" height="3.5" viewBox="0 0 6 3.5"><path d="M0 0H6L3.0 3.5Z" fill="#b8b8b8"/></svg>
<svg class="a" style="left:97px;top:176px;" width="24" height="21" viewBox="0 0 24 21"><path d="M14 5l5-4.5 4 4.5-5 4.5z" fill="#a0a0a0"/><path d="M8 9.5l6-4 4.5 4.5-4 6z" fill="#bdbdbd"/><path d="M1 13l7-3.5 6.5 6.5-3.5 5z" fill="#cfcfcf"/></svg>
<div class="t" style="left:45.40px;top:208.72px;font-size:13.5px;color:#333333;letter-spacing:-0.086px;">Clipboard</div>
<svg class="a" style="left:150px;top:216px;" width="10" height="10" viewBox="0 0 10 10"><path d="M0.6 6V0.6H6" fill="none" stroke="#8a8a8a" stroke-width="1.1"/><path d="M3.5 3.5l5 5M9 4.8V9H4.8" fill="none" stroke="#8a8a8a" stroke-width="1.1"/></svg>
<svg class="a" style="left:193.5px;top:96px;" width="47" height="41" viewBox="0 0 47 41"><rect x="5" y="8" width="41" height="32" rx="2.5" fill="#fff" stroke="#8c8c8c" stroke-width="1.2"/><rect x="11" y="13.5" width="29" height="9" fill="#c8c8c8"/>
    <path d="M11 27.5h2M16 27.5h24M11 32.5h2M16 32.5h24" stroke="#9a9a9a" stroke-width="1.1"/>
    <g stroke="#e8c66c" stroke-width="1.6"><path d="M8 0v16M0 8h16M2.3 2.3l11.4 11.4M13.7 2.3L2.3 13.7"/></g><circle cx="8" cy="8" r="3" fill="#fff" stroke="#e8c66c" stroke-width="1"/></svg>
<div class="a" style="left:190px;top:148px;width:56px;height:1px;background:#d4d4d4;"></div>
<div class="t" style="left:203.00px;top:149.80px;font-size:15px;color:#333333;letter-spacing:-0.004px;">New</div>
<div class="t" style="left:196.00px;top:169.80px;font-size:15px;color:#333333;letter-spacing:-0.214px;">Slide</div>
<svg class="a" style="left:233.0px;top:180.2px;" width="6" height="3.5" viewBox="0 0 6 3.5"><path d="M0 0H6L3.0 3.5Z" fill="#505050"/></svg>
<svg class="a" style="left:265.5px;top:101px;" width="24.5" height="20.2" viewBox="0 0 24.5 20.2"><rect x="0.6" y="0.6" width="23.3" height="19" rx="1.5" fill="#fff" stroke="#7d7d7d" stroke-width="1.2"/><rect x="3.5" y="3.5" width="17.5" height="4" fill="#c8c8c8"/><rect x="3.5" y="9.5" width="7" height="7" fill="#c8c8c8"/><path d="M12.5 10h8.5M12.5 13h8.5M12.5 16h8.5" stroke="#9a9a9a" stroke-width="1.1"/></svg>
<div class="t" style="left:295.40px;top:100.40px;font-size:15px;color:#333333;letter-spacing:-0.287px;">Layout</div>
<svg class="a" style="left:343.0px;top:110.0px;" width="6" height="3.5" viewBox="0 0 6 3.5"><path d="M0 0H6L3.0 3.5Z" fill="#505050"/></svg>
<svg class="a" style="left:265.5px;top:138.5px;" width="25" height="21" viewBox="0 0 25 21"><rect x="3" y="3" width="21" height="17" rx="1.5" fill="#fff" stroke="#7d7d7d" stroke-width="1.2"/><rect x="5.5" y="9" width="7" height="8" fill="#c8c8c8"/><path d="M14.5 8.5h7M14.5 11.5h7M14.5 14.5h7M14.5 17h7" stroke="#9a9a9a" stroke-width="1"/>
    <path d="M2.5 8.5c.5-6 8-8.5 12-3.5" fill="none" stroke="#3b78c4" stroke-width="2.2"/><path d="M0 3.5l2.2 6.5 5.8-2.5z" fill="#3b78c4"/></svg>
<div class="t" style="left:295.40px;top:137.90px;font-size:15px;color:#333333;letter-spacing:-0.946px;">Reset</div>
<svg class="a" style="left:265.5px;top:174.5px;" width="24" height="23.5" viewBox="0 0 24 23.5"><g stroke="#e8c66c" stroke-width="1.2"><path d="M4.5 0v9M0 4.5h9M1.3 1.3l6.4 6.4M7.7 1.3L1.3 7.7"/></g>
    <rect x="8.5" y="4.5" width="14.5" height="4" fill="#fff" stroke="#e0a86a" stroke-width="1.2"/><rect x="8.5" y="11.5" width="14.5" height="11" rx="1" fill="#fff" stroke="#7d7d7d" stroke-width="1.2"/><rect x="11" y="14" width="9.5" height="3" fill="#c8c8c8"/></svg>
<div class="t" style="left:295.40px;top:176.10px;font-size:15px;color:#333333;letter-spacing:-0.289px;">Section</div>
<svg class="a" style="left:348.0px;top:185.6px;" width="6" height="3.5" viewBox="0 0 6 3.5"><path d="M0 0H6L3.0 3.5Z" fill="#505050"/></svg>
<div class="t" style="left:255.00px;top:208.72px;font-size:13.5px;color:#333333;letter-spacing:-0.654px;">Slides</div>
<div class="a" style="left:390px;top:108px;width:204px;height:30px;background:#fff;border:1px solid #c6c6c6;box-sizing:border-box;"></div>
<div class="a" style="left:594px;top:108px;width:56px;height:30px;background:#fff;border:1px solid #c6c6c6;box-sizing:border-box;"></div>
<svg class="a" style="left:583.5px;top:121.8px;" width="6" height="3.5" viewBox="0 0 6 3.5"><path d="M0 0H6L3.0 3.5Z" fill="#b8b8b8"/></svg>
<svg class="a" style="left:638.7px;top:121.8px;" width="6" height="3.5" viewBox="0 0 6 3.5"><path d="M0 0H6L3.0 3.5Z" fill="#b8b8b8"/></svg>
<div class="t" style="left:664.50px;top:114.10px;font-size:22.5px;color:#ababab;-webkit-text-stroke:.45px #ababab;">A</div>
<svg class="a" style="left:678.5px;top:113.5px;" width="7" height="4" viewBox="0 0 7 4"><path d="M0 4h7L3.5 0z" fill="#b0b0b0"/></svg>
<div class="t" style="left:716.20px;top:115.84px;font-size:17.5px;color:#ababab;-webkit-text-stroke:.45px #ababab;">A</div>
<svg class="a" style="left:729.5px;top:114px;" width="7" height="4" viewBox="0 0 7 4"><path d="M0 0h7L3.5 4z" fill="#b0b0b0"/></svg>
<div class="t" style="left:769.00px;top:110.95px;font-size:14px;color:#ababab;-webkit-text-stroke:.3px #ababab;">A</div>
<svg class="a" style="left:773px;top:120.5px;" width="16" height="15.5" viewBox="0 0 16 15.500"><path d="M9.500 0.500l6 5.500-6.500 7-6-5.500z" fill="#cfc8c8"/><path d="M3 7.500l6 5.500-1.700 1.800-6-5.500z" fill="#e4dede"/><path d="M3.600 6.900l6 5.500" stroke="#f3f3f3" stroke-width="1"/></svg>
<div class="t" style="left:407.50px;top:161.52px;font-size:21px;color:#a0a0a0;font-weight:bold;">B</div>
<div class="t" style="left:459.50px;top:161.38px;font-size:22px;color:#a6a6a6;font-weight:bold;font-style:italic;font-family:'Liberation Serif', serif;">I</div>
<div class="t" style="left:509.60px;top:161.04px;font-size:19.5px;color:#a6a6a6;-webkit-text-stroke:.5px #a6a6a6;">U</div>
<div class="a" style="left:510px;top:182.3px;width:13.5px;height:1.7px;background:#a6a6a6;"></div>
<div class="t" style="left:561.00px;top:161.52px;font-size:21px;color:#a0a0a0;font-weight:bold;text-shadow:1.5px 1.5px 1.5px #c8c8c8;">S</div>
<div class="t" style="left:606.80px;top:163.90px;font-size:15px;color:#b0b0b0;letter-spacing:0.158px;-webkit-text-stroke:.25px #b0b0b0;">abc</div>
<div class="a" style="left:606px;top:175.5px;width:26px;height:1.2px;background:#b0b0b0;"></div>
<div class="t" style="left:659.60px;top:158.90px;font-size:15px;color:#b0b0b0;letter-spacing:2.103px;-webkit-text-stroke:.35px #b0b0b0;">AV</div>
<svg class="a" style="left:659.5px;top:178.5px;" width="21.5" height="6" viewBox="0 0 21.5 6"><path d="M1 3h19.5" stroke="#b0b0b0" stroke-width="1.2"/><path d="M3.5 0.5L1 3l2.5 2.5M18 0.5L20.5 3 18 5.5" fill="none" stroke="#b0b0b0" stroke-width="1.2"/></svg>
<svg class="a" style="left:685.0px;top:172.8px;" width="6" height="3.5" viewBox="0 0 6 3.5"><path d="M0 0H6L3.0 3.5Z" fill="#bdbdbd"/></svg>
<div class="t" style="left:710.40px;top:162.22px;font-size:19px;color:#b0b0b0;letter-spacing:0.760px;-webkit-text-stroke:.35px #b0b0b0;">Aa</div>
<svg class="a" style="left:736.8px;top:172.8px;" width="6" height="3.5" viewBox="0 0 6 3.5"><path d="M0 0H6L3.0 3.5Z" fill="#bdbdbd"/></svg>
<div class="t" style="left:762.30px;top:160.66px;font-size:23.5px;color:#b0b0b0;-webkit-text-stroke:.45px #b0b0b0;">A</div>
<svg class="a" style="left:792.0px;top:172.8px;" width="6" height="3.5" viewBox="0 0 6 3.5"><path d="M0 0H6L3.0 3.5Z" fill="#bdbdbd"/></svg>
<div class="t" style="left:573.40px;top:208.72px;font-size:13.5px;color:#333333;letter-spacing:-0.671px;">Font</div>
<svg class="a" style="left:798px;top:216px;" width="10" height="10" viewBox="0 0 10 10"><path d="M0.6 6V0.6H6" fill="none" stroke="#c0c0c0" stroke-width="1.1"/><path d="M3.5 3.5l5 5M9 4.8V9H4.8" fill="none" stroke="#c0c0c0" stroke-width="1.1"/></svg>
<svg class="a" style="left:841.4px;top:114.2px;" width="23" height="20" viewBox="0 0 23 20"><path d="M0 1.8h14.5" stroke="#b0b0b0" stroke-width="1.1"/><circle cx="20.3" cy="1.8" r="1.9" fill="#b0b0b0"/><path d="M0 9.8h14.5" stroke="#b0b0b0" stroke-width="1.1"/><circle cx="20.3" cy="9.8" r="1.9" fill="#b0b0b0"/><path d="M0 17.8h14.5" stroke="#b0b0b0" stroke-width="1.1"/><circle cx="20.3" cy="17.8" r="1.9" fill="#b0b0b0"/></svg>
<svg class="a" style="left:874.0px;top:122.5px;" width="6" height="3.5" viewBox="0 0 6 3.5"><path d="M0 0H6L3.0 3.5Z" fill="#bdbdbd"/></svg>
<svg class="a" style="left:895.7px;top:114.2px;" width="23" height="20" viewBox="0 0 23 20"><path d="M0 1.8h14.5" stroke="#b0b0b0" stroke-width="1.1"/><path d="M0 9.8h14.5" stroke="#b0b0b0" stroke-width="1.1"/><path d="M0 17.8h14.5" stroke="#b0b0b0" stroke-width="1.1"/></svg>
<div class="t" style="left:913.20px;top:104.05px;font-size:6.5px;color:#b0b0b0;">1</div>
<div class="t" style="left:913.20px;top:112.05px;font-size:6.5px;color:#b0b0b0;">2</div>
<div class="t" style="left:913.20px;top:120.05px;font-size:6.5px;color:#b0b0b0;">3</div>
<svg class="a" style="left:927.8px;top:122.5px;" width="6" height="3.5" viewBox="0 0 6 3.5"><path d="M0 0H6L3.0 3.5Z" fill="#bdbdbd"/></svg>
<svg class="a" style="left:952.3px;top:112.5px;" width="22.5" height="21.5" viewBox="0 0 22.5 21.5"><path d="M0 0.6h22.5M0 20.6h22.5M11 5.6h11.5M11 10.6h11.5M11 15.6h11.5" stroke="#b0b0b0" stroke-width="1.1"/><path d="M1.5 10.6h7.5" stroke="#b0b0b0" stroke-width="2"/><path d="M5 6.5L0.7 10.6 5 14.7" fill="none" stroke="#b0b0b0" stroke-width="2"/></svg>
<svg class="a" style="left:1003.8px;top:112.5px;" width="22.5" height="21.5" viewBox="0 0 22.5 21.5"><path d="M0 0.6h22.5M0 20.6h22.5M11 5.6h11.5M11 10.6h11.5M11 15.6h11.5" stroke="#b0b0b0" stroke-width="1.1"/><path d="M0 10.6h7.5" stroke="#b0b0b0" stroke-width="2"/><path d="M4.5 6.5l4.5 4.1-4.5 4.1" fill="none" stroke="#b0b0b0" stroke-width="2"/></svg>
<svg class="a" style="left:1054.6px;top:112.5px;" width="23" height="22" viewBox="0 0 23 22"><path d="M4 1.5v19M0.8 5L4 1.2 7.2 5M0.8 17L4 20.8 7.2 17" fill="none" stroke="#b0b0b0" stroke-width="1.8"/><path d="M10 4h12.5M10 8.5h9M10 13h12.5M10 17.5h9" stroke="#b0b0b0" stroke-width="1.1"/></svg>
<svg class="a" style="left:1081.0px;top:122.5px;" width="6" height="3.5" viewBox="0 0 6 3.5"><path d="M0 0H6L3.0 3.5Z" fill="#bdbdbd"/></svg>
<svg class="a" style="left:1203px;top:101px;" width="21" height="23.5" viewBox="0 0 21 23.5"><path d="M2 0v22M7.5 0v22M13 13v9M18.5 13v9" stroke="#b0b0b0" stroke-width="1.1"/><path d="M0 19.5l2 3 2-3M5.5 19.5l2 3 2-3M11 19.5l2 3 2-3M16.5 19.5l2 3 2-3" fill="none" stroke="#b0b0b0" stroke-width="1.1"/></svg>
<div class="t" style="left:1215.50px;top:94.60px;font-size:15px;color:#b0b0b0;">A</div>
<svg class="a" style="left:1230.3px;top:110.5px;" width="6" height="3.5" viewBox="0 0 6 3.5"><path d="M0 0H6L3.0 3.5Z" fill="#bdbdbd"/></svg>
<svg class="a" style="left:1203px;top:138.2px;" width="24" height="23.5" viewBox="0 0 24 23.5"><path d="M7 2.5H0.6v18H7M17 2.5h6.4v18H17" fill="none" stroke="#b0b0b0" stroke-width="1.2"/><path d="M5 9h14M5 11.5h14M5 14h14" stroke="#d0d0d0" stroke-width=".8"/><path d="M12 0.8v6M9.2 3.6L12 0.8l2.8 2.8M12 22.2v-6M9.2 19.4l2.8 2.8 2.8-2.8" fill="none" stroke="#b0b0b0" stroke-width="1.5"/></svg>
<svg class="a" style="left:1230.3px;top:147.9px;" width="6" height="3.5" viewBox="0 0 6 3.5"><path d="M0 0H6L3.0 3.5Z" fill="#bdbdbd"/></svg>
<svg class="a" style="left:1203px;top:178.2px;" width="24.5" height="19.5" viewBox="0 0 24.5 19.5"><path d="M0 0.5h16l5 5.5-5 5.5H0l5-5.5z" fill="#b8b8b8"/><rect x="9.5" y="8" width="14" height="10.5" fill="#f3f3f3" stroke="#b0b0b0" stroke-width="1.1"/><path d="M12 11.5h2M15.5 11.5h5.5M12 15h2M15.5 15h5.5" stroke="#b0b0b0" stroke-width="1"/></svg>
<svg class="a" style="left:1230.3px;top:185.2px;" width="6" height="3.5" viewBox="0 0 6 3.5"><path d="M0 0H6L3.0 3.5Z" fill="#bdbdbd"/></svg>
<svg class="a" style="left:845.7px;top:162.5px;" width="20.5" height="21.6" viewBox="0 0 20.5 21.6"><path d="M0.0 0.6h20.5" stroke="#b0b0b0" stroke-width="1.1"/><path d="M0.0 5.6h15" stroke="#b0b0b0" stroke-width="1.1"/><path d="M0.0 10.7h20.5" stroke="#b0b0b0" stroke-width="1.1"/><path d="M0.0 15.7h15" stroke="#b0b0b0" stroke-width="1.1"/><path d="M0.0 20.8h20.5" stroke="#b0b0b0" stroke-width="1.1"/></svg>
<svg class="a" style="left:897px;top:162.5px;" width="20" height="21.6" viewBox="0 0 20 21.6"><path d="M0.0 0.6h20" stroke="#b0b0b0" stroke-width="1.1"/><path d="M3.0 5.6h14" stroke="#b0b0b0" stroke-width="1.1"/><path d="M0.0 10.7h20" stroke="#b0b0b0" stroke-width="1.1"/><path d="M3.0 15.7h14" stroke="#b0b0b0" stroke-width="1.1"/><path d="M0.0 20.8h20" stroke="#b0b0b0" stroke-width="1.1"/></svg>
<svg class="a" style="left:948px;top:162.5px;" width="20.5" height="21.6" viewBox="0 0 20.5 21.6"><path d="M0.0 0.6h20.5" stroke="#b0b0b0" stroke-width="1.1"/><path d="M5.5 5.6h15" stroke="#b0b0b0" stroke-width="1.1"/><path d="M0.0 10.7h20.5" stroke="#b0b0b0" stroke-width="1.1"/><path d="M5.5 15.7h15" stroke="#b0b0b0" stroke-width="1.1"/><path d="M0.0 20.8h20.5" stroke="#b0b0b0" stroke-width="1.1"/></svg>
<svg class="a" style="left:999px;top:162.5px;" width="20.5" height="21.6" viewBox="0 0 20.5 21.6"><path d="M0.0 0.6h20.5" stroke="#b0b0b0" stroke-width="1.1"/><path d="M0.0 5.6h20.5" stroke="#b0b0b0" stroke-width="1.1"/><path d="M0.0 10.7h20.5" stroke="#b0b0b0" stroke-width="1.1"/><path d="M0.0 15.7h20.5" stroke="#b0b0b0" stroke-width="1.1"/><path d="M0.0 20.8h20.5" stroke="#b0b0b0" stroke-width="1.1"/></svg>
<svg class="a" style="left:1023.7px;top:172.8px;" width="6" height="3.5" viewBox="0 0 6 3.5"><path d="M0 0H6L3.0 3.5Z" fill="#bdbdbd"/></svg>
<svg class="a" style="left:1051.7px;top:167.5px;" width="18.5" height="13" viewBox="0 0 18.5 13"><path d="M10.5 0.8h7.2M14.3 0.8v11.4M17 0.8v11.4" stroke="#b0b0b0" stroke-width="1.3" fill="none"/><path d="M14.3 0.8h-1.6a3 3 0 0 0 0 6h1.6z" fill="#b0b0b0"/><path d="M0 1.5l6 5-6 5z" fill="#b0b0b0"/></svg>
<svg class="a" style="left:1102.3px;top:167.5px;" width="18.5" height="13" viewBox="0 0 18.5 13"><path d="M3 0.8h7.2M6.8 0.8v11.4M9.5 0.8v11.4" stroke="#b0b0b0" stroke-width="1.3" fill="none"/><path d="M6.8 0.8H5.2a3 3 0 0 0 0 6h1.6z" fill="#b0b0b0"/><path d="M18.5 1.5l-6 5 6 5z" fill="#b0b0b0"/></svg>
<svg class="a" style="left:1151.6px;top:162.5px;" width="21.5" height="22" viewBox="0 0 21.5 22"><path d="M0 0.6h9.5M12 0.6h9.5" stroke="#b0b0b0" stroke-width="1.1"/><path d="M0 5.6h9.5M12 5.6h9.5" stroke="#b0b0b0" stroke-width="1.1"/><path d="M0 10.7h9.5M12 10.7h9.5" stroke="#b0b0b0" stroke-width="1.1"/><path d="M0 15.7h9.5M12 15.7h9.5" stroke="#b0b0b0" stroke-width="1.1"/><path d="M0 20.8h9.5M12 20.8h9.5" stroke="#b0b0b0" stroke-width="1.1"/></svg>
<svg class="a" style="left:1178.0px;top:172.8px;" width="6" height="3.5" viewBox="0 0 6 3.5"><path d="M0 0H6L3.0 3.5Z" fill="#bdbdbd"/></svg>
<div class="t" style="left:995.00px;top:208.72px;font-size:13.5px;color:#333333;letter-spacing:-0.281px;">Paragraph</div>
<svg class="a" style="left:1237px;top:216px;" width="10" height="10" viewBox="0 0 10 10"><path d="M0.6 6V0.6H6" fill="none" stroke="#c0c0c0" stroke-width="1.1"/><path d="M3.5 3.5l5 5M9 4.8V9H4.8" fill="none" stroke="#c0c0c0" stroke-width="1.1"/></svg>
<svg class="a" style="left:1279.6px;top:97.6px;" width="45.5" height="44.5" viewBox="0 0 45.5 44.5"><circle cx="31.5" cy="14.5" r="13.3" fill="#fff" stroke="#41719c" stroke-width="1.1"/>
    <rect x="0.6" y="6.5" width="24.5" height="24" fill="#fff" stroke="#41719c" stroke-width="1.1"/>
    <path d="M21.7 17.5l13 13-13 13-13-13z" fill="#fff" stroke="#41719c" stroke-width="1.1"/></svg>
<div class="t" style="left:1278.50px;top:144.80px;font-size:15px;color:#333333;letter-spacing:-0.915px;">Shapes</div>
<svg class="a" style="left:1298.8px;top:174.6px;" width="6" height="3.5" viewBox="0 0 6 3.5"><path d="M0 0H6L3.0 3.5Z" fill="#505050"/></svg>
<svg class="a" style="left:1345px;top:99.2px;" width="41.5" height="41" viewBox="0 0 41.5 41"><rect x="20" y="8" width="12.8" height="12.5" fill="#eac069"/><rect x="7.8" y="20.3" width="12.8" height="12.2" fill="#eac069"/>
    <rect x="0.6" y="0.6" width="18" height="17.5" fill="#fff" stroke="#6a6a6a" stroke-width="1.1"/><rect x="22.2" y="22.2" width="18.3" height="17.7" fill="#fff" stroke="#6a6a6a" stroke-width="1.1"/></svg>
<div class="t" style="left:1339.40px;top:144.80px;font-size:15px;color:#333333;letter-spacing:-0.161px;">Arrange</div>
<svg class="a" style="left:1362.8px;top:174.6px;" width="6" height="3.5" viewBox="0 0 6 3.5"><path d="M0 0H6L3.0 3.5Z" fill="#505050"/></svg>
<svg class="a" style="left:1410px;top:100px;" width="44" height="43.5" viewBox="0 0 44 43.5"><rect x="0.6" y="0.6" width="38" height="37.5" rx="7" fill="#f0eef1" stroke="#c4c4c4" stroke-width="1.2"/>
    <path d="M43 12l-11 13 4 4 8-10z" fill="#a8a8a8"/><path d="M32 25l-5 4.5 4.5 5 4.5-5.5z" fill="#c6c6c6"/><path d="M27 29.5c-5 1-7 6-15 13.5h16c3-2 5-5 3.5-8.500z" fill="#b4b4b4"/></svg>
<div class="t" style="left:1411.50px;top:144.80px;font-size:15px;color:#a6a6a6;letter-spacing:-0.461px;">Quick</div>
<div class="t" style="left:1406.70px;top:164.50px;font-size:15px;color:#a6a6a6;letter-spacing:-0.729px;">Styles</div>
<svg class="a" style="left:1447.6px;top:174.8px;" width="6" height="3.5" viewBox="0 0 6 3.5"><path d="M0 0H6L3.0 3.5Z" fill="#bdbdbd"/></svg>
<svg class="a" style="left:1476px;top:97.5px;" width="19" height="20" viewBox="0 0 19 20"><path d="M7.5 4.5l8.5 7.5-7.5 7.5L1 12z" fill="#f3f3f3" stroke="#b0b0b0" stroke-width="1.3"/><path d="M7.5 7V2.3a1.8 1.8 0 0 1 3.6 0v3" fill="none" stroke="#b0b0b0" stroke-width="1.2"/><path d="M15.5 9c1.5 2 2.5 4 2.5 5.500a1.500 1.500 0 0 1-3 0c0-1.500.2-3 .5-5.500z" fill="#b0b0b0"/></svg>
<div class="t" style="left:1501.70px;top:96.10px;font-size:15px;color:#a6a6a6;letter-spacing:-0.411px;">Shape Fill</div>
<svg class="a" style="left:1568.8px;top:106.0px;" width="6" height="3.5" viewBox="0 0 6 3.5"><path d="M0 0H6L3.0 3.5Z" fill="#bdbdbd"/></svg>
<svg class="a" style="left:1471.8px;top:135.5px;" width="24" height="17.5" viewBox="0 0 24 17.5"><path d="M13 1H0.6v15.3H15" fill="none" stroke="#b0b0b0" stroke-width="1.2"/><path d="M20.500 0.5l3 3L12 15l-4.500 1.500L9 12z" fill="#b0b0b0"/></svg>
<div class="t" style="left:1501.70px;top:132.70px;font-size:15px;color:#a6a6a6;letter-spacing:-0.264px;">Shape Outline</div>
<svg class="a" style="left:1598.2px;top:142.7px;" width="6" height="3.5" viewBox="0 0 6 3.5"><path d="M0 0H6L3.0 3.5Z" fill="#bdbdbd"/></svg>
<svg class="a" style="left:1474.5px;top:173.5px;" width="25" height="20" viewBox="0 0 25 20"><path d="M6.500 1h16l-5 13h-16z" fill="#f0f0f0" stroke="#c0c0c0" stroke-width="1.2"/><path d="M1.500 14h16l5-13 1.500 2.500-5 14.500H3z" fill="#b8b8b8"/></svg>
<div class="t" style="left:1504.60px;top:173.10px;font-size:15px;color:#a6a6a6;letter-spacing:-0.427px;">Shape Effects</div>
<svg class="a" style="left:1597.2px;top:182.8px;" width="6" height="3.5" viewBox="0 0 6 3.5"><path d="M0 0H6L3.0 3.5Z" fill="#bdbdbd"/></svg>
<div class="t" style="left:1406.30px;top:208.72px;font-size:13.5px;color:#333333;letter-spacing:-0.386px;">Drawing</div>
<svg class="a" style="left:1606px;top:216px;" width="10" height="10" viewBox="0 0 10 10"><path d="M0.6 6V0.6H6" fill="none" stroke="#c0c0c0" stroke-width="1.1"/><path d="M3.5 3.5l5 5M9 4.8V9H4.8" fill="none" stroke="#c0c0c0" stroke-width="1.1"/></svg>
<svg class="a" style="left:1654.5px;top:100px;" width="19" height="19.5" viewBox="0 0 19 19.5"><circle cx="11.800" cy="7" r="5.700" fill="#f3f3f3" stroke="#2f7ac8" stroke-width="2.100"/><path d="M7.300 11.500L1.300 17.800" stroke="#3c5a78" stroke-width="2.600" stroke-linecap="round"/></svg>
<div class="t" style="left:1681.30px;top:98.90px;font-size:15px;color:#333333;letter-spacing:-0.727px;">Find</div>
<div class="t" style="left:1649.50px;top:129.12px;font-size:13.5px;color:#444;-webkit-text-stroke:.3px #444;">a</div>
<div class="t" style="left:1657.50px;top:129.12px;font-size:13.5px;color:#8e5ba6;-webkit-text-stroke:.3px #8e5ba6;">b</div>
<div class="t" style="left:1657.30px;top:139.62px;font-size:13.5px;color:#444;letter-spacing:0.242px;-webkit-text-stroke:.3px #444;">ac</div>
<svg class="a" style="left:1649.5px;top:148.5px;" width="8" height="7.5" viewBox="0 0 8 7.5"><path d="M1.200 0v3.800h5.500" fill="none" stroke="#2f7ac8" stroke-width="1.200"/><path d="M4.500 1.500l2.500 2.300-2.500 2.300" fill="none" stroke="#2f7ac8" stroke-width="1.200"/></svg>
<div class="t" style="left:1678.30px;top:135.90px;font-size:15px;color:#333333;letter-spacing:-0.422px;">Replace</div>
<svg class="a" style="left:1752.0px;top:145.8px;" width="6" height="3.5" viewBox="0 0 6 3.5"><path d="M0 0H6L3.0 3.5Z" fill="#505050"/></svg>
<svg class="a" style="left:1657.5px;top:173px;" width="15.5" height="22.5" viewBox="0 0 15.5 22.5"><path d="M0.700 0.900v17.500l4-3.800 2.800 6.800 3-1.300-2.800-6.600h5.500z" fill="#fff" stroke="#555" stroke-width="1.100" stroke-linejoin="round"/></svg>
<div class="t" style="left:1681.30px;top:173.10px;font-size:15px;color:#333333;letter-spacing:-0.438px;">Select</div>
<svg class="a" style="left:1725.0px;top:182.9px;" width="6" height="3.5" viewBox="0 0 6 3.5"><path d="M0 0H6L3.0 3.5Z" fill="#505050"/></svg>
<div class="t" style="left:1685.30px;top:208.72px;font-size:13.5px;color:#333333;letter-spacing:-0.313px;">Editing</div>
<svg class="a" style="left:1890px;top:216.5px;" width="11.5" height="7" viewBox="0 0 11.5 7"><path d="M0.800 6.200l5-5 5 5" fill="none" stroke="#555" stroke-width="1.500"/></svg>
<div class="a" style="left:0px;top:230px;width:1920px;height:37px;background:#fcf7b6;"></div>
<div class="a" style="left:0px;top:230px;width:1920px;height:1.4px;background:#d9d6ad;"></div>
<div class="a" style="left:0px;top:265.8px;width:1920px;height:1.2px;background:#e6e4cc;"></div>
<svg class="a" style="left:11.5px;top:238.8px;" width="22" height="22" viewBox="0 0 22 22"><circle cx="11" cy="11" r="11" fill="#4683c4"/><circle cx="11" cy="5.800" r="1.600" fill="#fff"/><rect x="9.700" y="9" width="2.600" height="8.500" fill="#fff"/></svg>
<div class="t" style="left:46.50px;top:237.60px;font-size:15px;color:#423f2a;letter-spacing:-0.733px;-webkit-text-stroke:.12px #423f2a;">UPDATES AVAILABLE</div>
<div class="t" style="left:197.50px;top:237.60px;font-size:15px;color:#423f2a;letter-spacing:-0.010px;">Updates for Office are ready to be installed, but first we need to close some apps.</div>
<div class="a" style="left:760.5px;top:236px;width:114px;height:25.5px;background:#fdfdfd;border:1px solid #ababab;box-sizing:border-box;"></div>
<div class="t" style="left:776.50px;top:237.60px;font-size:15px;color:#3a3a3a;letter-spacing:-0.006px;">Update now</div>
<svg class="a" style="left:1898.5px;top:244.5px;" width="9" height="9" viewBox="0 0 9 9"><path d="M1 1l7 7M8 1L1 8" stroke="#444" stroke-width="1.700"/></svg>
<div class="a" style="left:0px;top:990px;width:1920px;height:40px;background:#f3f3f3;"></div>
<div class="a" style="left:0px;top:990px;width:1920px;height:1px;background:#d2d2d2;"></div>
<div class="t" style="left:14.30px;top:998.82px;font-size:13.5px;color:#3a3a3a;letter-spacing:-0.255px;">Slide 4 of 12</div>
<svg class="a" style="left:118.8px;top:999px;" width="23" height="19" viewBox="0 0 23 19"><path d="M10.300 3.200C8.500 1.800 5 1.500 0.600 1.600v13.800c4.400-.1 7.900.2 9.700 1.600 1.800-1.400 5.300-1.700 9.700-1.600V10" fill="none" stroke="#6a6a6a" stroke-width="1.100"/><path d="M10.300 3.200V18.500M10.300 3.200c1.200-1 3-1.400 5.200-1.600" fill="none" stroke="#6a6a6a" stroke-width="1.100"/>
    <path d="M19.800 0.800l2.400 2.400-7.200 7.200-3.200.8.800-3.200z" fill="#9a9a9a" stroke="#6a6a6a" stroke-width=".7"/></svg>
<div class="t" style="left:171.20px;top:998.82px;font-size:13.5px;color:#3a3a3a;letter-spacing:-0.506px;">Persian (Iran)</div>
<svg class="a" style="left:1289.5px;top:1001px;" width="18" height="16.5" viewBox="0 0 18 16.5"><path d="M0 6.500h17M0 10.500h17M0 14.500h11" stroke="#555" stroke-width="1.300"/><path d="M5.500 3.800h6L8.500 0z" fill="#555"/></svg>
<div class="t" style="left:1314.40px;top:999.02px;font-size:13.5px;color:#3a3a3a;letter-spacing:-0.192px;">Notes</div>
<svg class="a" style="left:1382px;top:999.5px;" width="22.5" height="19" viewBox="0 0 22.5 19"><path d="M1.500 0h19.500a1.500 1.500 0 0 1 1.500 1.500v11a1.500 1.500 0 0 1-1.500 1.500H11.500L6.500 18.500V14H1.500A1.500 1.500 0 0 1 0 12.500v-11A1.500 1.500 0 0 1 1.500 0z" fill="#505050"/></svg>
<div class="t" style="left:1408.50px;top:999.02px;font-size:13.5px;color:#3a3a3a;letter-spacing:-0.538px;">Comments</div>
<div class="a" style="left:1497px;top:991px;width:51px;height:39px;background:#c8c8c8;"></div>
<svg class="a" style="left:1513px;top:1001.5px;" width="20" height="17.5" viewBox="0 0 20 17.5"><rect x="0.600" y="0.600" width="18.500" height="16" fill="none" stroke="#6e6e6e" stroke-width="1.100"/><path d="M5 0.600v16M5 12.500h14" stroke="#6e6e6e" stroke-width="1.100"/><rect x="8.500" y="3.800" width="7.500" height="5.800" fill="none" stroke="#6e6e6e" stroke-width="1.100"/></svg>
<svg class="a" style="left:1563.7px;top:1001.5px;" width="20" height="17.5" viewBox="0 0 20 17.5"><rect x="0.6" y="0.6" width="7.800" height="6.300" fill="none" stroke="#6e6e6e" stroke-width="1.100"/><rect x="0.6" y="10" width="7.800" height="6.300" fill="none" stroke="#6e6e6e" stroke-width="1.100"/><rect x="11.2" y="0.6" width="7.800" height="6.300" fill="none" stroke="#6e6e6e" stroke-width="1.100"/><rect x="11.2" y="10" width="7.800" height="6.300" fill="none" stroke="#6e6e6e" stroke-width="1.100"/></svg>
<svg class="a" style="left:1614.3px;top:1000px;" width="21" height="20" viewBox="0 0 21 20"><path d="M0.600 1.500h8.300c.8 0 1.400.6 1.400 1.400v13c0-.8-.6-1.400-1.400-1.400H0.600zM20.200 1.500h-8.400c-.8 0-1.500.6-1.500 1.400v13c0-.8.700-1.400 1.500-1.400h8.400z" fill="none" stroke="#6e6e6e" stroke-width="1.100"/><path d="M3 5h5M3 7.800h5M3 10.600h5M12.800 5h5M12.800 7.800h5M12.800 10.600h5" stroke="#6e6e6e" stroke-width="1"/><path d="M10.300 16v3M8.500 17.500l1.800 1.800 1.800-1.800" fill="none" stroke="#6e6e6e" stroke-width="1"/></svg>
<svg class="a" style="left:1666px;top:1000.5px;" width="19" height="18.5" viewBox="0 0 19 18.5"><path d="M0 1h19" stroke="#6e6e6e" stroke-width="1.600"/><rect x="1.800" y="2" width="15.400" height="9.500" fill="none" stroke="#6e6e6e" stroke-width="1.100"/><path d="M9.500 11.500v5.500M5.500 17.500h8" stroke="#6e6e6e" stroke-width="1.100"/></svg>
<div class="a" style="left:1706.2px;top:1008.5px;width:10.5px;height:1.8px;background:#555;"></div>
<div class="a" style="left:1720.4px;top:1009px;width:125.3px;height:1px;background:#bdbdbd;"></div>
<div class="a" style="left:1782px;top:1005.5px;width:1px;height:8px;background:#b0b0b0;"></div>
<div class="a" style="left:1763px;top:1002.5px;width:6px;height:14.2px;background:#555;"></div>
<div class="a" style="left:1849.8px;top:1008.5px;width:9.2px;height:1.8px;background:#555;"></div>
<div class="a" style="left:1853.5px;top:1004.8px;width:1.8px;height:9.2px;background:#555;"></div>
<div class="t" style="left:1876.00px;top:999.02px;font-size:13.5px;color:#3a3a3a;letter-spacing:-0.924px;">74 %</div>
<div class="a" style="left:0px;top:1030px;width:1920px;height:50px;background:linear-gradient(90deg,#102a45 0%,#0f2944 35%,#0e2742 55%,#15304b 70%,#1f3851 82%,#20384f 96%,#182f45 100%);"></div>
<div class="a" style="left:0px;top:1030px;width:60px;height:50px;background:#1c3548;"></div>
<div class="a" style="left:60px;top:1030px;width:430px;height:50px;background:#f2f3f4;"></div>
<div class="a" style="left:60px;top:1030px;width:430px;height:1px;background:#c4c4c4;"></div>
<svg class="a" style="left:20px;top:1045px;" width="20.5" height="20.5" viewBox="0 0 20.5 20.5"><path d="M0 2.900l8.300-1.150v8H0zM9.300 1.600L20.500 0v9.750H9.300zM0 10.750h8.300v8L0 17.600zM9.300 10.750h11.200v9.750L9.300 18.900z" fill="#fff"/></svg>
<svg class="a" style="left:71px;top:1041px;" width="28" height="28" viewBox="0 0 28 28"><circle cx="14" cy="14" r="11.500" fill="none" stroke="#111" stroke-width="3.400"/><circle cx="14" cy="14" r="13.300" fill="none" stroke="#777" stroke-width=".6"/></svg>
<div class="t" style="left:111.00px;top:1044.56px;font-size:18px;color:#3b3b3b;letter-spacing:-0.427px;">Type here to search</div>
<svg class="a" style="left:457.5px;top:1045px;" width="14" height="20.5" viewBox="0 0 14 20.5"><rect x="4.200" y="0.900" width="5.600" height="11.500" rx="2.800" fill="#444" stroke="#222" stroke-width="1.600"/><path d="M1 8.500v1.500a6 6 0 0 0 12 0V8.500M7 16v3.500M3.500 19.600h7" fill="none" stroke="#222" stroke-width="1.700"/></svg>
<svg class="a" style="left:509px;top:1044.5px;" width="22" height="20" viewBox="0 0 22 20"><rect x="0.800" y="4" width="13.500" height="12" fill="none" stroke="#fff" stroke-width="1.500"/><path d="M0 1h15M0 19h15M18 0.500v5M18 8v7.500M18 18v2M21 3v14" stroke="#fff" stroke-width="1.500"/></svg>
<svg class="a" style="left:571.5px;top:1041.5px;" width="26" height="28" viewBox="0 0 26 28"><path d="M1 12.500C2 5 7.500 0.500 14 0.500c7.500 0 11.500 5.500 11.500 12v3H9c.3 4 3.500 6 7.500 6 3 0 5.500-.8 7.800-2.200v5.500c-2.500 1.500-5.800 2.400-9.300 2.400C7.500 27.200 3 22.500 3 16c0-3.500 1.700-6.800 4.800-8.800C5 8 2.500 9.700 1 12.500zM9.200 11.200h9.300c0-3.200-1.700-5.200-4.500-5.200-2.700 0-4.400 2.200-4.800 5.200z" fill="#1e8ae6"/></svg>
<svg class="a" style="left:631.5px;top:1042.5px;" width="29" height="24" viewBox="0 0 29 24"><path d="M0 2.500C0 1.700.7 1 1.500 1H10l2.500 2.500h15c.8 0 1.500.7 1.500 1.500v17.500c0 .8-.7 1.500-1.500 1.500h-26C.7 24 0 23.300 0 22.500z" fill="#f6d673"/><path d="M0 7h29v3H0z" fill="#e9b93f"/><rect x="3" y="3.500" width="6" height="2" fill="#fff2c0"/><path d="M6 15.500h17v8.500H6z" fill="#4aa3dc"/><path d="M9.500 19h10v5h-10z" fill="#f6d673"/><path d="M6 15.500h17v2.500H6z" fill="#7cc3ee"/></svg>
<svg class="a" style="left:692.5px;top:1040px;" width="29.5" height="29" viewBox="0 0 29.5 29"><path d="M9.500 9V6.500a5.200 5.200 0 0 1 10.400 0V9" fill="none" stroke="#e8e8e8" stroke-width="1.600"/><path d="M0 8.500h29.500v17.500c0 1.700-1.300 3-3 3h-23.500c-1.700 0-3-1.300-3-3z" fill="#fbfbfb"/><rect x="8.500" y="12.500" width="5.600" height="5.600" fill="#f25022"/><rect x="15.300" y="12.500" width="5.600" height="5.600" fill="#7fba00"/><rect x="8.500" y="19.300" width="5.600" height="5.600" fill="#00a4ef"/><rect x="15.300" y="19.300" width="5.600" height="5.600" fill="#ffb900"/></svg>
<svg class="a" style="left:755.5px;top:1041px;" width="28" height="28" viewBox="0 0 28 28"><circle cx="14" cy="14" r="14" fill="#db4437"/><path d="M14 14L1.900 7A14 14 0 0 0 8.200 26.800z" fill="#0f9d58"/><path d="M14 14l-5.800 12.800A14 14 0 0 0 26.100 7H14z" fill="#ffcd40"/><path d="M14 14V7h12.100A14 14 0 0 0 1.900 7z" fill="#db4437"/><circle cx="14" cy="14" r="6.400" fill="#f1f1f1"/><circle cx="14" cy="14" r="5.100" fill="#4285f4"/></svg>
<svg class="a" style="left:816.5px;top:1041px;" width="30" height="28" viewBox="0 0 30 28"><rect x="8" y="0" width="22" height="28" rx="1.500" fill="#2b7cd3"/><rect x="8" y="0" width="22" height="7" fill="#41a5ee"/><rect x="8" y="14" width="22" height="7" fill="#185abd"/><rect x="8" y="21" width="22" height="7" fill="#103f91"/><rect x="0" y="6" width="16" height="16" rx="1.500" fill="#185abd"/><path d="M3 9.500l2.200 9h1.600l1.400-6 1.400 6h1.600l2.200-9h-1.700l-1.300 6.200-1.400-6.200H7.500l-1.400 6.200L4.800 9.500z" fill="#fff"/></svg>
<div class="a" style="left:864.5px;top:1030px;width:60.5px;height:50px;background:#1d4a78;"></div>
<svg class="a" style="left:878px;top:1040.5px;" width="30" height="29" viewBox="0 0 30 29"><circle cx="17" cy="14.500" r="13" fill="#ed6c47"/><path d="M17 1.500a13 13 0 0 1 13 13H17z" fill="#ff8f6b"/><path d="M17 27.500a13 13 0 0 0 13-13H17z" fill="#d35230"/><rect x="0" y="6.500" width="16" height="16" rx="1.500" fill="#c43e1c"/><path d="M5 10h3.800c2 0 3.300 1.200 3.300 3s-1.300 3-3.300 3H6.700v3.200H5zM6.700 11.500v3h1.800c1 0 1.700-.5 1.700-1.500s-.7-1.500-1.700-1.500z" fill="#fff"/></svg>
<div class="a" style="left:558.5px;top:1077px;width:51.5px;height:3px;background:#9cc4e8;"></div>
<div class="a" style="left:621.5px;top:1077px;width:50.5px;height:3px;background:#9cc4e8;"></div>
<div class="a" style="left:745px;top:1077px;width:51px;height:3px;background:#9cc4e8;"></div>
<div class="a" style="left:807px;top:1077px;width:51px;height:3px;background:#9cc4e8;"></div>
<div class="a" style="left:864.5px;top:1077px;width:60.5px;height:3px;background:#9cc4e8;"></div>
<svg class="a" style="left:1568.5px;top:1045px;" width="20" height="20" viewBox="0 0 20 20"><circle cx="13.500" cy="5" r="3.300" fill="none" stroke="#fff" stroke-width="1.400"/><circle cx="6" cy="9.500" r="2.800" fill="none" stroke="#fff" stroke-width="1.400"/><path d="M0.800 19.500c0-4 2-6.500 5.200-6.500 1.500 0 2.700.5 3.600 1.500M8.500 15.500c.6-3.500 2.500-5.500 5-5.500 3 0 5 2.500 5.500 5" fill="none" stroke="#fff" stroke-width="1.400"/></svg>
<svg class="a" style="left:1614px;top:1049px;" width="17.5" height="11" viewBox="0 0 17.5 11"><path d="M1 10l7.700-8.300L16.500 10" fill="none" stroke="#fff" stroke-width="1.500"/></svg>
<svg class="a" style="left:1642px;top:1047px;" width="22" height="19" viewBox="0 0 22 19"><path d="M4.500 13.500a4 4 0 0 1 .5-8 6 6 0 0 1 11-1 4.500 4.500 0 0 1 1.500 8.700z" fill="#e8eef4"/><path d="M2 8a4 4 0 0 1 6-3" fill="#9ab0c4"/><circle cx="16" cy="13.500" r="5" fill="#8a8a8a"/><path d="M14.300 11v5M17.700 11v5" stroke="#fff" stroke-width="1.300"/></svg>
<svg class="a" style="left:1675px;top:1046.5px;" width="18" height="17" viewBox="0 0 18 17"><path d="M1 12A13 13 0 0 1 15 1.500M3.500 14A10 10 0 0 1 15.500 5M6.500 15.500A6.500 6.500 0 0 1 15.500 9" fill="none" stroke="#fff" stroke-width="1.300"/><circle cx="14.500" cy="14.500" r="1.800" fill="#fff"/><path d="M9 16a3.500 3.500 0 0 1 3-3.500" fill="none" stroke="#fff" stroke-width="1.300"/></svg>
<svg class="a" style="left:1702px;top:1047px;" width="21" height="16" viewBox="0 0 21 16"><path d="M0.700 5h3.500L8.500 0.800v14.400L4.200 11H0.700z" fill="none" stroke="#fff" stroke-width="1.300"/><path d="M12.500 4.500l7 7M19.500 4.500l-7 7" stroke="#fff" stroke-width="1.300"/></svg>
<div class="t" style="left:1736.20px;top:1044.55px;font-size:14px;color:#fff;letter-spacing:-1.169px;">ENG</div>
<div class="t" style="left:1779.50px;top:1033.18px;font-size:14.5px;color:#fff;letter-spacing:-0.571px;">12:35</div>
<svg class="a" style="left:1816px;top:1037.5px;" width="33" height="16" viewBox="0 0 33 16"><path d="M1 9c0 2.500 3 2.500 6.500 2.500S13 11 13 8.500" fill="none" stroke="#fff" stroke-width="1.400"/><circle cx="7" cy="14.500" r=".9" fill="#fff"/><circle cx="16" cy="11.500" r=".9" fill="#fff"/><path d="M22 1v10.500M18.500 11.500h9c2.500 0 3.500-1.500 3-3.500s-3-2.500-4.500-.5c-1 1.500 0 4 2.500 4" fill="none" stroke="#fff" stroke-width="1.400"/><circle cx="29" cy="3.500" r=".9" fill="#fff"/></svg>
<svg class="a" style="left:1776.5px;top:1058.5px;" width="73" height="15" viewBox="0 0 73 15"><g fill="none" stroke="#fff" stroke-width="1.500"><path d="M2 1v12"/><path d="M7.500 1v12M7.500 2.500c.8 2 2.200 2 3 0 .8 2 2.200 2 3 0 .8 2 2.200 1.500 2.800-1.500"/><path d="M21.500 13V4.500c0-3 4.200-3 4.200 0 0 2-2.200 2.600-4.200 2.600"/><path d="M29 13l3.500-11.500L36 13"/><path d="M44.500 1L39 13.500"/><path d="M54.500 2.200c-2 .3-3 2.400-1.200 3.800 1 .8 2.600.5 3.200-.3M53.500 6.200c1.500 1.300 2.200 4 2.200 6.800"/><path d="M62.500 1L57.500 13.500"/><path d="M64.200 1v12M64.200 3c.6 1.800 2.400 1.800 3-1"/><path d="M70.800 2.800c-2 2.600-2.800 5.600-1.600 7.800.8 1.200 1.800.8 2.300-.3.500 1.100 1.500 1.500 2.300.3 1.200-2.200-.2-5.200-3-7.800z" stroke-width="1.300"/></g><circle cx="49" cy="8.500" r="1.100" fill="#fff"/></svg>
<svg class="a" style="left:1868.5px;top:1044.5px;" width="22" height="20" viewBox="0 0 22 20"><path d="M0 0h21.500v15.500H8L3.500 20v-4.500H0z" fill="#fff"/><path d="M4 4.500h13.500M4 8h13.500M4 11.500h9" stroke="#16324e" stroke-width="1.200"/></svg>
<svg class="a" style="left:1877.5px;top:1054px;" width="21" height="21" viewBox="0 0 21 21"><circle cx="10.500" cy="10.500" r="9.500" fill="#15396a" stroke="#6f9fd0" stroke-width="1.300"/><path d="M9.500 5c.3 2 1 3 1.500 4.500v7" fill="none" stroke="#fff" stroke-width="1.400"/></svg>
</body></html>
